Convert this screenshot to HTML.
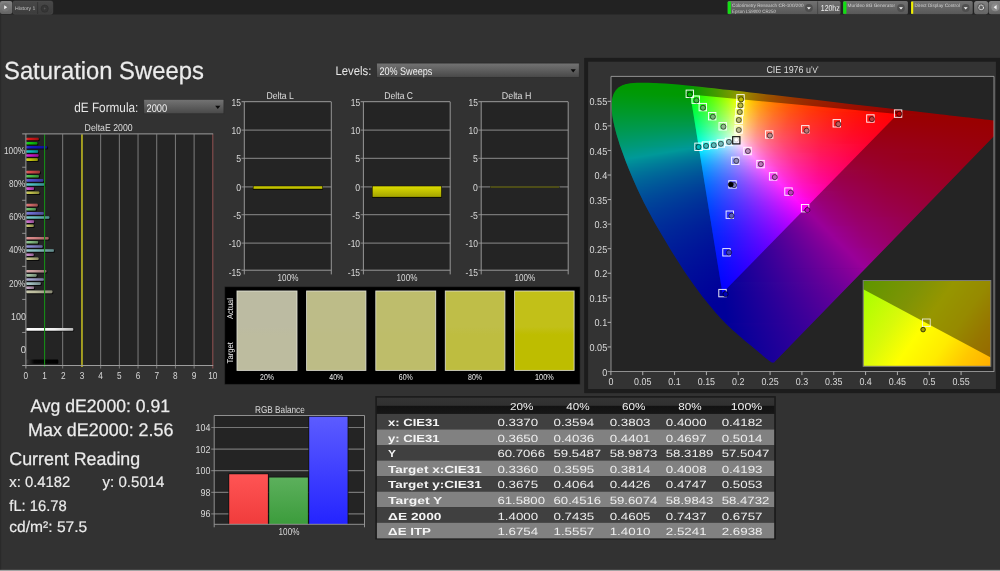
<!DOCTYPE html>
<html lang="en">
<head>
<meta charset="utf-8">
<title>Saturation Sweeps</title>
<style>
html,body{margin:0;padding:0;background:#323232;}
body{width:1000px;height:571px;overflow:hidden;position:relative;font-family:"Liberation Sans",sans-serif;}
svg{position:absolute;left:0;top:0;display:block;will-change:transform}
text{font-family:"Liberation Sans",sans-serif;text-rendering:geometricPrecision;}
</style>
</head>
<body>
<svg width="1000" height="571" viewBox="0 0 1000 571">
<defs>
<linearGradient id="btn" x1="0" y1="0" x2="0" y2="1"><stop offset="0" stop-color="#727272"/><stop offset="1" stop-color="#585858"/></linearGradient>
<linearGradient id="btn2" x1="0" y1="0" x2="0" y2="1"><stop offset="0" stop-color="#848484"/><stop offset="1" stop-color="#646464"/></linearGradient>
<linearGradient id="tab" x1="0" y1="0" x2="0" y2="1"><stop offset="0" stop-color="#484848"/><stop offset="1" stop-color="#3c3c3c"/></linearGradient>
<linearGradient id="dd" x1="0" y1="0" x2="0" y2="1"><stop offset="0" stop-color="#747474"/><stop offset="1" stop-color="#484848"/></linearGradient>
<linearGradient id="bshade" x1="0" y1="0" x2="1" y2="0"><stop offset="0" stop-color="#fff" stop-opacity="0.12"/><stop offset="0.3" stop-color="#000" stop-opacity="0.05"/><stop offset="1" stop-color="#000" stop-opacity="0.32"/></linearGradient>
<linearGradient id="wbar" x1="0" y1="0" x2="1" y2="0"><stop offset="0" stop-color="#ffffff"/><stop offset="0.6" stop-color="#f0f0f0"/><stop offset="1" stop-color="#b8b8b8"/></linearGradient>
<linearGradient id="kbar" x1="0" y1="0" x2="1" y2="0"><stop offset="0" stop-color="#3a3a3a"/><stop offset="0.25" stop-color="#050505"/><stop offset="1" stop-color="#000000"/></linearGradient>
<linearGradient id="rbar" x1="0" y1="0" x2="0" y2="1"><stop offset="0" stop-color="#ff5454"/><stop offset="1" stop-color="#f03c3c"/></linearGradient>
<linearGradient id="gbar" x1="0" y1="0" x2="0" y2="1"><stop offset="0" stop-color="#5cb05c"/><stop offset="1" stop-color="#3c9c3c"/></linearGradient>
<linearGradient id="bbar" x1="0" y1="0" x2="0" y2="1"><stop offset="0" stop-color="#5c5cff"/><stop offset="1" stop-color="#2424ff"/></linearGradient>
<linearGradient id="ybar" x1="0" y1="0" x2="0" y2="1"><stop offset="0" stop-color="#dcdc00"/><stop offset="1" stop-color="#a4a400"/></linearGradient>
<linearGradient id="sw0" x1="0" y1="0" x2="0" y2="1"><stop offset="0" stop-color="#bcbba2"/><stop offset="0.45" stop-color="#bcbba2"/><stop offset="0.55" stop-color="#bdbc9f"/><stop offset="1" stop-color="#bdbc9f"/></linearGradient>
<linearGradient id="sw1" x1="0" y1="0" x2="0" y2="1"><stop offset="0" stop-color="#bdbc88"/><stop offset="0.45" stop-color="#bdbc88"/><stop offset="0.55" stop-color="#bdbc86"/><stop offset="1" stop-color="#bdbc86"/></linearGradient>
<linearGradient id="sw2" x1="0" y1="0" x2="0" y2="1"><stop offset="0" stop-color="#bebd6c"/><stop offset="0.45" stop-color="#bebd6c"/><stop offset="0.55" stop-color="#bebd6a"/><stop offset="1" stop-color="#bebd6a"/></linearGradient>
<linearGradient id="sw3" x1="0" y1="0" x2="0" y2="1"><stop offset="0" stop-color="#bfbe48"/><stop offset="0.45" stop-color="#bfbe48"/><stop offset="0.55" stop-color="#bebd40"/><stop offset="1" stop-color="#bebd40"/></linearGradient>
<linearGradient id="sw4" x1="0" y1="0" x2="0" y2="1"><stop offset="0" stop-color="#c2c018"/><stop offset="0.45" stop-color="#c2c018"/><stop offset="0.55" stop-color="#bebd00"/><stop offset="1" stop-color="#bebd00"/></linearGradient>
<clipPath id="locus"><path d="M774.2 362.3 L774.0 362.4 L773.7 362.4 L773.5 362.6 L772.6 362.6 L772.1 362.5 L771.5 362.3 L770.4 361.5 L768.8 360.4 L767.4 359.3 L765.6 357.9 L764.2 356.8 L761.1 354.1 L759.2 352.5 L757.2 350.8 L753.8 348.0 L751.2 345.8 L748.3 343.5 L745.2 340.9 L741.9 338.1 L738.3 335.0 L736.4 333.3 L732.3 329.7 L730.2 327.7 L725.7 323.4 L723.4 321.0 L720.9 318.4 L718.3 315.5 L715.5 312.4 L712.5 308.8 L709.3 305.0 L705.9 300.8 L702.4 296.4 L698.9 291.7 L695.2 286.7 L691.5 281.5 L687.6 276.0 L683.7 270.2 L679.7 264.1 L675.7 257.7 L671.6 251.2 L663.4 237.6 L655.3 223.7 L647.6 209.5 L643.9 202.4 L640.4 195.3 L637.2 188.4 L634.1 181.6 L631.3 175.0 L628.6 168.6 L626.1 162.3 L623.9 156.3 L621.8 150.6 L619.9 145.2 L618.3 140.0 L616.8 135.2 L615.6 130.7 L614.5 126.5 L613.6 122.5 L612.9 118.8 L612.3 115.4 L611.9 112.2 L611.7 109.3 L611.6 106.6 L611.6 104.1 L611.8 101.7 L612.0 99.6 L612.5 97.5 L613.6 94.0 L615.3 91.0 L616.3 89.7 L618.5 87.5 L621.1 85.9 L622.5 85.2 L625.4 84.2 L630.2 83.3 L637.2 82.8 L648.0 82.7 L653.5 82.9 L659.2 83.2 L665.1 83.5 L671.4 84.0 L677.9 84.6 L684.8 85.2 L692.1 86.0 L699.9 86.8 L708.2 87.7 L714.0 88.3 L723.1 89.4 L729.6 90.1 L736.2 90.8 L743.2 91.6 L750.4 92.5 L757.9 93.3 L765.6 94.2 L773.6 95.1 L786.1 96.6 L794.7 97.6 L803.6 98.6 L817.1 100.1 L849.6 103.9 L863.1 105.4 L880.9 107.5 L889.6 108.5 L893.7 109.0 L901.7 109.9 L909.4 110.8 L916.7 111.6 L920.2 112.0 L926.9 112.8 L933.2 113.5 L939.1 114.2 L944.6 114.8 L949.7 115.4 L954.5 115.9 L961.0 116.7 L965.0 117.2 L968.8 117.6 L974.2 118.2 L979.0 118.8 L981.9 119.1 L984.6 119.4 L988.2 119.8 L991.3 120.2 L994.6 120.6 L996.8 120.8 L999.1 121.1 L1000.4 121.2 L1002.4 121.5 L1003.8 121.6 L1005.9 121.9 L1006.7 122.0 L1007.3 122.0 L1007.6 122.1 Z"/><rect x="0" y="0" width="0" height="0"/></clipPath>
<clipPath id="plotclip"><rect x="611.0" y="76.4" width="383.0" height="295.1"/></clipPath>
<clipPath id="gamut"><path d="M897.66 114.03 L690.29 94.61 L722.40 292.98 Z"/></clipPath>
<linearGradient id="r0" gradientUnits="userSpaceOnUse" x1="632.4" x2="657.6"><stop offset="0" stop-color="#090"/><stop offset="1" stop-color="#090"/></linearGradient>
<linearGradient id="r1" gradientUnits="userSpaceOnUse" x1="624.9" x2="672.7"><stop offset="0" stop-color="#090"/><stop offset="1" stop-color="#090"/></linearGradient>
<linearGradient id="r2" gradientUnits="userSpaceOnUse" x1="621.6" x2="683.8"><stop offset="0" stop-color="#090"/><stop offset="1" stop-color="#090"/></linearGradient>
<linearGradient id="r3" gradientUnits="userSpaceOnUse" x1="619.4" x2="693.8"><stop offset="0" stop-color="#090"/><stop offset=".933" stop-color="#090"/><stop offset="1" stop-color="#0b9900"/></linearGradient>
<linearGradient id="r4" gradientUnits="userSpaceOnUse" x1="617.7" x2="703.2"><stop offset="0" stop-color="#090"/><stop offset=".830" stop-color="#090"/><stop offset="1" stop-color="#290"/></linearGradient>
<linearGradient id="r5" gradientUnits="userSpaceOnUse" x1="616.5" x2="712.4"><stop offset="0" stop-color="#090"/><stop offset=".755" stop-color="#090"/><stop offset="1" stop-color="#3a9900"/></linearGradient>
<linearGradient id="r6" gradientUnits="userSpaceOnUse" x1="615.4" x2="721.4"><stop offset="0" stop-color="#009901"/><stop offset=".698" stop-color="#090"/><stop offset=".854" stop-color="#299900"/><stop offset="1" stop-color="#549900"/></linearGradient>
<linearGradient id="r7" gradientUnits="userSpaceOnUse" x1="614.5" x2="730.3"><stop offset="0" stop-color="#009903"/><stop offset=".647" stop-color="#090"/><stop offset=".832" stop-color="#369900"/><stop offset="1" stop-color="#719900"/></linearGradient>
<linearGradient id="r8" gradientUnits="userSpaceOnUse" x1="613.8" x2="739.1"><stop offset="0" stop-color="#009905"/><stop offset=".606" stop-color="#090"/><stop offset=".813" stop-color="#439900"/><stop offset="1" stop-color="#909900"/></linearGradient>
<linearGradient id="r9" gradientUnits="userSpaceOnUse" x1="613.2" x2="747.8"><stop offset="0" stop-color="#009907"/><stop offset=".570" stop-color="#090"/><stop offset=".774" stop-color="#489900"/><stop offset=".952" stop-color="#990"/><stop offset="1" stop-color="#998300"/></linearGradient>
<linearGradient id="r10" gradientUnits="userSpaceOnUse" x1="612.6" x2="756.5"><stop offset="0" stop-color="#009908"/><stop offset=".538" stop-color="#090"/><stop offset=".726" stop-color="#479900"/><stop offset=".892" stop-color="#989900"/><stop offset="1" stop-color="#996c00"/></linearGradient>
<linearGradient id="r11" gradientUnits="userSpaceOnUse" x1="612.1" x2="765.2"><stop offset="0" stop-color="#00990a"/><stop offset=".508" stop-color="#090"/><stop offset=".681" stop-color="#459900"/><stop offset=".844" stop-color="#999800"/><stop offset=".915" stop-color="#997600"/><stop offset="1" stop-color="#995a00"/></linearGradient>
<linearGradient id="r12" gradientUnits="userSpaceOnUse" x1="611.7" x2="773.9"><stop offset="0" stop-color="#00990c"/><stop offset=".483" stop-color="#090"/><stop offset=".649" stop-color="#479900"/><stop offset=".797" stop-color="#990"/><stop offset=".886" stop-color="#996d00"/><stop offset="1" stop-color="#994b00"/></linearGradient>
<linearGradient id="r13" gradientUnits="userSpaceOnUse" x1="611.4" x2="782.5"><stop offset="0" stop-color="#00990d"/><stop offset=".461" stop-color="#009902"/><stop offset=".615" stop-color="#469900"/><stop offset=".758" stop-color="#999800"/><stop offset=".805" stop-color="#997d00"/><stop offset=".860" stop-color="#960"/><stop offset="1" stop-color="#994000"/></linearGradient>
<linearGradient id="r14" gradientUnits="userSpaceOnUse" x1="611.1" x2="791.2"><stop offset="0" stop-color="#00990f"/><stop offset=".440" stop-color="#009904"/><stop offset=".587" stop-color="#469900"/><stop offset=".720" stop-color="#990"/><stop offset=".773" stop-color="#997a00"/><stop offset=".837" stop-color="#995f00"/><stop offset=".911" stop-color="#994900"/><stop offset="1" stop-color="#993600"/></linearGradient>
<linearGradient id="r15" gradientUnits="userSpaceOnUse" x1="611.0" x2="799.9"><stop offset="0" stop-color="#091"/><stop offset=".423" stop-color="#019906"/><stop offset=".563" stop-color="#489901"/><stop offset=".685" stop-color="#989900"/><stop offset=".746" stop-color="#997500"/><stop offset=".815" stop-color="#995900"/><stop offset=".899" stop-color="#994100"/><stop offset="1" stop-color="#992e00"/></linearGradient>
<linearGradient id="r16" gradientUnits="userSpaceOnUse" x1="611.0" x2="808.7"><stop offset="0" stop-color="#009912"/><stop offset=".404" stop-color="#009909"/><stop offset=".535" stop-color="#469904"/><stop offset=".654" stop-color="#989900"/><stop offset=".720" stop-color="#997100"/><stop offset=".793" stop-color="#995300"/><stop offset=".886" stop-color="#993b00"/><stop offset="1" stop-color="#992700"/></linearGradient>
<linearGradient id="r17" gradientUnits="userSpaceOnUse" x1="611.0" x2="817.4"><stop offset="0" stop-color="#009914"/><stop offset=".387" stop-color="#00990b"/><stop offset=".513" stop-color="#469906"/><stop offset=".627" stop-color="#999901"/><stop offset=".692" stop-color="#996f00"/><stop offset=".772" stop-color="#994f00"/><stop offset=".874" stop-color="#993500"/><stop offset="1" stop-color="#992100"/></linearGradient>
<linearGradient id="r18" gradientUnits="userSpaceOnUse" x1="611.0" x2="826.1"><stop offset="0" stop-color="#009916"/><stop offset=".374" stop-color="#00990d"/><stop offset=".494" stop-color="#479909"/><stop offset=".601" stop-color="#989904"/><stop offset=".668" stop-color="#996d00"/><stop offset=".752" stop-color="#994b00"/><stop offset=".861" stop-color="#993000"/><stop offset="1" stop-color="#991c00"/></linearGradient>
<linearGradient id="r19" gradientUnits="userSpaceOnUse" x1="611.0" x2="834.7"><stop offset="0" stop-color="#009918"/><stop offset=".359" stop-color="#00990f"/><stop offset=".475" stop-color="#47990b"/><stop offset=".578" stop-color="#999906"/><stop offset=".609" stop-color="#998004"/><stop offset=".645" stop-color="#996b02"/><stop offset=".734" stop-color="#994700"/><stop offset=".850" stop-color="#992c00"/><stop offset="1" stop-color="#991700"/></linearGradient>
<linearGradient id="r20" gradientUnits="userSpaceOnUse" x1="611.0" x2="843.4"><stop offset="0" stop-color="#009919"/><stop offset=".346" stop-color="#009912"/><stop offset=".456" stop-color="#46990e"/><stop offset=".555" stop-color="#989909"/><stop offset=".591" stop-color="#997d06"/><stop offset=".628" stop-color="#996704"/><stop offset=".718" stop-color="#994300"/><stop offset=".839" stop-color="#992800"/><stop offset="1" stop-color="#991300"/></linearGradient>
<linearGradient id="r21" gradientUnits="userSpaceOnUse" x1="611.0" x2="852.0"><stop offset="0" stop-color="#00991b"/><stop offset=".335" stop-color="#009914"/><stop offset=".441" stop-color="#479910"/><stop offset=".534" stop-color="#97990c"/><stop offset=".571" stop-color="#997b09"/><stop offset=".609" stop-color="#996506"/><stop offset=".702" stop-color="#994001"/><stop offset=".828" stop-color="#992400"/><stop offset="1" stop-color="#990f00"/></linearGradient>
<linearGradient id="r22" gradientUnits="userSpaceOnUse" x1="611.0" x2="860.7"><stop offset="0" stop-color="#00991d"/><stop offset=".324" stop-color="#009916"/><stop offset=".424" stop-color="#469913"/><stop offset=".518" stop-color="#99980f"/><stop offset=".552" stop-color="#997b0b"/><stop offset=".590" stop-color="#996308"/><stop offset=".686" stop-color="#993d02"/><stop offset=".818" stop-color="#992100"/><stop offset="1" stop-color="#990c00"/></linearGradient>
<linearGradient id="r23" gradientUnits="userSpaceOnUse" x1="611.0" x2="869.4"><stop offset="0" stop-color="#00991f"/><stop offset=".313" stop-color="#009919"/><stop offset=".412" stop-color="#479916"/><stop offset=".499" stop-color="#999913"/><stop offset=".532" stop-color="#997b0e"/><stop offset=".571" stop-color="#99620a"/><stop offset=".617" stop-color="#994c06"/><stop offset=".671" stop-color="#993a03"/><stop offset=".809" stop-color="#991e00"/><stop offset="1" stop-color="#990900"/></linearGradient>
<linearGradient id="r24" gradientUnits="userSpaceOnUse" x1="611.0" x2="878.1"><stop offset="0" stop-color="#009920"/><stop offset=".305" stop-color="#00991b"/><stop offset=".398" stop-color="#479919"/><stop offset=".482" stop-color="#999916"/><stop offset=".516" stop-color="#997a10"/><stop offset=".555" stop-color="#99600c"/><stop offset=".602" stop-color="#994a08"/><stop offset=".656" stop-color="#993804"/><stop offset=".798" stop-color="#991b00"/><stop offset="1" stop-color="#990600"/></linearGradient>
<linearGradient id="r25" gradientUnits="userSpaceOnUse" x1="611.0" x2="886.8"><stop offset="0" stop-color="#092"/><stop offset=".295" stop-color="#00991e"/><stop offset=".386" stop-color="#47991b"/><stop offset=".467" stop-color="#999819"/><stop offset=".500" stop-color="#997913"/><stop offset=".540" stop-color="#995e0d"/><stop offset=".587" stop-color="#994809"/><stop offset=".643" stop-color="#993505"/><stop offset=".790" stop-color="#991800"/><stop offset="1" stop-color="#990400"/></linearGradient>
<linearGradient id="r26" gradientUnits="userSpaceOnUse" x1="611.0" x2="895.5"><stop offset="0" stop-color="#009924"/><stop offset=".286" stop-color="#009920"/><stop offset=".372" stop-color="#45991e"/><stop offset=".453" stop-color="#99991c"/><stop offset=".486" stop-color="#997815"/><stop offset=".526" stop-color="#995c0f"/><stop offset=".574" stop-color="#99460b"/><stop offset=".632" stop-color="#993307"/><stop offset=".782" stop-color="#991600"/><stop offset="1" stop-color="#990200"/></linearGradient>
<linearGradient id="r27" gradientUnits="userSpaceOnUse" x1="611.0" x2="904.3"><stop offset="0" stop-color="#009926"/><stop offset=".278" stop-color="#009923"/><stop offset=".359" stop-color="#449921"/><stop offset=".440" stop-color="#99981f"/><stop offset=".472" stop-color="#997717"/><stop offset=".513" stop-color="#995a11"/><stop offset=".562" stop-color="#99430c"/><stop offset=".620" stop-color="#993008"/><stop offset=".777" stop-color="#991301"/><stop offset="1" stop-color="#900"/></linearGradient>
<linearGradient id="r28" gradientUnits="userSpaceOnUse" x1="611.0" x2="913.0"><stop offset="0" stop-color="#009928"/><stop offset=".271" stop-color="#009925"/><stop offset=".352" stop-color="#479924"/><stop offset=".426" stop-color="#999822"/><stop offset=".460" stop-color="#99751a"/><stop offset=".501" stop-color="#995813"/><stop offset=".550" stop-color="#99410d"/><stop offset=".610" stop-color="#992e08"/><stop offset=".686" stop-color="#991d04"/><stop offset=".780" stop-color="#991001"/><stop offset="1" stop-color="#900"/></linearGradient>
<linearGradient id="r29" gradientUnits="userSpaceOnUse" x1="611.0" x2="921.7"><stop offset="0" stop-color="#009929"/><stop offset=".264" stop-color="#009928"/><stop offset=".342" stop-color="#479927"/><stop offset=".413" stop-color="#999926"/><stop offset=".447" stop-color="#99751c"/><stop offset=".487" stop-color="#995815"/><stop offset=".537" stop-color="#99400f"/><stop offset=".600" stop-color="#992c09"/><stop offset=".682" stop-color="#991a05"/><stop offset=".785" stop-color="#990c01"/><stop offset=".929" stop-color="#900"/><stop offset="1" stop-color="#900"/></linearGradient>
<linearGradient id="r30" gradientUnits="userSpaceOnUse" x1="611.0" x2="930.4"><stop offset="0" stop-color="#00992b"/><stop offset=".257" stop-color="#00992a"/><stop offset=".332" stop-color="#45992a"/><stop offset=".402" stop-color="#999829"/><stop offset=".437" stop-color="#99731e"/><stop offset=".477" stop-color="#995516"/><stop offset=".529" stop-color="#993d10"/><stop offset=".592" stop-color="#99290a"/><stop offset=".679" stop-color="#991705"/><stop offset=".790" stop-color="#990901"/><stop offset=".901" stop-color="#900"/><stop offset="1" stop-color="#900"/></linearGradient>
<linearGradient id="r31" gradientUnits="userSpaceOnUse" x1="611.0" x2="939.0"><stop offset="0" stop-color="#00992d"/><stop offset=".251" stop-color="#00992d"/><stop offset=".324" stop-color="#46992d"/><stop offset=".391" stop-color="#99992c"/><stop offset=".425" stop-color="#997321"/><stop offset=".467" stop-color="#995318"/><stop offset=".519" stop-color="#993b11"/><stop offset=".583" stop-color="#99270b"/><stop offset=".676" stop-color="#991506"/><stop offset=".795" stop-color="#990702"/><stop offset=".875" stop-color="#900"/><stop offset="1" stop-color="#900"/></linearGradient>
<linearGradient id="r32" gradientUnits="userSpaceOnUse" x1="611.0" x2="947.7"><stop offset="0" stop-color="#00992f"/><stop offset=".245" stop-color="#00992f"/><stop offset=".315" stop-color="#459930"/><stop offset=".381" stop-color="#99982f"/><stop offset=".415" stop-color="#997123"/><stop offset=".457" stop-color="#99521a"/><stop offset=".510" stop-color="#993912"/><stop offset=".576" stop-color="#99250c"/><stop offset=".674" stop-color="#991206"/><stop offset=".801" stop-color="#990402"/><stop offset="1" stop-color="#900"/></linearGradient>
<linearGradient id="r33" gradientUnits="userSpaceOnUse" x1="611.0" x2="956.5"><stop offset="0" stop-color="#009931"/><stop offset=".239" stop-color="#009932"/><stop offset=".308" stop-color="#479933"/><stop offset=".370" stop-color="#993"/><stop offset=".405" stop-color="#997026"/><stop offset=".447" stop-color="#99501b"/><stop offset=".499" stop-color="#993713"/><stop offset=".566" stop-color="#99230d"/><stop offset=".669" stop-color="#991006"/><stop offset=".805" stop-color="#990202"/><stop offset="1" stop-color="#900"/></linearGradient>
<linearGradient id="r34" gradientUnits="userSpaceOnUse" x1="611.0" x2="965.2"><stop offset="0" stop-color="#093"/><stop offset=".234" stop-color="#009935"/><stop offset=".299" stop-color="#459936"/><stop offset=".362" stop-color="#999736"/><stop offset=".396" stop-color="#996e28"/><stop offset=".439" stop-color="#994e1d"/><stop offset=".492" stop-color="#993514"/><stop offset=".560" stop-color="#99210d"/><stop offset=".664" stop-color="#990e07"/><stop offset=".803" stop-color="#990002"/><stop offset="1" stop-color="#900"/></linearGradient>
<linearGradient id="r35" gradientUnits="userSpaceOnUse" x1="611.1" x2="973.8"><stop offset="0" stop-color="#009935"/><stop offset=".229" stop-color="#009938"/><stop offset=".293" stop-color="#479939"/><stop offset=".353" stop-color="#99983a"/><stop offset=".386" stop-color="#996f2b"/><stop offset=".428" stop-color="#994e1f"/><stop offset=".482" stop-color="#993416"/><stop offset=".551" stop-color="#991f0e"/><stop offset=".650" stop-color="#990e08"/><stop offset=".780" stop-color="#990003"/><stop offset="1" stop-color="#900"/></linearGradient>
<linearGradient id="r36" gradientUnits="userSpaceOnUse" x1="611.3" x2="982.5"><stop offset="0" stop-color="#009937"/><stop offset=".223" stop-color="#00993a"/><stop offset=".285" stop-color="#45993c"/><stop offset=".345" stop-color="#99973d"/><stop offset=".378" stop-color="#996d2d"/><stop offset=".420" stop-color="#994c21"/><stop offset=".474" stop-color="#993217"/><stop offset=".544" stop-color="#991e0f"/><stop offset=".638" stop-color="#990d08"/><stop offset=".759" stop-color="#990004"/><stop offset="1" stop-color="#900"/></linearGradient>
<linearGradient id="r37" gradientUnits="userSpaceOnUse" x1="611.4" x2="991.2"><stop offset="0" stop-color="#009939"/><stop offset=".218" stop-color="#00993d"/><stop offset=".279" stop-color="#46993f"/><stop offset=".336" stop-color="#999841"/><stop offset=".368" stop-color="#996d30"/><stop offset=".411" stop-color="#994c22"/><stop offset=".466" stop-color="#993118"/><stop offset=".536" stop-color="#991c10"/><stop offset=".625" stop-color="#990c09"/><stop offset=".739" stop-color="#990004"/><stop offset="1" stop-color="#900"/></linearGradient>
<linearGradient id="r38" gradientUnits="userSpaceOnUse" x1="611.6" x2="994.0"><stop offset="0" stop-color="#00993b"/><stop offset=".217" stop-color="#009940"/><stop offset=".278" stop-color="#489942"/><stop offset=".332" stop-color="#999945"/><stop offset=".365" stop-color="#996d33"/><stop offset=".408" stop-color="#994b24"/><stop offset=".463" stop-color="#993019"/><stop offset=".532" stop-color="#991c11"/><stop offset=".620" stop-color="#990c0a"/><stop offset=".731" stop-color="#990005"/><stop offset="1" stop-color="#900"/></linearGradient>
<linearGradient id="r39" gradientUnits="userSpaceOnUse" x1="611.8" x2="994.0"><stop offset="0" stop-color="#00993d"/><stop offset=".217" stop-color="#009943"/><stop offset=".277" stop-color="#479945"/><stop offset=".332" stop-color="#999848"/><stop offset=".365" stop-color="#996d35"/><stop offset=".408" stop-color="#994a26"/><stop offset=".463" stop-color="#99301b"/><stop offset=".532" stop-color="#991c12"/><stop offset=".618" stop-color="#990c0b"/><stop offset=".728" stop-color="#990006"/><stop offset="1" stop-color="#900"/></linearGradient>
<linearGradient id="r40" gradientUnits="userSpaceOnUse" x1="612.0" x2="994.0"><stop offset="0" stop-color="#00993f"/><stop offset=".217" stop-color="#019946"/><stop offset=".277" stop-color="#489949"/><stop offset=".331" stop-color="#99984c"/><stop offset=".364" stop-color="#996d38"/><stop offset=".407" stop-color="#994a28"/><stop offset=".462" stop-color="#99301c"/><stop offset=".531" stop-color="#991b13"/><stop offset=".618" stop-color="#990c0c"/><stop offset=".726" stop-color="#990007"/><stop offset="1" stop-color="#900"/></linearGradient>
<linearGradient id="r41" gradientUnits="userSpaceOnUse" x1="612.2" x2="994.0"><stop offset="0" stop-color="#009941"/><stop offset=".217" stop-color="#019949"/><stop offset=".275" stop-color="#45994c"/><stop offset=".331" stop-color="#99974f"/><stop offset=".364" stop-color="#996c3b"/><stop offset=".407" stop-color="#99492a"/><stop offset=".462" stop-color="#992f1e"/><stop offset=".531" stop-color="#991b14"/><stop offset=".615" stop-color="#990c0d"/><stop offset=".723" stop-color="#990008"/><stop offset="1" stop-color="#900"/></linearGradient>
<linearGradient id="r42" gradientUnits="userSpaceOnUse" x1="612.4" x2="994.0"><stop offset="0" stop-color="#009943"/><stop offset=".216" stop-color="#00994b"/><stop offset=".275" stop-color="#45994f"/><stop offset=".330" stop-color="#999854"/><stop offset=".363" stop-color="#996c3e"/><stop offset=".404" stop-color="#994a2d"/><stop offset=".458" stop-color="#993020"/><stop offset=".529" stop-color="#991b16"/><stop offset=".613" stop-color="#990c0e"/><stop offset=".720" stop-color="#990008"/><stop offset="1" stop-color="#990001"/></linearGradient>
<linearGradient id="r43" gradientUnits="userSpaceOnUse" x1="612.7" x2="994.0"><stop offset="0" stop-color="#009945"/><stop offset=".216" stop-color="#00994e"/><stop offset=".275" stop-color="#469953"/><stop offset=".329" stop-color="#999958"/><stop offset=".362" stop-color="#996c41"/><stop offset=".404" stop-color="#994a2f"/><stop offset=".457" stop-color="#993022"/><stop offset=".528" stop-color="#991b17"/><stop offset=".612" stop-color="#990c0f"/><stop offset=".718" stop-color="#990009"/><stop offset="1" stop-color="#990001"/></linearGradient>
<linearGradient id="r44" gradientUnits="userSpaceOnUse" x1="612.9" x2="994.0"><stop offset="0" stop-color="#009947"/><stop offset=".216" stop-color="#009951"/><stop offset=".274" stop-color="#459956"/><stop offset=".329" stop-color="#99985b"/><stop offset=".362" stop-color="#996c44"/><stop offset=".404" stop-color="#994a31"/><stop offset=".457" stop-color="#992f23"/><stop offset=".528" stop-color="#991b18"/><stop offset=".611" stop-color="#990c10"/><stop offset=".716" stop-color="#99000a"/><stop offset="1" stop-color="#990002"/></linearGradient>
<linearGradient id="r45" gradientUnits="userSpaceOnUse" x1="613.1" x2="994.0"><stop offset="0" stop-color="#009949"/><stop offset=".217" stop-color="#095"/><stop offset=".274" stop-color="#46995a"/><stop offset=".328" stop-color="#99985f"/><stop offset=".361" stop-color="#996c47"/><stop offset=".403" stop-color="#994934"/><stop offset=".457" stop-color="#992f25"/><stop offset=".528" stop-color="#991a1a"/><stop offset=".609" stop-color="#990c12"/><stop offset=".713" stop-color="#99000b"/><stop offset="1" stop-color="#990002"/></linearGradient>
<linearGradient id="r46" gradientUnits="userSpaceOnUse" x1="613.4" x2="994.0"><stop offset="0" stop-color="#00994b"/><stop offset=".217" stop-color="#009958"/><stop offset=".273" stop-color="#45995d"/><stop offset=".328" stop-color="#999762"/><stop offset=".361" stop-color="#996b49"/><stop offset=".403" stop-color="#994936"/><stop offset=".457" stop-color="#992e27"/><stop offset=".528" stop-color="#991a1b"/><stop offset=".710" stop-color="#99000c"/><stop offset="1" stop-color="#990003"/></linearGradient>
<linearGradient id="r47" gradientUnits="userSpaceOnUse" x1="613.6" x2="994.0"><stop offset="0" stop-color="#00994d"/><stop offset=".217" stop-color="#00995b"/><stop offset=".273" stop-color="#469961"/><stop offset=".327" stop-color="#999767"/><stop offset=".360" stop-color="#996b4c"/><stop offset=".402" stop-color="#994838"/><stop offset=".456" stop-color="#992e28"/><stop offset=".527" stop-color="#991a1c"/><stop offset=".707" stop-color="#99000d"/><stop offset="1" stop-color="#990003"/></linearGradient>
<linearGradient id="r48" gradientUnits="userSpaceOnUse" x1="613.9" x2="994.0"><stop offset="0" stop-color="#00994f"/><stop offset=".217" stop-color="#01995e"/><stop offset=".273" stop-color="#469964"/><stop offset=".326" stop-color="#99986b"/><stop offset=".359" stop-color="#996b50"/><stop offset=".401" stop-color="#99493a"/><stop offset=".455" stop-color="#992e2a"/><stop offset=".526" stop-color="#99191d"/><stop offset=".704" stop-color="#99000e"/><stop offset="1" stop-color="#990004"/></linearGradient>
<linearGradient id="r49" gradientUnits="userSpaceOnUse" x1="614.1" x2="994.0"><stop offset="0" stop-color="#009951"/><stop offset=".216" stop-color="#009961"/><stop offset=".272" stop-color="#459968"/><stop offset=".325" stop-color="#999970"/><stop offset=".357" stop-color="#996c54"/><stop offset=".399" stop-color="#99493d"/><stop offset=".453" stop-color="#992e2c"/><stop offset=".524" stop-color="#991a1f"/><stop offset=".701" stop-color="#99000f"/><stop offset="1" stop-color="#990004"/></linearGradient>
<linearGradient id="r50" gradientUnits="userSpaceOnUse" x1="614.4" x2="994.0"><stop offset="0" stop-color="#009954"/><stop offset=".216" stop-color="#009964"/><stop offset=".271" stop-color="#44996b"/><stop offset=".325" stop-color="#999773"/><stop offset=".357" stop-color="#996b56"/><stop offset=".399" stop-color="#99483f"/><stop offset=".453" stop-color="#992e2e"/><stop offset=".524" stop-color="#991920"/><stop offset=".699" stop-color="#990010"/><stop offset="1" stop-color="#990005"/></linearGradient>
<linearGradient id="r51" gradientUnits="userSpaceOnUse" x1="614.7" x2="994.0"><stop offset="0" stop-color="#009956"/><stop offset=".216" stop-color="#009968"/><stop offset=".271" stop-color="#45996f"/><stop offset=".324" stop-color="#999877"/><stop offset=".356" stop-color="#996b59"/><stop offset=".398" stop-color="#994842"/><stop offset=".452" stop-color="#992e30"/><stop offset=".523" stop-color="#991921"/><stop offset=".696" stop-color="#901"/><stop offset="1" stop-color="#990005"/></linearGradient>
<linearGradient id="r52" gradientUnits="userSpaceOnUse" x1="615.0" x2="994.0"><stop offset="0" stop-color="#009958"/><stop offset=".216" stop-color="#00996b"/><stop offset=".273" stop-color="#489973"/><stop offset=".323" stop-color="#99997c"/><stop offset=".354" stop-color="#996c5d"/><stop offset=".397" stop-color="#994844"/><stop offset=".451" stop-color="#992e31"/><stop offset=".522" stop-color="#991923"/><stop offset=".693" stop-color="#990012"/><stop offset="1" stop-color="#990005"/></linearGradient>
<linearGradient id="r53" gradientUnits="userSpaceOnUse" x1="615.2" x2="994.0"><stop offset="0" stop-color="#00995a"/><stop offset=".215" stop-color="#00996e"/><stop offset=".270" stop-color="#459977"/><stop offset=".322" stop-color="#999981"/><stop offset=".354" stop-color="#996c60"/><stop offset=".396" stop-color="#994847"/><stop offset=".450" stop-color="#992d33"/><stop offset=".520" stop-color="#991924"/><stop offset=".690" stop-color="#990013"/><stop offset="1" stop-color="#990006"/></linearGradient>
<linearGradient id="r54" gradientUnits="userSpaceOnUse" x1="615.5" x2="994.0"><stop offset="0" stop-color="#00995d"/><stop offset=".215" stop-color="#009972"/><stop offset=".271" stop-color="#47997b"/><stop offset=".321" stop-color="#999985"/><stop offset=".353" stop-color="#996c64"/><stop offset=".395" stop-color="#994849"/><stop offset=".449" stop-color="#992d35"/><stop offset=".519" stop-color="#991826"/><stop offset=".687" stop-color="#990014"/><stop offset="1" stop-color="#990006"/></linearGradient>
<linearGradient id="r55" gradientUnits="userSpaceOnUse" x1="615.8" x2="994.0"><stop offset="0" stop-color="#00995f"/><stop offset=".215" stop-color="#009975"/><stop offset=".269" stop-color="#45997f"/><stop offset=".321" stop-color="#999889"/><stop offset=".353" stop-color="#996b66"/><stop offset=".395" stop-color="#99474b"/><stop offset=".449" stop-color="#992c37"/><stop offset=".519" stop-color="#991827"/><stop offset=".684" stop-color="#990015"/><stop offset="1" stop-color="#990007"/></linearGradient>
<linearGradient id="r56" gradientUnits="userSpaceOnUse" x1="616.1" x2="993.6"><stop offset="0" stop-color="#009961"/><stop offset=".215" stop-color="#009979"/><stop offset=".268" stop-color="#439982"/><stop offset=".321" stop-color="#99988d"/><stop offset=".352" stop-color="#996a6a"/><stop offset=".395" stop-color="#99474d"/><stop offset=".449" stop-color="#992c38"/><stop offset=".519" stop-color="#991828"/><stop offset=".682" stop-color="#990016"/><stop offset="1" stop-color="#990007"/></linearGradient>
<linearGradient id="r57" gradientUnits="userSpaceOnUse" x1="616.4" x2="992.6"><stop offset="0" stop-color="#009964"/><stop offset=".215" stop-color="#00997c"/><stop offset=".270" stop-color="#469987"/><stop offset=".320" stop-color="#999993"/><stop offset=".335" stop-color="#99817f"/><stop offset=".352" stop-color="#996b6d"/><stop offset=".393" stop-color="#994851"/><stop offset=".448" stop-color="#992c3b"/><stop offset=".518" stop-color="#99182a"/><stop offset=".681" stop-color="#990017"/><stop offset="1" stop-color="#990008"/></linearGradient>
<linearGradient id="r58" gradientUnits="userSpaceOnUse" x1="616.7" x2="991.7"><stop offset="0" stop-color="#096"/><stop offset=".216" stop-color="#009980"/><stop offset=".271" stop-color="#47998b"/><stop offset=".320" stop-color="#999998"/><stop offset=".335" stop-color="#998083"/><stop offset=".352" stop-color="#996a71"/><stop offset=".393" stop-color="#994753"/><stop offset=".447" stop-color="#992d3d"/><stop offset=".517" stop-color="#99182c"/><stop offset=".680" stop-color="#990018"/><stop offset="1" stop-color="#990009"/></linearGradient>
<linearGradient id="r59" gradientUnits="userSpaceOnUse" x1="617.1" x2="990.7"><stop offset="0" stop-color="#009968"/><stop offset=".217" stop-color="#009984"/><stop offset=".267" stop-color="#42998e"/><stop offset=".307" stop-color="#829999"/><stop offset=".322" stop-color="#999599"/><stop offset=".354" stop-color="#996872"/><stop offset=".396" stop-color="#994655"/><stop offset=".451" stop-color="#992b3e"/><stop offset=".521" stop-color="#99172c"/><stop offset=".679" stop-color="#990019"/><stop offset="1" stop-color="#990009"/></linearGradient>
<linearGradient id="r60" gradientUnits="userSpaceOnUse" x1="617.4" x2="989.7"><stop offset="0" stop-color="#00996b"/><stop offset=".216" stop-color="#009987"/><stop offset=".255" stop-color="#309990"/><stop offset=".293" stop-color="#699999"/><stop offset=".326" stop-color="#998e97"/><stop offset=".358" stop-color="#996372"/><stop offset=".401" stop-color="#994254"/><stop offset=".456" stop-color="#99293e"/><stop offset=".528" stop-color="#99152d"/><stop offset=".678" stop-color="#99001a"/><stop offset="1" stop-color="#99000a"/></linearGradient>
<linearGradient id="r61" gradientUnits="userSpaceOnUse" x1="617.7" x2="988.8"><stop offset="0" stop-color="#00996d"/><stop offset=".217" stop-color="#00998b"/><stop offset=".276" stop-color="#4e9999"/><stop offset=".328" stop-color="#998a98"/><stop offset=".361" stop-color="#996173"/><stop offset=".404" stop-color="#994056"/><stop offset=".459" stop-color="#99283f"/><stop offset=".532" stop-color="#99142d"/><stop offset=".677" stop-color="#99001b"/><stop offset="1" stop-color="#99000a"/></linearGradient>
<linearGradient id="r62" gradientUnits="userSpaceOnUse" x1="618.0" x2="987.8"><stop offset="0" stop-color="#009970"/><stop offset=".119" stop-color="#00997e"/><stop offset=".218" stop-color="#00998f"/><stop offset=".261" stop-color="#389999"/><stop offset=".331" stop-color="#998699"/><stop offset=".365" stop-color="#995d73"/><stop offset=".408" stop-color="#993e56"/><stop offset=".464" stop-color="#99263f"/><stop offset=".535" stop-color="#99142e"/><stop offset=".676" stop-color="#99001c"/><stop offset="1" stop-color="#99000b"/></linearGradient>
<linearGradient id="r63" gradientUnits="userSpaceOnUse" x1="618.4" x2="986.8"><stop offset="0" stop-color="#009972"/><stop offset=".119" stop-color="#009981"/><stop offset=".217" stop-color="#009993"/><stop offset=".244" stop-color="#219999"/><stop offset=".335" stop-color="#997f97"/><stop offset=".369" stop-color="#995972"/><stop offset=".412" stop-color="#993b56"/><stop offset=".469" stop-color="#992440"/><stop offset=".541" stop-color="#99122e"/><stop offset=".674" stop-color="#99001d"/><stop offset="1" stop-color="#99000b"/></linearGradient>
<linearGradient id="r64" gradientUnits="userSpaceOnUse" x1="618.7" x2="985.9"><stop offset="0" stop-color="#009975"/><stop offset=".120" stop-color="#009984"/><stop offset=".218" stop-color="#009997"/><stop offset=".275" stop-color="#468d99"/><stop offset=".337" stop-color="#997c98"/><stop offset=".371" stop-color="#995774"/><stop offset=".416" stop-color="#993956"/><stop offset=".473" stop-color="#992340"/><stop offset=".546" stop-color="#99112f"/><stop offset=".673" stop-color="#99001e"/><stop offset="1" stop-color="#99000c"/></linearGradient>
<linearGradient id="r65" gradientUnits="userSpaceOnUse" x1="619.0" x2="984.9"><stop offset="0" stop-color="#097"/><stop offset=".219" stop-color="#009799"/><stop offset=".280" stop-color="#4b8899"/><stop offset=".340" stop-color="#997899"/><stop offset=".374" stop-color="#995474"/><stop offset=".419" stop-color="#993757"/><stop offset=".477" stop-color="#992141"/><stop offset=".551" stop-color="#991030"/><stop offset=".672" stop-color="#99001f"/><stop offset="1" stop-color="#99000d"/></linearGradient>
<linearGradient id="r66" gradientUnits="userSpaceOnUse" x1="619.4" x2="983.9"><stop offset="0" stop-color="#00997a"/><stop offset=".193" stop-color="#099"/><stop offset=".218" stop-color="#009499"/><stop offset=".274" stop-color="#418699"/><stop offset=".344" stop-color="#997398"/><stop offset=".379" stop-color="#995073"/><stop offset=".425" stop-color="#993557"/><stop offset=".482" stop-color="#992041"/><stop offset=".556" stop-color="#990f30"/><stop offset=".671" stop-color="#990020"/><stop offset="1" stop-color="#99000d"/></linearGradient>
<linearGradient id="r67" gradientUnits="userSpaceOnUse" x1="619.7" x2="982.9"><stop offset="0" stop-color="#00997d"/><stop offset=".177" stop-color="#099"/><stop offset=".219" stop-color="#009099"/><stop offset=".347" stop-color="#996f98"/><stop offset=".382" stop-color="#994d74"/><stop offset=".428" stop-color="#993358"/><stop offset=".486" stop-color="#991e42"/><stop offset=".560" stop-color="#990e31"/><stop offset=".670" stop-color="#902"/><stop offset="1" stop-color="#99000e"/></linearGradient>
<linearGradient id="r68" gradientUnits="userSpaceOnUse" x1="620.1" x2="982.0"><stop offset="0" stop-color="#00997f"/><stop offset=".160" stop-color="#099"/><stop offset=".218" stop-color="#008c99"/><stop offset=".279" stop-color="#437e99"/><stop offset=".349" stop-color="#996c99"/><stop offset=".385" stop-color="#994b75"/><stop offset=".431" stop-color="#993159"/><stop offset=".490" stop-color="#991d42"/><stop offset=".565" stop-color="#990d31"/><stop offset=".669" stop-color="#990023"/><stop offset="1" stop-color="#99000e"/></linearGradient>
<linearGradient id="r69" gradientUnits="userSpaceOnUse" x1="620.4" x2="981.0"><stop offset="0" stop-color="#009982"/><stop offset=".143" stop-color="#099"/><stop offset=".219" stop-color="#008999"/><stop offset=".353" stop-color="#996898"/><stop offset=".386" stop-color="#994a77"/><stop offset=".428" stop-color="#99335d"/><stop offset=".479" stop-color="#992048"/><stop offset=".543" stop-color="#991137"/><stop offset=".668" stop-color="#990024"/><stop offset="1" stop-color="#99000f"/></linearGradient>
<linearGradient id="r70" gradientUnits="userSpaceOnUse" x1="620.8" x2="980.0"><stop offset="0" stop-color="#009985"/><stop offset=".127" stop-color="#099"/><stop offset=".220" stop-color="#008599"/><stop offset=".356" stop-color="#996498"/><stop offset=".389" stop-color="#994878"/><stop offset=".431" stop-color="#99315d"/><stop offset=".483" stop-color="#991f49"/><stop offset=".547" stop-color="#991038"/><stop offset=".666" stop-color="#990025"/><stop offset="1" stop-color="#990010"/></linearGradient>
<linearGradient id="r71" gradientUnits="userSpaceOnUse" x1="621.1" x2="979.1"><stop offset="0" stop-color="#098"/><stop offset=".109" stop-color="#099"/><stop offset=".219" stop-color="#008299"/><stop offset=".285" stop-color="#457499"/><stop offset=".359" stop-color="#996198"/><stop offset=".392" stop-color="#994678"/><stop offset=".434" stop-color="#992f5e"/><stop offset=".486" stop-color="#991e49"/><stop offset=".549" stop-color="#991039"/><stop offset=".665" stop-color="#990026"/><stop offset=".809" stop-color="#99001a"/><stop offset="1" stop-color="#990010"/></linearGradient>
<linearGradient id="r72" gradientUnits="userSpaceOnUse" x1="621.5" x2="978.1"><stop offset="0" stop-color="#00998a"/><stop offset=".091" stop-color="#099"/><stop offset=".220" stop-color="#007f99"/><stop offset=".363" stop-color="#995d98"/><stop offset=".396" stop-color="#994378"/><stop offset=".438" stop-color="#992d5f"/><stop offset=".490" stop-color="#991c4a"/><stop offset=".553" stop-color="#990f39"/><stop offset=".664" stop-color="#990028"/><stop offset=".808" stop-color="#99001b"/><stop offset="1" stop-color="#901"/></linearGradient>
<linearGradient id="r73" gradientUnits="userSpaceOnUse" x1="621.9" x2="977.1"><stop offset="0" stop-color="#00998d"/><stop offset=".075" stop-color="#099"/><stop offset=".221" stop-color="#007c99"/><stop offset=".366" stop-color="#995a98"/><stop offset=".399" stop-color="#994179"/><stop offset=".442" stop-color="#992c5f"/><stop offset=".494" stop-color="#991b4b"/><stop offset=".557" stop-color="#990e3a"/><stop offset=".662" stop-color="#990029"/><stop offset=".807" stop-color="#99001c"/><stop offset="1" stop-color="#901"/></linearGradient>
<linearGradient id="r74" gradientUnits="userSpaceOnUse" x1="622.2" x2="976.1"><stop offset="0" stop-color="#009990"/><stop offset=".056" stop-color="#099"/><stop offset=".220" stop-color="#007999"/><stop offset=".369" stop-color="#995798"/><stop offset=".403" stop-color="#993f79"/><stop offset=".445" stop-color="#992a60"/><stop offset=".497" stop-color="#991a4b"/><stop offset=".561" stop-color="#990d3b"/><stop offset=".661" stop-color="#99002a"/><stop offset=".806" stop-color="#99001d"/><stop offset="1" stop-color="#990012"/></linearGradient>
<linearGradient id="r75" gradientUnits="userSpaceOnUse" x1="622.6" x2="975.2"><stop offset="0" stop-color="#009993"/><stop offset=".038" stop-color="#099"/><stop offset=".221" stop-color="#007699"/><stop offset=".297" stop-color="#4b6699"/><stop offset=".371" stop-color="#959"/><stop offset=".405" stop-color="#993d7a"/><stop offset=".448" stop-color="#992961"/><stop offset=".500" stop-color="#99194c"/><stop offset=".564" stop-color="#990c3c"/><stop offset=".660" stop-color="#99002c"/><stop offset=".806" stop-color="#99001d"/><stop offset="1" stop-color="#990013"/></linearGradient>
<linearGradient id="r76" gradientUnits="userSpaceOnUse" x1="623.0" x2="974.2"><stop offset="0" stop-color="#009996"/><stop offset=".026" stop-color="#009899"/><stop offset=".220" stop-color="#007499"/><stop offset=".376" stop-color="#995198"/><stop offset=".410" stop-color="#993a7a"/><stop offset=".452" stop-color="#992761"/><stop offset=".504" stop-color="#99184d"/><stop offset=".568" stop-color="#990c3c"/><stop offset=".659" stop-color="#99002d"/><stop offset=".805" stop-color="#99001e"/><stop offset="1" stop-color="#990013"/></linearGradient>
<linearGradient id="r77" gradientUnits="userSpaceOnUse" x1="623.4" x2="973.2"><stop offset="0" stop-color="#099"/><stop offset=".221" stop-color="#007199"/><stop offset=".379" stop-color="#994e98"/><stop offset=".413" stop-color="#99387a"/><stop offset=".456" stop-color="#992662"/><stop offset=".507" stop-color="#99174e"/><stop offset=".571" stop-color="#990b3d"/><stop offset=".657" stop-color="#99002e"/><stop offset=".804" stop-color="#99001f"/><stop offset="1" stop-color="#990014"/></linearGradient>
<linearGradient id="r78" gradientUnits="userSpaceOnUse" x1="623.8" x2="972.3"><stop offset="0" stop-color="#009699"/><stop offset=".221" stop-color="#006f99"/><stop offset=".294" stop-color="#436099"/><stop offset=".382" stop-color="#994b98"/><stop offset=".416" stop-color="#99367b"/><stop offset=".459" stop-color="#992462"/><stop offset=".511" stop-color="#99164e"/><stop offset=".574" stop-color="#990a3e"/><stop offset=".656" stop-color="#990030"/><stop offset=".803" stop-color="#990020"/><stop offset="1" stop-color="#990015"/></linearGradient>
<linearGradient id="r79" gradientUnits="userSpaceOnUse" x1="624.1" x2="971.3"><stop offset="0" stop-color="#009399"/><stop offset=".222" stop-color="#006c99"/><stop offset=".304" stop-color="#4a5b99"/><stop offset=".384" stop-color="#994999"/><stop offset=".419" stop-color="#99357c"/><stop offset=".462" stop-color="#992363"/><stop offset=".514" stop-color="#99154f"/><stop offset=".577" stop-color="#990a3f"/><stop offset=".653" stop-color="#990031"/><stop offset=".748" stop-color="#990026"/><stop offset="1" stop-color="#990015"/></linearGradient>
<linearGradient id="r80" gradientUnits="userSpaceOnUse" x1="624.5" x2="970.3"><stop offset="0" stop-color="#009199"/><stop offset=".223" stop-color="#006a99"/><stop offset=".306" stop-color="#4b5999"/><stop offset=".387" stop-color="#994799"/><stop offset=".423" stop-color="#99327b"/><stop offset=".465" stop-color="#992264"/><stop offset=".517" stop-color="#991450"/><stop offset=".581" stop-color="#99093f"/><stop offset=".653" stop-color="#990032"/><stop offset=".750" stop-color="#990027"/><stop offset="1" stop-color="#990016"/></linearGradient>
<linearGradient id="r81" gradientUnits="userSpaceOnUse" x1="624.9" x2="969.3"><stop offset="0" stop-color="#008e99"/><stop offset=".222" stop-color="#006799"/><stop offset=".392" stop-color="#994398"/><stop offset=".427" stop-color="#99307c"/><stop offset=".470" stop-color="#992064"/><stop offset=".522" stop-color="#991350"/><stop offset=".585" stop-color="#990840"/><stop offset=".652" stop-color="#990034"/><stop offset=".753" stop-color="#990027"/><stop offset="1" stop-color="#990017"/></linearGradient>
<linearGradient id="r82" gradientUnits="userSpaceOnUse" x1="625.3" x2="968.4"><stop offset="0" stop-color="#008b99"/><stop offset=".223" stop-color="#006599"/><stop offset=".307" stop-color="#485499"/><stop offset=".394" stop-color="#994299"/><stop offset=".429" stop-color="#992f7d"/><stop offset=".473" stop-color="#991f65"/><stop offset=".525" stop-color="#991251"/><stop offset=".588" stop-color="#990741"/><stop offset=".649" stop-color="#990036"/><stop offset=".755" stop-color="#990028"/><stop offset="1" stop-color="#990017"/></linearGradient>
<linearGradient id="r83" gradientUnits="userSpaceOnUse" x1="625.7" x2="967.4"><stop offset="0" stop-color="#008999"/><stop offset=".222" stop-color="#006399"/><stop offset=".308" stop-color="#485299"/><stop offset=".398" stop-color="#993f99"/><stop offset=".433" stop-color="#992d7d"/><stop offset=".477" stop-color="#991e65"/><stop offset=".529" stop-color="#991152"/><stop offset=".592" stop-color="#990741"/><stop offset=".649" stop-color="#990037"/><stop offset=".759" stop-color="#990029"/><stop offset="1" stop-color="#990018"/></linearGradient>
<linearGradient id="r84" gradientUnits="userSpaceOnUse" x1="626.1" x2="966.4"><stop offset="0" stop-color="#008699"/><stop offset=".223" stop-color="#006199"/><stop offset=".313" stop-color="#4a4f99"/><stop offset=".401" stop-color="#993d99"/><stop offset=".438" stop-color="#992b7d"/><stop offset=".480" stop-color="#991d66"/><stop offset=".532" stop-color="#991053"/><stop offset=".595" stop-color="#990642"/><stop offset=".648" stop-color="#990038"/><stop offset=".761" stop-color="#99002a"/><stop offset="1" stop-color="#990019"/></linearGradient>
<linearGradient id="r85" gradientUnits="userSpaceOnUse" x1="626.5" x2="965.5"><stop offset="0" stop-color="#008499"/><stop offset=".223" stop-color="#005f99"/><stop offset=".314" stop-color="#4a4d99"/><stop offset=".404" stop-color="#993b99"/><stop offset=".441" stop-color="#99297d"/><stop offset=".484" stop-color="#991b66"/><stop offset=".535" stop-color="#991053"/><stop offset=".599" stop-color="#990543"/><stop offset=".646" stop-color="#99003a"/><stop offset=".764" stop-color="#99002a"/><stop offset="1" stop-color="#990019"/></linearGradient>
<linearGradient id="r86" gradientUnits="userSpaceOnUse" x1="626.9" x2="964.5"><stop offset="0" stop-color="#008199"/><stop offset=".223" stop-color="#005d99"/><stop offset=".408" stop-color="#993898"/><stop offset=".445" stop-color="#99287d"/><stop offset=".488" stop-color="#991a66"/><stop offset=".540" stop-color="#990f54"/><stop offset=".602" stop-color="#990544"/><stop offset=".645" stop-color="#99003b"/><stop offset=".766" stop-color="#99002b"/><stop offset="1" stop-color="#99001a"/></linearGradient>
<linearGradient id="r87" gradientUnits="userSpaceOnUse" x1="627.3" x2="963.5"><stop offset="0" stop-color="#007f99"/><stop offset=".223" stop-color="#005b99"/><stop offset=".314" stop-color="#464a99"/><stop offset=".412" stop-color="#993699"/><stop offset=".449" stop-color="#99267d"/><stop offset=".492" stop-color="#991967"/><stop offset=".544" stop-color="#990e54"/><stop offset=".606" stop-color="#990444"/><stop offset=".643" stop-color="#99003d"/><stop offset=".768" stop-color="#99002c"/><stop offset="1" stop-color="#99001b"/></linearGradient>
<linearGradient id="r88" gradientUnits="userSpaceOnUse" x1="627.7" x2="962.5"><stop offset="0" stop-color="#007d99"/><stop offset=".224" stop-color="#005999"/><stop offset=".319" stop-color="#4a4799"/><stop offset=".415" stop-color="#993499"/><stop offset=".452" stop-color="#99247e"/><stop offset=".496" stop-color="#991867"/><stop offset=".609" stop-color="#990445"/><stop offset=".770" stop-color="#99002d"/><stop offset="1" stop-color="#99001c"/></linearGradient>
<linearGradient id="r89" gradientUnits="userSpaceOnUse" x1="628.1" x2="961.6"><stop offset="0" stop-color="#007a99"/><stop offset=".223" stop-color="#005799"/><stop offset=".319" stop-color="#484699"/><stop offset=".418" stop-color="#993299"/><stop offset=".454" stop-color="#99237f"/><stop offset=".498" stop-color="#991769"/><stop offset=".550" stop-color="#990c56"/><stop offset=".612" stop-color="#990346"/><stop offset=".772" stop-color="#99002e"/><stop offset="1" stop-color="#99001c"/></linearGradient>
<linearGradient id="r90" gradientUnits="userSpaceOnUse" x1="628.5" x2="960.6"><stop offset="0" stop-color="#007899"/><stop offset=".224" stop-color="#059"/><stop offset=".423" stop-color="#993098"/><stop offset=".460" stop-color="#99217e"/><stop offset=".504" stop-color="#991568"/><stop offset=".617" stop-color="#990246"/><stop offset=".776" stop-color="#99002e"/><stop offset="1" stop-color="#99001d"/></linearGradient>
<linearGradient id="r91" gradientUnits="userSpaceOnUse" x1="629.0" x2="959.6"><stop offset="0" stop-color="#007699"/><stop offset=".224" stop-color="#005399"/><stop offset=".319" stop-color="#454399"/><stop offset=".426" stop-color="#992e98"/><stop offset=".462" stop-color="#99207f"/><stop offset=".506" stop-color="#991469"/><stop offset=".619" stop-color="#990247"/><stop offset=".778" stop-color="#99002f"/><stop offset="1" stop-color="#99001e"/></linearGradient>
<linearGradient id="r92" gradientUnits="userSpaceOnUse" x1="629.4" x2="958.7"><stop offset="0" stop-color="#007499"/><stop offset=".225" stop-color="#005299"/><stop offset=".429" stop-color="#992c98"/><stop offset=".466" stop-color="#991f7f"/><stop offset=".510" stop-color="#99136a"/><stop offset=".624" stop-color="#990148"/><stop offset=".781" stop-color="#990030"/><stop offset="1" stop-color="#99001f"/></linearGradient>
<linearGradient id="r93" gradientUnits="userSpaceOnUse" x1="629.8" x2="957.7"><stop offset="0" stop-color="#007299"/><stop offset=".224" stop-color="#005099"/><stop offset=".325" stop-color="#473f99"/><stop offset=".433" stop-color="#992a99"/><stop offset=".470" stop-color="#991e80"/><stop offset=".514" stop-color="#99126a"/><stop offset=".627" stop-color="#990149"/><stop offset=".784" stop-color="#990031"/><stop offset="1" stop-color="#99001f"/></linearGradient>
<linearGradient id="r94" gradientUnits="userSpaceOnUse" x1="630.2" x2="956.7"><stop offset="0" stop-color="#007099"/><stop offset=".225" stop-color="#004e99"/><stop offset=".436" stop-color="#992999"/><stop offset=".473" stop-color="#991c80"/><stop offset=".518" stop-color="#99116b"/><stop offset=".629" stop-color="#99004a"/><stop offset=".786" stop-color="#990031"/><stop offset="1" stop-color="#990020"/></linearGradient>
<linearGradient id="r95" gradientUnits="userSpaceOnUse" x1="630.6" x2="955.7"><stop offset="0" stop-color="#006e99"/><stop offset=".224" stop-color="#004d99"/><stop offset=".332" stop-color="#493b99"/><stop offset=".439" stop-color="#992799"/><stop offset=".478" stop-color="#991b80"/><stop offset=".521" stop-color="#99106b"/><stop offset=".633" stop-color="#99004a"/><stop offset=".786" stop-color="#990032"/><stop offset="1" stop-color="#990021"/></linearGradient>
<linearGradient id="r96" gradientUnits="userSpaceOnUse" x1="631.1" x2="954.8"><stop offset="0" stop-color="#006c99"/><stop offset=".225" stop-color="#004b99"/><stop offset=".444" stop-color="#992598"/><stop offset=".481" stop-color="#991980"/><stop offset=".526" stop-color="#990f6b"/><stop offset=".637" stop-color="#99004b"/><stop offset=".790" stop-color="#903"/><stop offset="1" stop-color="#902"/></linearGradient>
<linearGradient id="r97" gradientUnits="userSpaceOnUse" x1="631.5" x2="953.8"><stop offset="0" stop-color="#006a99"/><stop offset=".225" stop-color="#004a99"/><stop offset=".448" stop-color="#992398"/><stop offset=".485" stop-color="#991881"/><stop offset=".529" stop-color="#990e6c"/><stop offset=".640" stop-color="#99004c"/><stop offset=".792" stop-color="#990034"/><stop offset="1" stop-color="#902"/></linearGradient>
<linearGradient id="r98" gradientUnits="userSpaceOnUse" x1="631.9" x2="952.8"><stop offset="0" stop-color="#006899"/><stop offset=".226" stop-color="#004899"/><stop offset=".452" stop-color="#992298"/><stop offset=".489" stop-color="#991781"/><stop offset=".534" stop-color="#990d6c"/><stop offset=".645" stop-color="#99004c"/><stop offset=".796" stop-color="#990034"/><stop offset="1" stop-color="#990023"/></linearGradient>
<linearGradient id="r99" gradientUnits="userSpaceOnUse" x1="632.4" x2="951.9"><stop offset="0" stop-color="#069"/><stop offset=".225" stop-color="#004799"/><stop offset=".455" stop-color="#992098"/><stop offset=".493" stop-color="#991681"/><stop offset=".537" stop-color="#990c6d"/><stop offset=".648" stop-color="#99004d"/><stop offset=".798" stop-color="#990035"/><stop offset="1" stop-color="#990024"/></linearGradient>
<linearGradient id="r100" gradientUnits="userSpaceOnUse" x1="632.8" x2="950.9"><stop offset="0" stop-color="#006599"/><stop offset=".226" stop-color="#004599"/><stop offset=".344" stop-color="#4b3399"/><stop offset=".458" stop-color="#991f99"/><stop offset=".496" stop-color="#991582"/><stop offset=".540" stop-color="#990b6e"/><stop offset=".650" stop-color="#99004e"/><stop offset=".799" stop-color="#990036"/><stop offset="1" stop-color="#990025"/></linearGradient>
<linearGradient id="r101" gradientUnits="userSpaceOnUse" x1="633.3" x2="949.9"><stop offset="0" stop-color="#006399"/><stop offset=".226" stop-color="#049"/><stop offset=".345" stop-color="#4a3199"/><stop offset=".462" stop-color="#991d99"/><stop offset=".500" stop-color="#991382"/><stop offset=".544" stop-color="#990b6e"/><stop offset=".620" stop-color="#990056"/><stop offset=".653" stop-color="#99004f"/><stop offset=".801" stop-color="#990037"/><stop offset="1" stop-color="#990025"/></linearGradient>
<linearGradient id="r102" gradientUnits="userSpaceOnUse" x1="633.7" x2="948.9"><stop offset="0" stop-color="#006199"/><stop offset=".225" stop-color="#004299"/><stop offset=".344" stop-color="#483099"/><stop offset=".466" stop-color="#991c99"/><stop offset=".504" stop-color="#991282"/><stop offset=".548" stop-color="#990a6f"/><stop offset=".618" stop-color="#990059"/><stop offset=".658" stop-color="#99004f"/><stop offset=".803" stop-color="#990038"/><stop offset="1" stop-color="#990026"/></linearGradient>
<linearGradient id="r103" gradientUnits="userSpaceOnUse" x1="634.1" x2="948.0"><stop offset="0" stop-color="#006099"/><stop offset=".226" stop-color="#004199"/><stop offset=".350" stop-color="#4b2e99"/><stop offset=".470" stop-color="#991b99"/><stop offset=".551" stop-color="#990970"/><stop offset=".616" stop-color="#99005b"/><stop offset=".661" stop-color="#990050"/><stop offset=".806" stop-color="#990039"/><stop offset="1" stop-color="#990027"/></linearGradient>
<linearGradient id="r104" gradientUnits="userSpaceOnUse" x1="634.6" x2="947.0"><stop offset="0" stop-color="#005e99"/><stop offset=".226" stop-color="#004099"/><stop offset=".350" stop-color="#4a2d99"/><stop offset=".474" stop-color="#991999"/><stop offset=".555" stop-color="#990870"/><stop offset=".614" stop-color="#99005d"/><stop offset=".664" stop-color="#990051"/><stop offset=".808" stop-color="#990039"/><stop offset="1" stop-color="#990028"/></linearGradient>
<linearGradient id="r105" gradientUnits="userSpaceOnUse" x1="635.0" x2="946.0"><stop offset="0" stop-color="#005c99"/><stop offset=".227" stop-color="#003e99"/><stop offset=".355" stop-color="#4b2b99"/><stop offset=".477" stop-color="#991899"/><stop offset=".559" stop-color="#990770"/><stop offset=".613" stop-color="#99005f"/><stop offset=".667" stop-color="#990052"/><stop offset=".810" stop-color="#99003a"/><stop offset="1" stop-color="#990029"/></linearGradient>
<linearGradient id="r106" gradientUnits="userSpaceOnUse" x1="635.5" x2="945.1"><stop offset="0" stop-color="#005b99"/><stop offset=".226" stop-color="#003d99"/><stop offset=".352" stop-color="#482b99"/><stop offset=".482" stop-color="#991699"/><stop offset=".563" stop-color="#990671"/><stop offset=".611" stop-color="#990061"/><stop offset=".671" stop-color="#990052"/><stop offset=".813" stop-color="#99003b"/><stop offset="1" stop-color="#99002a"/></linearGradient>
<linearGradient id="r107" gradientUnits="userSpaceOnUse" x1="636.0" x2="944.1"><stop offset="0" stop-color="#005999"/><stop offset=".227" stop-color="#003c99"/><stop offset=".357" stop-color="#4a2999"/><stop offset=".486" stop-color="#991599"/><stop offset=".567" stop-color="#990571"/><stop offset=".609" stop-color="#990063"/><stop offset=".674" stop-color="#990053"/><stop offset=".815" stop-color="#99003c"/><stop offset="1" stop-color="#99002a"/></linearGradient>
<linearGradient id="r108" gradientUnits="userSpaceOnUse" x1="636.4" x2="943.1"><stop offset="0" stop-color="#005899"/><stop offset=".226" stop-color="#003b99"/><stop offset=".358" stop-color="#492899"/><stop offset=".490" stop-color="#991499"/><stop offset=".572" stop-color="#990572"/><stop offset=".607" stop-color="#906"/><stop offset=".678" stop-color="#990054"/><stop offset=".818" stop-color="#99003d"/><stop offset="1" stop-color="#99002b"/></linearGradient>
<linearGradient id="r109" gradientUnits="userSpaceOnUse" x1="636.9" x2="942.1"><stop offset="0" stop-color="#005699"/><stop offset=".226" stop-color="#003a99"/><stop offset=".357" stop-color="#472799"/><stop offset=".494" stop-color="#991299"/><stop offset=".576" stop-color="#990472"/><stop offset=".681" stop-color="#905"/><stop offset=".820" stop-color="#99003e"/><stop offset="1" stop-color="#99002c"/></linearGradient>
<linearGradient id="r110" gradientUnits="userSpaceOnUse" x1="637.4" x2="941.2"><stop offset="0" stop-color="#059"/><stop offset=".227" stop-color="#003899"/><stop offset=".362" stop-color="#492699"/><stop offset=".498" stop-color="#919"/><stop offset=".581" stop-color="#990372"/><stop offset=".686" stop-color="#905"/><stop offset=".822" stop-color="#99003e"/><stop offset="1" stop-color="#99002d"/></linearGradient>
<linearGradient id="r111" gradientUnits="userSpaceOnUse" x1="637.8" x2="940.2"><stop offset="0" stop-color="#005399"/><stop offset=".226" stop-color="#003799"/><stop offset=".364" stop-color="#492599"/><stop offset=".502" stop-color="#991099"/><stop offset=".583" stop-color="#990273"/><stop offset=".689" stop-color="#990056"/><stop offset=".825" stop-color="#99003f"/><stop offset="1" stop-color="#99002e"/></linearGradient>
<linearGradient id="r112" gradientUnits="userSpaceOnUse" x1="638.3" x2="939.2"><stop offset="0" stop-color="#005299"/><stop offset=".226" stop-color="#003699"/><stop offset=".364" stop-color="#482499"/><stop offset=".507" stop-color="#990f99"/><stop offset=".588" stop-color="#990173"/><stop offset=".693" stop-color="#990056"/><stop offset=".827" stop-color="#990040"/><stop offset="1" stop-color="#99002f"/></linearGradient>
<linearGradient id="r113" gradientUnits="userSpaceOnUse" x1="638.8" x2="938.3"><stop offset="0" stop-color="#005099"/><stop offset=".227" stop-color="#003599"/><stop offset=".369" stop-color="#4a2299"/><stop offset=".511" stop-color="#990e99"/><stop offset=".593" stop-color="#990174"/><stop offset=".696" stop-color="#990057"/><stop offset=".830" stop-color="#990041"/><stop offset="1" stop-color="#990030"/></linearGradient>
<linearGradient id="r114" gradientUnits="userSpaceOnUse" x1="639.3" x2="937.3"><stop offset="0" stop-color="#004f99"/><stop offset=".226" stop-color="#003499"/><stop offset=".370" stop-color="#492199"/><stop offset=".514" stop-color="#990d99"/><stop offset=".596" stop-color="#990074"/><stop offset=".698" stop-color="#990058"/><stop offset=".831" stop-color="#990042"/><stop offset="1" stop-color="#990031"/></linearGradient>
<linearGradient id="r115" gradientUnits="userSpaceOnUse" x1="639.7" x2="936.3"><stop offset="0" stop-color="#004e99"/><stop offset=".227" stop-color="#039"/><stop offset=".375" stop-color="#4b2099"/><stop offset=".519" stop-color="#990b99"/><stop offset=".599" stop-color="#990075"/><stop offset=".702" stop-color="#990059"/><stop offset=".833" stop-color="#990043"/><stop offset="1" stop-color="#990032"/></linearGradient>
<linearGradient id="r116" gradientUnits="userSpaceOnUse" x1="640.2" x2="935.3"><stop offset="0" stop-color="#004c99"/><stop offset=".227" stop-color="#003299"/><stop offset=".377" stop-color="#4b1f99"/><stop offset=".523" stop-color="#990a99"/><stop offset=".604" stop-color="#990075"/><stop offset=".706" stop-color="#99005a"/><stop offset=".836" stop-color="#904"/><stop offset="1" stop-color="#990032"/></linearGradient>
<linearGradient id="r117" gradientUnits="userSpaceOnUse" x1="640.7" x2="934.4"><stop offset="0" stop-color="#004b99"/><stop offset=".226" stop-color="#003199"/><stop offset=".378" stop-color="#4a1e99"/><stop offset=".527" stop-color="#990999"/><stop offset=".609" stop-color="#990076"/><stop offset=".709" stop-color="#99005a"/><stop offset=".837" stop-color="#990045"/><stop offset="1" stop-color="#903"/></linearGradient>
<linearGradient id="r118" gradientUnits="userSpaceOnUse" x1="641.2" x2="933.4"><stop offset="0" stop-color="#004a99"/><stop offset=".227" stop-color="#003099"/><stop offset=".383" stop-color="#4b1c99"/><stop offset=".532" stop-color="#990899"/><stop offset=".612" stop-color="#990076"/><stop offset=".713" stop-color="#99005b"/><stop offset=".839" stop-color="#990046"/><stop offset="1" stop-color="#990034"/></linearGradient>
<linearGradient id="r119" gradientUnits="userSpaceOnUse" x1="641.7" x2="932.4"><stop offset="0" stop-color="#004999"/><stop offset=".227" stop-color="#002f99"/><stop offset=".385" stop-color="#4b1b99"/><stop offset=".536" stop-color="#990799"/><stop offset=".617" stop-color="#907"/><stop offset=".716" stop-color="#99005c"/><stop offset=".842" stop-color="#990046"/><stop offset="1" stop-color="#990035"/></linearGradient>
<linearGradient id="r120" gradientUnits="userSpaceOnUse" x1="642.2" x2="931.5"><stop offset="0" stop-color="#004799"/><stop offset=".226" stop-color="#002e99"/><stop offset=".385" stop-color="#4a1b99"/><stop offset=".541" stop-color="#990699"/><stop offset=".620" stop-color="#990078"/><stop offset=".720" stop-color="#99005d"/><stop offset=".845" stop-color="#990047"/><stop offset="1" stop-color="#990036"/></linearGradient>
<linearGradient id="r121" gradientUnits="userSpaceOnUse" x1="642.7" x2="930.5"><stop offset="0" stop-color="#004699"/><stop offset=".227" stop-color="#002d99"/><stop offset=".389" stop-color="#4b1a99"/><stop offset=".545" stop-color="#990599"/><stop offset=".625" stop-color="#990078"/><stop offset=".724" stop-color="#99005d"/><stop offset=".847" stop-color="#990048"/><stop offset="1" stop-color="#990037"/></linearGradient>
<linearGradient id="r122" gradientUnits="userSpaceOnUse" x1="643.2" x2="929.5"><stop offset="0" stop-color="#004599"/><stop offset=".227" stop-color="#002c99"/><stop offset=".391" stop-color="#4b1999"/><stop offset=".550" stop-color="#990499"/><stop offset=".628" stop-color="#990079"/><stop offset=".726" stop-color="#99005e"/><stop offset=".848" stop-color="#990049"/><stop offset="1" stop-color="#990038"/></linearGradient>
<linearGradient id="r123" gradientUnits="userSpaceOnUse" x1="643.8" x2="928.5"><stop offset="0" stop-color="#049"/><stop offset=".226" stop-color="#002b99"/><stop offset=".393" stop-color="#4a1899"/><stop offset=".554" stop-color="#990399"/><stop offset=".633" stop-color="#990079"/><stop offset=".730" stop-color="#99005f"/><stop offset=".851" stop-color="#99004a"/><stop offset="1" stop-color="#990039"/></linearGradient>
<linearGradient id="r124" gradientUnits="userSpaceOnUse" x1="644.3" x2="927.6"><stop offset="0" stop-color="#004399"/><stop offset=".226" stop-color="#002b99"/><stop offset=".393" stop-color="#4a1799"/><stop offset=".559" stop-color="#990299"/><stop offset=".637" stop-color="#99007a"/><stop offset=".734" stop-color="#990060"/><stop offset=".854" stop-color="#99004b"/><stop offset="1" stop-color="#99003a"/></linearGradient>
<linearGradient id="r125" gradientUnits="userSpaceOnUse" x1="644.8" x2="926.6"><stop offset="0" stop-color="#004199"/><stop offset=".227" stop-color="#002a99"/><stop offset=".399" stop-color="#4b1699"/><stop offset=".564" stop-color="#990199"/><stop offset=".642" stop-color="#99007a"/><stop offset=".738" stop-color="#990060"/><stop offset=".855" stop-color="#99004c"/><stop offset="1" stop-color="#99003b"/></linearGradient>
<linearGradient id="r126" gradientUnits="userSpaceOnUse" x1="645.3" x2="925.6"><stop offset="0" stop-color="#004099"/><stop offset=".226" stop-color="#002999"/><stop offset=".401" stop-color="#4b1599"/><stop offset=".569" stop-color="#909"/><stop offset=".647" stop-color="#99007a"/><stop offset=".742" stop-color="#990061"/><stop offset=".857" stop-color="#99004d"/><stop offset="1" stop-color="#99003c"/></linearGradient>
<linearGradient id="r127" gradientUnits="userSpaceOnUse" x1="645.8" x2="924.7"><stop offset="0" stop-color="#003f99"/><stop offset=".226" stop-color="#002899"/><stop offset=".401" stop-color="#4a1499"/><stop offset=".573" stop-color="#909"/><stop offset=".651" stop-color="#99007b"/><stop offset=".744" stop-color="#990062"/><stop offset=".858" stop-color="#99004e"/><stop offset="1" stop-color="#99003d"/></linearGradient>
<linearGradient id="r128" gradientUnits="userSpaceOnUse" x1="646.4" x2="923.7"><stop offset="0" stop-color="#003e99"/><stop offset=".227" stop-color="#002799"/><stop offset=".405" stop-color="#4b1399"/><stop offset=".578" stop-color="#909"/><stop offset=".654" stop-color="#99007c"/><stop offset=".748" stop-color="#990063"/><stop offset=".861" stop-color="#99004f"/><stop offset="1" stop-color="#99003e"/></linearGradient>
<linearGradient id="r129" gradientUnits="userSpaceOnUse" x1="646.9" x2="922.7"><stop offset="0" stop-color="#003d99"/><stop offset=".226" stop-color="#002699"/><stop offset=".408" stop-color="#4b1299"/><stop offset=".583" stop-color="#909"/><stop offset=".659" stop-color="#99007c"/><stop offset=".752" stop-color="#990064"/><stop offset=".864" stop-color="#990050"/><stop offset="1" stop-color="#99003f"/></linearGradient>
<linearGradient id="r130" gradientUnits="userSpaceOnUse" x1="647.4" x2="921.7"><stop offset="0" stop-color="#003c99"/><stop offset=".226" stop-color="#002699"/><stop offset=".408" stop-color="#4a1299"/><stop offset=".588" stop-color="#909"/><stop offset=".665" stop-color="#99007c"/><stop offset=".756" stop-color="#990064"/><stop offset=".867" stop-color="#990051"/><stop offset="1" stop-color="#990040"/></linearGradient>
<linearGradient id="r131" gradientUnits="userSpaceOnUse" x1="648.0" x2="920.8"><stop offset="0" stop-color="#003b99"/><stop offset=".225" stop-color="#002599"/><stop offset=".557" stop-color="#890099"/><stop offset=".593" stop-color="#909"/><stop offset=".668" stop-color="#99007d"/><stop offset=".760" stop-color="#990065"/><stop offset=".868" stop-color="#990052"/><stop offset="1" stop-color="#990042"/></linearGradient>
<linearGradient id="r132" gradientUnits="userSpaceOnUse" x1="648.5" x2="919.8"><stop offset="0" stop-color="#003a99"/><stop offset=".227" stop-color="#002499"/><stop offset=".554" stop-color="#860099"/><stop offset=".599" stop-color="#909"/><stop offset=".672" stop-color="#99007d"/><stop offset=".762" stop-color="#906"/><stop offset=".871" stop-color="#990053"/><stop offset="1" stop-color="#990043"/></linearGradient>
<linearGradient id="r133" gradientUnits="userSpaceOnUse" x1="649.0" x2="918.8"><stop offset="0" stop-color="#003999"/><stop offset=".226" stop-color="#002399"/><stop offset=".552" stop-color="#830099"/><stop offset=".604" stop-color="#909"/><stop offset=".678" stop-color="#99007e"/><stop offset=".767" stop-color="#990067"/><stop offset=".872" stop-color="#990054"/><stop offset="1" stop-color="#904"/></linearGradient>
<linearGradient id="r134" gradientUnits="userSpaceOnUse" x1="649.6" x2="917.9"><stop offset="0" stop-color="#003899"/><stop offset=".225" stop-color="#002399"/><stop offset=".549" stop-color="#800099"/><stop offset=".609" stop-color="#909"/><stop offset=".683" stop-color="#99007e"/><stop offset=".771" stop-color="#990067"/><stop offset=".875" stop-color="#905"/><stop offset="1" stop-color="#990045"/></linearGradient>
<linearGradient id="r135" gradientUnits="userSpaceOnUse" x1="650.1" x2="916.9"><stop offset="0" stop-color="#003799"/><stop offset=".225" stop-color="#029"/><stop offset=".547" stop-color="#7d0099"/><stop offset=".614" stop-color="#909"/><stop offset=".687" stop-color="#99007e"/><stop offset=".773" stop-color="#990068"/><stop offset="1" stop-color="#990046"/></linearGradient>
<linearGradient id="r136" gradientUnits="userSpaceOnUse" x1="650.7" x2="915.9"><stop offset="0" stop-color="#003699"/><stop offset=".226" stop-color="#002199"/><stop offset=".544" stop-color="#7a0099"/><stop offset=".620" stop-color="#909"/><stop offset=".691" stop-color="#99007f"/><stop offset=".778" stop-color="#990069"/><stop offset="1" stop-color="#990047"/></linearGradient>
<linearGradient id="r137" gradientUnits="userSpaceOnUse" x1="651.2" x2="914.9"><stop offset="0" stop-color="#003599"/><stop offset=".225" stop-color="#002099"/><stop offset=".542" stop-color="#709"/><stop offset=".625" stop-color="#909"/><stop offset=".697" stop-color="#99007f"/><stop offset=".782" stop-color="#99006a"/><stop offset="1" stop-color="#990048"/></linearGradient>
<linearGradient id="r138" gradientUnits="userSpaceOnUse" x1="651.8" x2="914.0"><stop offset="0" stop-color="#003499"/><stop offset=".225" stop-color="#002099"/><stop offset=".539" stop-color="#750099"/><stop offset=".629" stop-color="#909"/><stop offset=".701" stop-color="#990080"/><stop offset=".785" stop-color="#99006b"/><stop offset="1" stop-color="#990049"/></linearGradient>
<linearGradient id="r139" gradientUnits="userSpaceOnUse" x1="652.4" x2="913.0"><stop offset="0" stop-color="#039"/><stop offset=".224" stop-color="#001f99"/><stop offset=".536" stop-color="#720099"/><stop offset=".634" stop-color="#909"/><stop offset=".707" stop-color="#990080"/><stop offset=".789" stop-color="#99006b"/><stop offset="1" stop-color="#99004b"/></linearGradient>
<linearGradient id="r140" gradientUnits="userSpaceOnUse" x1="652.9" x2="912.0"><stop offset="0" stop-color="#003299"/><stop offset=".225" stop-color="#001e99"/><stop offset=".534" stop-color="#6f0099"/><stop offset=".640" stop-color="#909"/><stop offset=".711" stop-color="#990081"/><stop offset=".792" stop-color="#99006d"/><stop offset="1" stop-color="#99004c"/></linearGradient>
<linearGradient id="r141" gradientUnits="userSpaceOnUse" x1="653.5" x2="911.1"><stop offset="0" stop-color="#003199"/><stop offset=".225" stop-color="#001e99"/><stop offset=".531" stop-color="#6d0099"/><stop offset=".645" stop-color="#909"/><stop offset=".715" stop-color="#990081"/><stop offset=".797" stop-color="#99006d"/><stop offset="1" stop-color="#99004d"/></linearGradient>
<linearGradient id="r142" gradientUnits="userSpaceOnUse" x1="654.0" x2="910.1"><stop offset="0" stop-color="#003099"/><stop offset=".224" stop-color="#001d99"/><stop offset=".528" stop-color="#6a0099"/><stop offset=".651" stop-color="#909"/><stop offset=".719" stop-color="#990082"/><stop offset=".799" stop-color="#99006e"/><stop offset="1" stop-color="#99004e"/></linearGradient>
<linearGradient id="r143" gradientUnits="userSpaceOnUse" x1="654.6" x2="909.1"><stop offset="0" stop-color="#002f99"/><stop offset=".224" stop-color="#001c99"/><stop offset=".525" stop-color="#680099"/><stop offset=".657" stop-color="#909"/><stop offset=".725" stop-color="#990082"/><stop offset=".804" stop-color="#99006f"/><stop offset="1" stop-color="#99004f"/></linearGradient>
<linearGradient id="r144" gradientUnits="userSpaceOnUse" x1="655.2" x2="908.1"><stop offset="0" stop-color="#002e99"/><stop offset=".223" stop-color="#001c99"/><stop offset=".524" stop-color="#609"/><stop offset=".662" stop-color="#909"/><stop offset=".808" stop-color="#990070"/><stop offset="1" stop-color="#990051"/></linearGradient>
<linearGradient id="r145" gradientUnits="userSpaceOnUse" x1="655.8" x2="907.2"><stop offset="0" stop-color="#002e99"/><stop offset=".223" stop-color="#001b99"/><stop offset=".521" stop-color="#630099"/><stop offset=".668" stop-color="#909"/><stop offset=".811" stop-color="#990071"/><stop offset="1" stop-color="#990052"/></linearGradient>
<linearGradient id="r146" gradientUnits="userSpaceOnUse" x1="656.3" x2="906.2"><stop offset="0" stop-color="#002d99"/><stop offset=".224" stop-color="#001a99"/><stop offset=".516" stop-color="#600099"/><stop offset=".674" stop-color="#909"/><stop offset=".816" stop-color="#990071"/><stop offset="1" stop-color="#990053"/></linearGradient>
<linearGradient id="r147" gradientUnits="userSpaceOnUse" x1="656.9" x2="905.2"><stop offset="0" stop-color="#002c99"/><stop offset=".223" stop-color="#001a99"/><stop offset=".513" stop-color="#5e0099"/><stop offset=".680" stop-color="#909"/><stop offset=".819" stop-color="#990072"/><stop offset="1" stop-color="#905"/></linearGradient>
<linearGradient id="r148" gradientUnits="userSpaceOnUse" x1="657.5" x2="904.3"><stop offset="0" stop-color="#002b99"/><stop offset=".223" stop-color="#001999"/><stop offset=".510" stop-color="#5c0099"/><stop offset=".686" stop-color="#909"/><stop offset=".824" stop-color="#990073"/><stop offset="1" stop-color="#990056"/></linearGradient>
<linearGradient id="r149" gradientUnits="userSpaceOnUse" x1="658.1" x2="903.3"><stop offset="0" stop-color="#002a99"/><stop offset=".222" stop-color="#001999"/><stop offset=".507" stop-color="#5a0099"/><stop offset=".692" stop-color="#909"/><stop offset=".827" stop-color="#990074"/><stop offset="1" stop-color="#990057"/></linearGradient>
<linearGradient id="r150" gradientUnits="userSpaceOnUse" x1="658.6" x2="902.3"><stop offset="0" stop-color="#002999"/><stop offset=".221" stop-color="#001899"/><stop offset=".504" stop-color="#580099"/><stop offset=".699" stop-color="#909"/><stop offset=".832" stop-color="#990075"/><stop offset="1" stop-color="#990059"/></linearGradient>
<linearGradient id="r151" gradientUnits="userSpaceOnUse" x1="659.2" x2="901.4"><stop offset="0" stop-color="#002999"/><stop offset=".223" stop-color="#001799"/><stop offset=".501" stop-color="#509"/><stop offset=".705" stop-color="#909"/><stop offset=".835" stop-color="#990076"/><stop offset="1" stop-color="#99005a"/></linearGradient>
<linearGradient id="r152" gradientUnits="userSpaceOnUse" x1="659.8" x2="900.4"><stop offset="0" stop-color="#002899"/><stop offset=".222" stop-color="#001799"/><stop offset=".498" stop-color="#530099"/><stop offset=".712" stop-color="#909"/><stop offset=".840" stop-color="#990076"/><stop offset="1" stop-color="#99005b"/></linearGradient>
<linearGradient id="r153" gradientUnits="userSpaceOnUse" x1="660.4" x2="899.4"><stop offset="0" stop-color="#002799"/><stop offset=".221" stop-color="#001699"/><stop offset=".495" stop-color="#510099"/><stop offset=".716" stop-color="#909"/><stop offset=".843" stop-color="#907"/><stop offset="1" stop-color="#99005d"/></linearGradient>
<linearGradient id="r154" gradientUnits="userSpaceOnUse" x1="661.0" x2="898.4"><stop offset="0" stop-color="#002699"/><stop offset=".221" stop-color="#001699"/><stop offset=".493" stop-color="#500099"/><stop offset=".722" stop-color="#980099"/><stop offset=".848" stop-color="#990078"/><stop offset="1" stop-color="#99005e"/></linearGradient>
<linearGradient id="r155" gradientUnits="userSpaceOnUse" x1="661.6" x2="897.5"><stop offset="0" stop-color="#002699"/><stop offset=".220" stop-color="#001599"/><stop offset=".487" stop-color="#4d0099"/><stop offset=".729" stop-color="#909"/><stop offset=".852" stop-color="#990079"/><stop offset="1" stop-color="#99005f"/></linearGradient>
<linearGradient id="r156" gradientUnits="userSpaceOnUse" x1="662.2" x2="896.5"><stop offset="0" stop-color="#002599"/><stop offset=".220" stop-color="#001599"/><stop offset=".484" stop-color="#4b0099"/><stop offset=".736" stop-color="#909"/><stop offset=".857" stop-color="#99007a"/><stop offset="1" stop-color="#990061"/></linearGradient>
<linearGradient id="r157" gradientUnits="userSpaceOnUse" x1="662.8" x2="895.5"><stop offset="0" stop-color="#002499"/><stop offset=".219" stop-color="#001499"/><stop offset=".481" stop-color="#490099"/><stop offset=".742" stop-color="#909"/><stop offset=".861" stop-color="#99007b"/><stop offset="1" stop-color="#990062"/></linearGradient>
<linearGradient id="r158" gradientUnits="userSpaceOnUse" x1="663.3" x2="894.6"><stop offset="0" stop-color="#002399"/><stop offset=".220" stop-color="#001499"/><stop offset=".477" stop-color="#470099"/><stop offset=".749" stop-color="#909"/><stop offset=".864" stop-color="#99007c"/><stop offset="1" stop-color="#990064"/></linearGradient>
<linearGradient id="r159" gradientUnits="userSpaceOnUse" x1="663.9" x2="893.6"><stop offset="0" stop-color="#002399"/><stop offset=".220" stop-color="#001399"/><stop offset=".474" stop-color="#450099"/><stop offset=".757" stop-color="#909"/><stop offset=".867" stop-color="#99007d"/><stop offset="1" stop-color="#990065"/></linearGradient>
<linearGradient id="r160" gradientUnits="userSpaceOnUse" x1="664.5" x2="892.6"><stop offset="0" stop-color="#029"/><stop offset=".219" stop-color="#001399"/><stop offset=".470" stop-color="#409"/><stop offset=".764" stop-color="#909"/><stop offset=".873" stop-color="#99007d"/><stop offset="1" stop-color="#990067"/></linearGradient>
<linearGradient id="r161" gradientUnits="userSpaceOnUse" x1="665.1" x2="891.6"><stop offset="0" stop-color="#002199"/><stop offset=".218" stop-color="#001299"/><stop offset=".467" stop-color="#420099"/><stop offset=".771" stop-color="#909"/><stop offset=".877" stop-color="#99007e"/><stop offset="1" stop-color="#990068"/></linearGradient>
<linearGradient id="r162" gradientUnits="userSpaceOnUse" x1="665.7" x2="890.7"><stop offset="0" stop-color="#002099"/><stop offset=".218" stop-color="#001299"/><stop offset=".462" stop-color="#400099"/><stop offset=".778" stop-color="#909"/><stop offset=".882" stop-color="#99007f"/><stop offset="1" stop-color="#99006a"/></linearGradient>
<linearGradient id="r163" gradientUnits="userSpaceOnUse" x1="666.3" x2="889.7"><stop offset="0" stop-color="#002099"/><stop offset=".217" stop-color="#019"/><stop offset=".459" stop-color="#3e0099"/><stop offset=".785" stop-color="#909"/><stop offset=".886" stop-color="#990080"/><stop offset="1" stop-color="#99006c"/></linearGradient>
<linearGradient id="r164" gradientUnits="userSpaceOnUse" x1="666.9" x2="888.7"><stop offset="0" stop-color="#001f99"/><stop offset=".216" stop-color="#019"/><stop offset=".455" stop-color="#3c0099"/><stop offset=".793" stop-color="#909"/><stop offset=".890" stop-color="#990081"/><stop offset="1" stop-color="#99006d"/></linearGradient>
<linearGradient id="r165" gradientUnits="userSpaceOnUse" x1="667.6" x2="887.8"><stop offset="0" stop-color="#001e99"/><stop offset=".215" stop-color="#001099"/><stop offset=".451" stop-color="#3b0099"/><stop offset=".800" stop-color="#909"/><stop offset=".893" stop-color="#990082"/><stop offset="1" stop-color="#99006f"/></linearGradient>
<linearGradient id="r166" gradientUnits="userSpaceOnUse" x1="668.2" x2="886.8"><stop offset="0" stop-color="#001e99"/><stop offset=".215" stop-color="#001099"/><stop offset=".447" stop-color="#390099"/><stop offset=".808" stop-color="#909"/><stop offset="1" stop-color="#990070"/></linearGradient>
<linearGradient id="r167" gradientUnits="userSpaceOnUse" x1="668.8" x2="885.8"><stop offset="0" stop-color="#001d99"/><stop offset=".216" stop-color="#000f99"/><stop offset=".444" stop-color="#370099"/><stop offset=".816" stop-color="#909"/><stop offset="1" stop-color="#990072"/></linearGradient>
<linearGradient id="r168" gradientUnits="userSpaceOnUse" x1="669.4" x2="884.8"><stop offset="0" stop-color="#001c99"/><stop offset=".213" stop-color="#000f99"/><stop offset=".439" stop-color="#350099"/><stop offset=".824" stop-color="#909"/><stop offset="1" stop-color="#990074"/></linearGradient>
<linearGradient id="r169" gradientUnits="userSpaceOnUse" x1="670.0" x2="883.9"><stop offset="0" stop-color="#001c99"/><stop offset=".215" stop-color="#000e99"/><stop offset=".435" stop-color="#340099"/><stop offset=".832" stop-color="#909"/><stop offset="1" stop-color="#990075"/></linearGradient>
<linearGradient id="r170" gradientUnits="userSpaceOnUse" x1="670.6" x2="882.9"><stop offset="0" stop-color="#001b99"/><stop offset=".214" stop-color="#000e99"/><stop offset=".431" stop-color="#320099"/><stop offset=".840" stop-color="#909"/><stop offset="1" stop-color="#907"/></linearGradient>
<linearGradient id="r171" gradientUnits="userSpaceOnUse" x1="671.2" x2="881.9"><stop offset="0" stop-color="#001b99"/><stop offset=".213" stop-color="#000e99"/><stop offset=".427" stop-color="#310099"/><stop offset=".848" stop-color="#909"/><stop offset="1" stop-color="#990079"/></linearGradient>
<linearGradient id="r172" gradientUnits="userSpaceOnUse" x1="671.8" x2="881.0"><stop offset="0" stop-color="#001a99"/><stop offset=".212" stop-color="#000d99"/><stop offset=".422" stop-color="#2f0099"/><stop offset=".857" stop-color="#909"/><stop offset="1" stop-color="#99007b"/></linearGradient>
<linearGradient id="r173" gradientUnits="userSpaceOnUse" x1="672.5" x2="880.0"><stop offset="0" stop-color="#001999"/><stop offset=".212" stop-color="#000d99"/><stop offset=".418" stop-color="#2e0099"/><stop offset=".863" stop-color="#909"/><stop offset="1" stop-color="#99007c"/></linearGradient>
<linearGradient id="r174" gradientUnits="userSpaceOnUse" x1="673.1" x2="879.0"><stop offset="0" stop-color="#001999"/><stop offset=".211" stop-color="#000c99"/><stop offset=".413" stop-color="#2c0099"/><stop offset=".874" stop-color="#909"/><stop offset="1" stop-color="#99007e"/></linearGradient>
<linearGradient id="r175" gradientUnits="userSpaceOnUse" x1="673.7" x2="878.0"><stop offset="0" stop-color="#001899"/><stop offset=".210" stop-color="#000c99"/><stop offset=".408" stop-color="#2b0099"/><stop offset=".880" stop-color="#909"/><stop offset="1" stop-color="#990080"/></linearGradient>
<linearGradient id="r176" gradientUnits="userSpaceOnUse" x1="674.3" x2="877.1"><stop offset="0" stop-color="#001799"/><stop offset=".209" stop-color="#000c99"/><stop offset=".404" stop-color="#290099"/><stop offset=".889" stop-color="#909"/><stop offset="1" stop-color="#990082"/></linearGradient>
<linearGradient id="r177" gradientUnits="userSpaceOnUse" x1="675.0" x2="876.1"><stop offset="0" stop-color="#001799"/><stop offset=".208" stop-color="#000b99"/><stop offset=".400" stop-color="#280099"/><stop offset=".898" stop-color="#909"/><stop offset="1" stop-color="#990084"/></linearGradient>
<linearGradient id="r178" gradientUnits="userSpaceOnUse" x1="675.6" x2="875.1"><stop offset="0" stop-color="#001699"/><stop offset=".210" stop-color="#000b99"/><stop offset=".395" stop-color="#260099"/><stop offset=".908" stop-color="#909"/><stop offset="1" stop-color="#990086"/></linearGradient>
<linearGradient id="r179" gradientUnits="userSpaceOnUse" x1="676.3" x2="874.2"><stop offset="0" stop-color="#001699"/><stop offset=".207" stop-color="#000a99"/><stop offset=".389" stop-color="#250099"/><stop offset=".917" stop-color="#909"/><stop offset="1" stop-color="#908"/></linearGradient>
<linearGradient id="r180" gradientUnits="userSpaceOnUse" x1="676.9" x2="873.2"><stop offset="0" stop-color="#001599"/><stop offset=".209" stop-color="#000a99"/><stop offset=".384" stop-color="#230099"/><stop offset=".926" stop-color="#909"/><stop offset="1" stop-color="#99008a"/></linearGradient>
<linearGradient id="r181" gradientUnits="userSpaceOnUse" x1="677.5" x2="872.2"><stop offset="0" stop-color="#001599"/><stop offset=".208" stop-color="#000a99"/><stop offset=".379" stop-color="#209"/><stop offset=".936" stop-color="#909"/><stop offset="1" stop-color="#99008c"/></linearGradient>
<linearGradient id="r182" gradientUnits="userSpaceOnUse" x1="678.2" x2="871.2"><stop offset="0" stop-color="#001499"/><stop offset=".207" stop-color="#000999"/><stop offset=".375" stop-color="#210099"/><stop offset=".946" stop-color="#909"/><stop offset="1" stop-color="#99008e"/></linearGradient>
<linearGradient id="r183" gradientUnits="userSpaceOnUse" x1="678.8" x2="870.3"><stop offset="0" stop-color="#001399"/><stop offset=".206" stop-color="#000999"/><stop offset=".368" stop-color="#1f0099"/><stop offset=".956" stop-color="#909"/><stop offset="1" stop-color="#990090"/></linearGradient>
<linearGradient id="r184" gradientUnits="userSpaceOnUse" x1="679.5" x2="869.3"><stop offset="0" stop-color="#001399"/><stop offset=".205" stop-color="#000899"/><stop offset=".363" stop-color="#1e0099"/><stop offset=".966" stop-color="#909"/><stop offset="1" stop-color="#990092"/></linearGradient>
<linearGradient id="r185" gradientUnits="userSpaceOnUse" x1="680.1" x2="868.3"><stop offset="0" stop-color="#001299"/><stop offset=".204" stop-color="#000899"/><stop offset=".358" stop-color="#1d0099"/><stop offset=".976" stop-color="#909"/><stop offset="1" stop-color="#990094"/></linearGradient>
<linearGradient id="r186" gradientUnits="userSpaceOnUse" x1="680.8" x2="867.4"><stop offset="0" stop-color="#001299"/><stop offset=".203" stop-color="#000899"/><stop offset=".353" stop-color="#1c0099"/><stop offset="1" stop-color="#990096"/></linearGradient>
<linearGradient id="r187" gradientUnits="userSpaceOnUse" x1="681.4" x2="866.4"><stop offset="0" stop-color="#019"/><stop offset=".203" stop-color="#000799"/><stop offset=".346" stop-color="#1a0099"/><stop offset="1" stop-color="#909"/></linearGradient>
<linearGradient id="r188" gradientUnits="userSpaceOnUse" x1="682.1" x2="865.4"><stop offset="0" stop-color="#019"/><stop offset=".202" stop-color="#000799"/><stop offset=".341" stop-color="#190099"/><stop offset="1" stop-color="#970099"/></linearGradient>
<linearGradient id="r189" gradientUnits="userSpaceOnUse" x1="682.8" x2="864.4"><stop offset="0" stop-color="#001099"/><stop offset=".201" stop-color="#000799"/><stop offset=".335" stop-color="#180099"/><stop offset="1" stop-color="#950099"/></linearGradient>
<linearGradient id="r190" gradientUnits="userSpaceOnUse" x1="683.5" x2="863.5"><stop offset="0" stop-color="#001099"/><stop offset=".199" stop-color="#000699"/><stop offset=".330" stop-color="#170099"/><stop offset="1" stop-color="#930099"/></linearGradient>
<linearGradient id="r191" gradientUnits="userSpaceOnUse" x1="684.1" x2="862.5"><stop offset="0" stop-color="#000f99"/><stop offset=".199" stop-color="#000699"/><stop offset=".322" stop-color="#150099"/><stop offset="1" stop-color="#910099"/></linearGradient>
<linearGradient id="r192" gradientUnits="userSpaceOnUse" x1="684.8" x2="861.5"><stop offset="0" stop-color="#000f99"/><stop offset=".198" stop-color="#000699"/><stop offset=".316" stop-color="#140099"/><stop offset="1" stop-color="#8f0099"/></linearGradient>
<linearGradient id="r193" gradientUnits="userSpaceOnUse" x1="685.5" x2="860.6"><stop offset="0" stop-color="#000e99"/><stop offset=".197" stop-color="#000599"/><stop offset=".311" stop-color="#130099"/><stop offset="1" stop-color="#8d0099"/></linearGradient>
<linearGradient id="r194" gradientUnits="userSpaceOnUse" x1="686.2" x2="859.6"><stop offset="0" stop-color="#000e99"/><stop offset=".196" stop-color="#000599"/><stop offset=".303" stop-color="#120099"/><stop offset="1" stop-color="#8b0099"/></linearGradient>
<linearGradient id="r195" gradientUnits="userSpaceOnUse" x1="686.9" x2="858.6"><stop offset="0" stop-color="#000d99"/><stop offset=".195" stop-color="#000599"/><stop offset=".297" stop-color="#100099"/><stop offset="1" stop-color="#890099"/></linearGradient>
<linearGradient id="r196" gradientUnits="userSpaceOnUse" x1="687.6" x2="857.6"><stop offset="0" stop-color="#000d99"/><stop offset=".194" stop-color="#000499"/><stop offset=".290" stop-color="#0f0099"/><stop offset="1" stop-color="#870099"/></linearGradient>
<linearGradient id="r197" gradientUnits="userSpaceOnUse" x1="688.3" x2="856.7"><stop offset="0" stop-color="#000c99"/><stop offset=".190" stop-color="#000499"/><stop offset=".282" stop-color="#0e0099"/><stop offset="1" stop-color="#850099"/></linearGradient>
<linearGradient id="r198" gradientUnits="userSpaceOnUse" x1="688.9" x2="855.7"><stop offset="0" stop-color="#000c99"/><stop offset=".189" stop-color="#000499"/><stop offset=".275" stop-color="#0d0099"/><stop offset="1" stop-color="#830099"/></linearGradient>
<linearGradient id="r199" gradientUnits="userSpaceOnUse" x1="689.6" x2="854.7"><stop offset="0" stop-color="#000b99"/><stop offset=".187" stop-color="#000399"/><stop offset=".269" stop-color="#0c0099"/><stop offset="1" stop-color="#810099"/></linearGradient>
<linearGradient id="r200" gradientUnits="userSpaceOnUse" x1="690.3" x2="853.8"><stop offset="0" stop-color="#000b99"/><stop offset=".187" stop-color="#000399"/><stop offset="1" stop-color="#7f0099"/></linearGradient>
<linearGradient id="r201" gradientUnits="userSpaceOnUse" x1="691.1" x2="852.8"><stop offset="0" stop-color="#000a99"/><stop offset=".185" stop-color="#000399"/><stop offset="1" stop-color="#7d0099"/></linearGradient>
<linearGradient id="r202" gradientUnits="userSpaceOnUse" x1="691.8" x2="851.8"><stop offset="0" stop-color="#000a99"/><stop offset=".184" stop-color="#000299"/><stop offset="1" stop-color="#7b0099"/></linearGradient>
<linearGradient id="r203" gradientUnits="userSpaceOnUse" x1="692.5" x2="850.8"><stop offset="0" stop-color="#000999"/><stop offset=".183" stop-color="#000299"/><stop offset="1" stop-color="#790099"/></linearGradient>
<linearGradient id="r204" gradientUnits="userSpaceOnUse" x1="693.2" x2="849.9"><stop offset="0" stop-color="#000999"/><stop offset=".182" stop-color="#000299"/><stop offset="1" stop-color="#709"/></linearGradient>
<linearGradient id="r205" gradientUnits="userSpaceOnUse" x1="693.9" x2="848.9"><stop offset="0" stop-color="#000899"/><stop offset=".181" stop-color="#000199"/><stop offset="1" stop-color="#760099"/></linearGradient>
<linearGradient id="r206" gradientUnits="userSpaceOnUse" x1="694.7" x2="847.9"><stop offset="0" stop-color="#000899"/><stop offset=".176" stop-color="#000199"/><stop offset="1" stop-color="#740099"/></linearGradient>
<linearGradient id="r207" gradientUnits="userSpaceOnUse" x1="695.4" x2="847.0"><stop offset="0" stop-color="#000799"/><stop offset=".174" stop-color="#000199"/><stop offset="1" stop-color="#720099"/></linearGradient>
<linearGradient id="r208" gradientUnits="userSpaceOnUse" x1="696.1" x2="846.0"><stop offset="0" stop-color="#000799"/><stop offset=".173" stop-color="#000199"/><stop offset="1" stop-color="#700099"/></linearGradient>
<linearGradient id="r209" gradientUnits="userSpaceOnUse" x1="696.9" x2="845.0"><stop offset="0" stop-color="#000799"/><stop offset=".172" stop-color="#009"/><stop offset="1" stop-color="#6f0099"/></linearGradient>
<linearGradient id="r210" gradientUnits="userSpaceOnUse" x1="697.6" x2="844.0"><stop offset="0" stop-color="#000699"/><stop offset=".171" stop-color="#009"/><stop offset="1" stop-color="#6d0099"/></linearGradient>
<linearGradient id="r211" gradientUnits="userSpaceOnUse" x1="698.4" x2="843.1"><stop offset="0" stop-color="#000699"/><stop offset=".169" stop-color="#009"/><stop offset="1" stop-color="#6b0099"/></linearGradient>
<linearGradient id="r212" gradientUnits="userSpaceOnUse" x1="699.1" x2="842.1"><stop offset="0" stop-color="#000599"/><stop offset=".164" stop-color="#009"/><stop offset="1" stop-color="#6a0099"/></linearGradient>
<linearGradient id="r213" gradientUnits="userSpaceOnUse" x1="699.9" x2="841.1"><stop offset="0" stop-color="#000599"/><stop offset=".163" stop-color="#009"/><stop offset="1" stop-color="#680099"/></linearGradient>
<linearGradient id="r214" gradientUnits="userSpaceOnUse" x1="700.7" x2="840.2"><stop offset="0" stop-color="#000499"/><stop offset=".161" stop-color="#009"/><stop offset="1" stop-color="#670099"/></linearGradient>
<linearGradient id="r215" gradientUnits="userSpaceOnUse" x1="701.4" x2="839.2"><stop offset="0" stop-color="#000499"/><stop offset=".159" stop-color="#009"/><stop offset="1" stop-color="#650099"/></linearGradient>
<linearGradient id="r216" gradientUnits="userSpaceOnUse" x1="702.2" x2="838.2"><stop offset="0" stop-color="#000399"/><stop offset=".158" stop-color="#009"/><stop offset="1" stop-color="#630099"/></linearGradient>
<linearGradient id="r217" gradientUnits="userSpaceOnUse" x1="703.0" x2="837.2"><stop offset="0" stop-color="#000399"/><stop offset=".152" stop-color="#009"/><stop offset="1" stop-color="#620099"/></linearGradient>
<linearGradient id="r218" gradientUnits="userSpaceOnUse" x1="703.8" x2="836.3"><stop offset="0" stop-color="#000399"/><stop offset=".151" stop-color="#009"/><stop offset="1" stop-color="#600099"/></linearGradient>
<linearGradient id="r219" gradientUnits="userSpaceOnUse" x1="704.6" x2="835.3"><stop offset="0" stop-color="#000299"/><stop offset=".149" stop-color="#009"/><stop offset="1" stop-color="#5f0099"/></linearGradient>
<linearGradient id="r220" gradientUnits="userSpaceOnUse" x1="705.4" x2="834.3"><stop offset="0" stop-color="#000299"/><stop offset=".147" stop-color="#009"/><stop offset="1" stop-color="#5d0099"/></linearGradient>
<linearGradient id="r221" gradientUnits="userSpaceOnUse" x1="706.2" x2="833.4"><stop offset="0" stop-color="#000199"/><stop offset=".141" stop-color="#009"/><stop offset="1" stop-color="#5c0099"/></linearGradient>
<linearGradient id="r222" gradientUnits="userSpaceOnUse" x1="707.0" x2="832.4"><stop offset="0" stop-color="#000199"/><stop offset=".139" stop-color="#009"/><stop offset="1" stop-color="#5a0099"/></linearGradient>
<linearGradient id="r223" gradientUnits="userSpaceOnUse" x1="707.8" x2="831.4"><stop offset="0" stop-color="#000199"/><stop offset=".137" stop-color="#009"/><stop offset="1" stop-color="#590099"/></linearGradient>
<linearGradient id="r224" gradientUnits="userSpaceOnUse" x1="708.6" x2="830.4"><stop offset="0" stop-color="#009"/><stop offset=".131" stop-color="#009"/><stop offset="1" stop-color="#580099"/></linearGradient>
<linearGradient id="r225" gradientUnits="userSpaceOnUse" x1="709.4" x2="829.5"><stop offset="0" stop-color="#009"/><stop offset=".129" stop-color="#009"/><stop offset="1" stop-color="#560099"/></linearGradient>
<linearGradient id="r226" gradientUnits="userSpaceOnUse" x1="710.3" x2="828.5"><stop offset="0" stop-color="#009"/><stop offset=".127" stop-color="#009"/><stop offset="1" stop-color="#509"/></linearGradient>
<linearGradient id="r227" gradientUnits="userSpaceOnUse" x1="711.1" x2="827.5"><stop offset="0" stop-color="#009"/><stop offset=".120" stop-color="#009"/><stop offset="1" stop-color="#530099"/></linearGradient>
<linearGradient id="r228" gradientUnits="userSpaceOnUse" x1="712.0" x2="826.6"><stop offset="0" stop-color="#009"/><stop offset=".117" stop-color="#009"/><stop offset="1" stop-color="#520099"/></linearGradient>
<linearGradient id="r229" gradientUnits="userSpaceOnUse" x1="712.8" x2="825.6"><stop offset="0" stop-color="#009"/><stop offset=".115" stop-color="#009"/><stop offset="1" stop-color="#510099"/></linearGradient>
<linearGradient id="r230" gradientUnits="userSpaceOnUse" x1="713.7" x2="824.6"><stop offset="0" stop-color="#009"/><stop offset=".108" stop-color="#009"/><stop offset="1" stop-color="#4f0099"/></linearGradient>
<linearGradient id="r231" gradientUnits="userSpaceOnUse" x1="714.5" x2="823.7"><stop offset="0" stop-color="#009"/><stop offset=".105" stop-color="#009"/><stop offset="1" stop-color="#4e0099"/></linearGradient>
<linearGradient id="r232" gradientUnits="userSpaceOnUse" x1="715.4" x2="822.7"><stop offset="0" stop-color="#009"/><stop offset=".098" stop-color="#009"/><stop offset="1" stop-color="#4d0099"/></linearGradient>
<linearGradient id="r233" gradientUnits="userSpaceOnUse" x1="716.3" x2="821.7"><stop offset="0" stop-color="#009"/><stop offset=".095" stop-color="#009"/><stop offset="1" stop-color="#4b0099"/></linearGradient>
<linearGradient id="r234" gradientUnits="userSpaceOnUse" x1="717.2" x2="820.7"><stop offset="0" stop-color="#009"/><stop offset=".091" stop-color="#009"/><stop offset="1" stop-color="#4a0099"/></linearGradient>
<linearGradient id="r235" gradientUnits="userSpaceOnUse" x1="718.1" x2="819.8"><stop offset="0" stop-color="#009"/><stop offset=".083" stop-color="#009"/><stop offset="1" stop-color="#490099"/></linearGradient>
<linearGradient id="r236" gradientUnits="userSpaceOnUse" x1="719.0" x2="818.8"><stop offset="0" stop-color="#009"/><stop offset=".075" stop-color="#009"/><stop offset="1" stop-color="#480099"/></linearGradient>
<linearGradient id="r237" gradientUnits="userSpaceOnUse" x1="720.0" x2="817.8"><stop offset="0" stop-color="#009"/><stop offset=".071" stop-color="#009"/><stop offset="1" stop-color="#460099"/></linearGradient>
<linearGradient id="r238" gradientUnits="userSpaceOnUse" x1="720.9" x2="816.9"><stop offset="0" stop-color="#009"/><stop offset=".063" stop-color="#009"/><stop offset="1" stop-color="#450099"/></linearGradient>
<linearGradient id="r239" gradientUnits="userSpaceOnUse" x1="721.9" x2="815.9"><stop offset="0" stop-color="#009"/><stop offset=".059" stop-color="#009"/><stop offset="1" stop-color="#409"/></linearGradient>
<linearGradient id="r240" gradientUnits="userSpaceOnUse" x1="722.9" x2="814.9"><stop offset="0" stop-color="#009"/><stop offset=".049" stop-color="#009"/><stop offset="1" stop-color="#430099"/></linearGradient>
<linearGradient id="r241" gradientUnits="userSpaceOnUse" x1="723.9" x2="813.9"><stop offset="0" stop-color="#009"/><stop offset="1" stop-color="#420099"/></linearGradient>
<linearGradient id="r242" gradientUnits="userSpaceOnUse" x1="724.9" x2="813.0"><stop offset="0" stop-color="#009"/><stop offset="1" stop-color="#400099"/></linearGradient>
<linearGradient id="r243" gradientUnits="userSpaceOnUse" x1="725.9" x2="812.0"><stop offset="0" stop-color="#009"/><stop offset="1" stop-color="#3f0099"/></linearGradient>
<linearGradient id="r244" gradientUnits="userSpaceOnUse" x1="726.9" x2="811.0"><stop offset="0" stop-color="#009"/><stop offset="1" stop-color="#3e0099"/></linearGradient>
<linearGradient id="r245" gradientUnits="userSpaceOnUse" x1="728.0" x2="810.1"><stop offset="0" stop-color="#009"/><stop offset="1" stop-color="#3d0099"/></linearGradient>
<linearGradient id="r246" gradientUnits="userSpaceOnUse" x1="729.0" x2="809.1"><stop offset="0" stop-color="#010099"/><stop offset="1" stop-color="#3c0099"/></linearGradient>
<linearGradient id="r247" gradientUnits="userSpaceOnUse" x1="730.1" x2="808.1"><stop offset="0" stop-color="#010099"/><stop offset="1" stop-color="#3b0099"/></linearGradient>
<linearGradient id="r248" gradientUnits="userSpaceOnUse" x1="731.2" x2="807.1"><stop offset="0" stop-color="#020099"/><stop offset="1" stop-color="#3a0099"/></linearGradient>
<linearGradient id="r249" gradientUnits="userSpaceOnUse" x1="732.3" x2="806.2"><stop offset="0" stop-color="#030099"/><stop offset="1" stop-color="#380099"/></linearGradient>
<linearGradient id="r250" gradientUnits="userSpaceOnUse" x1="733.4" x2="805.2"><stop offset="0" stop-color="#030099"/><stop offset="1" stop-color="#370099"/></linearGradient>
<linearGradient id="r251" gradientUnits="userSpaceOnUse" x1="734.5" x2="804.2"><stop offset="0" stop-color="#040099"/><stop offset="1" stop-color="#360099"/></linearGradient>
<linearGradient id="r252" gradientUnits="userSpaceOnUse" x1="735.6" x2="803.3"><stop offset="0" stop-color="#050099"/><stop offset="1" stop-color="#350099"/></linearGradient>
<linearGradient id="r253" gradientUnits="userSpaceOnUse" x1="736.8" x2="802.3"><stop offset="0" stop-color="#050099"/><stop offset="1" stop-color="#340099"/></linearGradient>
<linearGradient id="r254" gradientUnits="userSpaceOnUse" x1="737.9" x2="801.3"><stop offset="0" stop-color="#060099"/><stop offset="1" stop-color="#309"/></linearGradient>
<linearGradient id="r255" gradientUnits="userSpaceOnUse" x1="739.1" x2="800.3"><stop offset="0" stop-color="#070099"/><stop offset="1" stop-color="#320099"/></linearGradient>
<linearGradient id="r256" gradientUnits="userSpaceOnUse" x1="740.2" x2="799.4"><stop offset="0" stop-color="#070099"/><stop offset="1" stop-color="#310099"/></linearGradient>
<linearGradient id="r257" gradientUnits="userSpaceOnUse" x1="741.4" x2="798.4"><stop offset="0" stop-color="#080099"/><stop offset="1" stop-color="#300099"/></linearGradient>
<linearGradient id="r258" gradientUnits="userSpaceOnUse" x1="742.6" x2="797.4"><stop offset="0" stop-color="#090099"/><stop offset="1" stop-color="#2f0099"/></linearGradient>
<linearGradient id="r259" gradientUnits="userSpaceOnUse" x1="743.8" x2="796.5"><stop offset="0" stop-color="#090099"/><stop offset="1" stop-color="#2e0099"/></linearGradient>
<linearGradient id="r260" gradientUnits="userSpaceOnUse" x1="745.0" x2="795.5"><stop offset="0" stop-color="#0a0099"/><stop offset="1" stop-color="#2d0099"/></linearGradient>
<linearGradient id="r261" gradientUnits="userSpaceOnUse" x1="746.3" x2="794.5"><stop offset="0" stop-color="#0b0099"/><stop offset="1" stop-color="#2c0099"/></linearGradient>
<linearGradient id="r262" gradientUnits="userSpaceOnUse" x1="747.5" x2="793.5"><stop offset="0" stop-color="#0b0099"/><stop offset="1" stop-color="#2b0099"/></linearGradient>
<linearGradient id="r263" gradientUnits="userSpaceOnUse" x1="748.7" x2="792.6"><stop offset="0" stop-color="#0c0099"/><stop offset="1" stop-color="#2a0099"/></linearGradient>
<linearGradient id="r264" gradientUnits="userSpaceOnUse" x1="749.9" x2="791.6"><stop offset="0" stop-color="#0d0099"/><stop offset="1" stop-color="#290099"/></linearGradient>
<linearGradient id="r265" gradientUnits="userSpaceOnUse" x1="751.1" x2="790.6"><stop offset="0" stop-color="#0d0099"/><stop offset="1" stop-color="#280099"/></linearGradient>
<linearGradient id="r266" gradientUnits="userSpaceOnUse" x1="752.3" x2="789.7"><stop offset="0" stop-color="#0e0099"/><stop offset="1" stop-color="#270099"/></linearGradient>
<linearGradient id="r267" gradientUnits="userSpaceOnUse" x1="753.5" x2="788.7"><stop offset="0" stop-color="#0f0099"/><stop offset="1" stop-color="#260099"/></linearGradient>
<linearGradient id="r268" gradientUnits="userSpaceOnUse" x1="754.7" x2="787.7"><stop offset="0" stop-color="#0f0099"/><stop offset="1" stop-color="#250099"/></linearGradient>
<linearGradient id="r269" gradientUnits="userSpaceOnUse" x1="755.9" x2="786.7"><stop offset="0" stop-color="#100099"/><stop offset="1" stop-color="#240099"/></linearGradient>
<linearGradient id="r270" gradientUnits="userSpaceOnUse" x1="757.1" x2="785.8"><stop offset="0" stop-color="#100099"/><stop offset="1" stop-color="#240099"/></linearGradient>
<linearGradient id="r271" gradientUnits="userSpaceOnUse" x1="758.3" x2="784.8"><stop offset="0" stop-color="#109"/><stop offset="1" stop-color="#230099"/></linearGradient>
<linearGradient id="r272" gradientUnits="userSpaceOnUse" x1="759.5" x2="783.8"><stop offset="0" stop-color="#120099"/><stop offset="1" stop-color="#209"/></linearGradient>
<linearGradient id="r273" gradientUnits="userSpaceOnUse" x1="760.6" x2="782.9"><stop offset="0" stop-color="#120099"/><stop offset="1" stop-color="#210099"/></linearGradient>
<linearGradient id="r274" gradientUnits="userSpaceOnUse" x1="761.8" x2="781.9"><stop offset="0" stop-color="#130099"/><stop offset="1" stop-color="#200099"/></linearGradient>
<linearGradient id="r275" gradientUnits="userSpaceOnUse" x1="763.0" x2="780.9"><stop offset="0" stop-color="#130099"/><stop offset="1" stop-color="#1f0099"/></linearGradient>
<linearGradient id="r276" gradientUnits="userSpaceOnUse" x1="764.2" x2="779.9"><stop offset="0" stop-color="#140099"/><stop offset="1" stop-color="#1e0099"/></linearGradient>
<linearGradient id="r277" gradientUnits="userSpaceOnUse" x1="765.5" x2="779.0"><stop offset="0" stop-color="#150099"/><stop offset="1" stop-color="#1d0099"/></linearGradient>
<linearGradient id="r278" gradientUnits="userSpaceOnUse" x1="766.8" x2="778.0"><stop offset="0" stop-color="#150099"/><stop offset="1" stop-color="#1d0099"/></linearGradient>
<linearGradient id="r279" gradientUnits="userSpaceOnUse" x1="768.1" x2="777.0"><stop offset="0" stop-color="#160099"/><stop offset="1" stop-color="#1c0099"/></linearGradient>
<linearGradient id="r280" gradientUnits="userSpaceOnUse" x1="769.6" x2="776.1"><stop offset="0" stop-color="#170099"/><stop offset="1" stop-color="#1b0099"/></linearGradient>
<linearGradient id="r281" gradientUnits="userSpaceOnUse" x1="688.8" x2="696.0"><stop offset="0" stop-color="#0f0"/><stop offset=".200" stop-color="#0f0"/><stop offset="1" stop-color="#17ff00"/></linearGradient>
<linearGradient id="r282" gradientUnits="userSpaceOnUse" x1="688.9" x2="706.7"><stop offset="0" stop-color="#00ff04"/><stop offset=".111" stop-color="#02ff03"/><stop offset="1" stop-color="#45ff00"/></linearGradient>
<linearGradient id="r283" gradientUnits="userSpaceOnUse" x1="689.0" x2="717.3"><stop offset="0" stop-color="#00ff07"/><stop offset=".070" stop-color="#02ff07"/><stop offset=".333" stop-color="#20ff04"/><stop offset="1" stop-color="#78ff00"/></linearGradient>
<linearGradient id="r284" gradientUnits="userSpaceOnUse" x1="689.2" x2="728.0"><stop offset="0" stop-color="#00ff0b"/><stop offset=".051" stop-color="#02ff0a"/><stop offset=".436" stop-color="#41ff06"/><stop offset=".731" stop-color="#79ff01"/><stop offset="1" stop-color="#b1ff00"/></linearGradient>
<linearGradient id="r285" gradientUnits="userSpaceOnUse" x1="689.3" x2="738.7"><stop offset="0" stop-color="#00ff0f"/><stop offset=".030" stop-color="#00ff0e"/><stop offset=".121" stop-color="#12ff0d"/><stop offset=".485" stop-color="#63ff07"/><stop offset=".747" stop-color="#a7ff02"/><stop offset="1" stop-color="#f2ff00"/></linearGradient>
<linearGradient id="r286" gradientUnits="userSpaceOnUse" x1="689.5" x2="749.4"><stop offset="0" stop-color="#00ff12"/><stop offset=".025" stop-color="#00ff12"/><stop offset=".108" stop-color="#14ff11"/><stop offset=".417" stop-color="#69ff0b"/><stop offset=".642" stop-color="#b1ff06"/><stop offset=".850" stop-color="#feff01"/><stop offset="1" stop-color="#ffcd00"/></linearGradient>
<linearGradient id="r287" gradientUnits="userSpaceOnUse" x1="689.7" x2="760.1"><stop offset="0" stop-color="#00ff16"/><stop offset=".021" stop-color="#00ff16"/><stop offset=".092" stop-color="#14ff14"/><stop offset=".348" stop-color="#67ff0f"/><stop offset=".532" stop-color="#acff0b"/><stop offset=".723" stop-color="#fffe06"/><stop offset=".851" stop-color="#ffcc01"/><stop offset="1" stop-color="#ffa100"/></linearGradient>
<linearGradient id="r288" gradientUnits="userSpaceOnUse" x1="689.8" x2="770.7"><stop offset="0" stop-color="#00ff1a"/><stop offset=".019" stop-color="#00ff1a"/><stop offset=".080" stop-color="#14ff18"/><stop offset=".302" stop-color="#67ff14"/><stop offset=".469" stop-color="#b0ff0f"/><stop offset=".623" stop-color="#feff0b"/><stop offset=".704" stop-color="#ffd907"/><stop offset=".790" stop-color="#ffb804"/><stop offset=".889" stop-color="#ff9b01"/><stop offset="1" stop-color="#ff8100"/></linearGradient>
<linearGradient id="r289" gradientUnits="userSpaceOnUse" x1="690.0" x2="781.4"><stop offset="0" stop-color="#00ff1e"/><stop offset=".016" stop-color="#00ff1d"/><stop offset=".066" stop-color="#12ff1c"/><stop offset=".262" stop-color="#66ff18"/><stop offset=".404" stop-color="#acff14"/><stop offset=".552" stop-color="#fffe10"/><stop offset=".639" stop-color="#ffd00a"/><stop offset=".743" stop-color="#ffa706"/><stop offset=".863" stop-color="#ff8502"/><stop offset="1" stop-color="#ff6800"/></linearGradient>
<linearGradient id="r290" gradientUnits="userSpaceOnUse" x1="690.1" x2="792.1"><stop offset="0" stop-color="#0f2"/><stop offset=".015" stop-color="#00ff21"/><stop offset=".059" stop-color="#12ff20"/><stop offset=".235" stop-color="#66ff1c"/><stop offset=".368" stop-color="#b0ff19"/><stop offset=".490" stop-color="#ffff15"/><stop offset=".588" stop-color="#ffc70d"/><stop offset=".701" stop-color="#ff9a08"/><stop offset=".838" stop-color="#ff7403"/><stop offset="1" stop-color="#f50"/></linearGradient>
<linearGradient id="r291" gradientUnits="userSpaceOnUse" x1="690.3" x2="802.8"><stop offset="0" stop-color="#00ff26"/><stop offset=".013" stop-color="#00ff25"/><stop offset=".049" stop-color="#10ff24"/><stop offset=".209" stop-color="#64ff21"/><stop offset=".324" stop-color="#abff1e"/><stop offset=".444" stop-color="#fffd1a"/><stop offset=".489" stop-color="#ffdf15"/><stop offset=".542" stop-color="#ffc111"/><stop offset=".667" stop-color="#ff8e09"/><stop offset=".818" stop-color="#ff6603"/><stop offset="1" stop-color="#ff4500"/></linearGradient>
<linearGradient id="r292" gradientUnits="userSpaceOnUse" x1="690.5" x2="813.4"><stop offset="0" stop-color="#00ff29"/><stop offset=".012" stop-color="#00ff29"/><stop offset=".049" stop-color="#13ff28"/><stop offset=".195" stop-color="#67ff25"/><stop offset=".301" stop-color="#afff22"/><stop offset=".402" stop-color="#ffff1f"/><stop offset=".451" stop-color="#ffdb19"/><stop offset=".504" stop-color="#ffbb14"/><stop offset=".565" stop-color="#ff9e0f"/><stop offset=".634" stop-color="#ff850b"/><stop offset=".797" stop-color="#ff5a04"/><stop offset="1" stop-color="#ff3800"/></linearGradient>
<linearGradient id="r293" gradientUnits="userSpaceOnUse" x1="690.6" x2="824.1"><stop offset="0" stop-color="#00ff2d"/><stop offset=".011" stop-color="#00ff2d"/><stop offset=".041" stop-color="#11ff2d"/><stop offset=".176" stop-color="#65ff2a"/><stop offset=".270" stop-color="#aaff27"/><stop offset=".371" stop-color="#fffd24"/><stop offset=".419" stop-color="#ffd61d"/><stop offset=".476" stop-color="#ffb317"/><stop offset=".536" stop-color="#ff9612"/><stop offset=".607" stop-color="#ff7c0d"/><stop offset=".779" stop-color="#ff4f05"/><stop offset="1" stop-color="#ff2d00"/></linearGradient>
<linearGradient id="r294" gradientUnits="userSpaceOnUse" x1="690.8" x2="834.8"><stop offset="0" stop-color="#00ff32"/><stop offset=".010" stop-color="#00ff31"/><stop offset=".035" stop-color="#0eff31"/><stop offset=".159" stop-color="#63ff2e"/><stop offset=".246" stop-color="#a8ff2c"/><stop offset=".343" stop-color="#fffd29"/><stop offset=".391" stop-color="#ffd321"/><stop offset=".446" stop-color="#ffaf1a"/><stop offset=".512" stop-color="#ff8e14"/><stop offset=".585" stop-color="#ff730e"/><stop offset=".668" stop-color="#ff5b0a"/><stop offset=".765" stop-color="#ff4606"/><stop offset="1" stop-color="#ff2400"/></linearGradient>
<linearGradient id="r295" gradientUnits="userSpaceOnUse" x1="691.0" x2="845.5"><stop offset="0" stop-color="#00ff36"/><stop offset=".010" stop-color="#00ff35"/><stop offset=".035" stop-color="#11ff35"/><stop offset=".152" stop-color="#6f3"/><stop offset=".235" stop-color="#afff31"/><stop offset=".316" stop-color="#fffe2e"/><stop offset=".365" stop-color="#ffd125"/><stop offset=".419" stop-color="#ffab1d"/><stop offset=".484" stop-color="#ff8a16"/><stop offset=".561" stop-color="#ff6c10"/><stop offset=".648" stop-color="#ff540b"/><stop offset=".748" stop-color="#ff3e06"/><stop offset="1" stop-color="#ff1c00"/></linearGradient>
<linearGradient id="r296" gradientUnits="userSpaceOnUse" x1="691.1" x2="856.2"><stop offset="0" stop-color="#00ff3a"/><stop offset=".009" stop-color="#00ff3a"/><stop offset=".033" stop-color="#11ff39"/><stop offset=".139" stop-color="#64ff37"/><stop offset=".211" stop-color="#a7ff36"/><stop offset=".296" stop-color="#fffc33"/><stop offset=".344" stop-color="#ffcd29"/><stop offset=".399" stop-color="#ffa620"/><stop offset=".465" stop-color="#ff8318"/><stop offset=".541" stop-color="#f61"/><stop offset=".631" stop-color="#ff4d0c"/><stop offset=".734" stop-color="#ff3707"/><stop offset="1" stop-color="#ff1500"/></linearGradient>
<linearGradient id="r297" gradientUnits="userSpaceOnUse" x1="691.3" x2="866.8"><stop offset="0" stop-color="#00ff3e"/><stop offset=".009" stop-color="#00ff3e"/><stop offset=".031" stop-color="#11ff3d"/><stop offset=".131" stop-color="#65ff3c"/><stop offset=".202" stop-color="#abff3b"/><stop offset=".276" stop-color="#fffe39"/><stop offset=".324" stop-color="#ffcc2d"/><stop offset=".378" stop-color="#ffa323"/><stop offset=".443" stop-color="#ff7f1a"/><stop offset=".523" stop-color="#ff6013"/><stop offset=".614" stop-color="#ff470d"/><stop offset=".722" stop-color="#ff3107"/><stop offset="1" stop-color="#ff0f00"/></linearGradient>
<linearGradient id="r298" gradientUnits="userSpaceOnUse" x1="691.4" x2="877.5"><stop offset="0" stop-color="#00ff42"/><stop offset=".008" stop-color="#00ff42"/><stop offset=".029" stop-color="#11ff42"/><stop offset=".123" stop-color="#66ff41"/><stop offset=".193" stop-color="#b0ff40"/><stop offset=".257" stop-color="#feff3f"/><stop offset=".306" stop-color="#ffca31"/><stop offset=".362" stop-color="#ff9e26"/><stop offset=".429" stop-color="#ff791c"/><stop offset=".507" stop-color="#ff5b14"/><stop offset=".601" stop-color="#ff410e"/><stop offset=".710" stop-color="#ff2b08"/><stop offset="1" stop-color="#ff0900"/></linearGradient>
<linearGradient id="r299" gradientUnits="userSpaceOnUse" x1="691.6" x2="888.2"><stop offset="0" stop-color="#00ff46"/><stop offset=".008" stop-color="#00ff46"/><stop offset=".025" stop-color="#0fff46"/><stop offset=".114" stop-color="#64ff46"/><stop offset=".178" stop-color="#abff45"/><stop offset=".244" stop-color="#fffe44"/><stop offset=".289" stop-color="#ffc935"/><stop offset=".345" stop-color="#ff9b29"/><stop offset=".411" stop-color="#ff761f"/><stop offset=".492" stop-color="#ff5616"/><stop offset=".586" stop-color="#ff3c0f"/><stop offset=".701" stop-color="#ff2608"/><stop offset=".838" stop-color="#ff1303"/><stop offset="1" stop-color="#ff0400"/></linearGradient>
<linearGradient id="r300" gradientUnits="userSpaceOnUse" x1="691.8" x2="898.9"><stop offset="0" stop-color="#00ff4b"/><stop offset=".007" stop-color="#00ff4b"/><stop offset=".027" stop-color="#11ff4b"/><stop offset=".111" stop-color="#67ff4a"/><stop offset=".171" stop-color="#afff4a"/><stop offset=".229" stop-color="#ffff4a"/><stop offset=".275" stop-color="#ffc73a"/><stop offset=".330" stop-color="#ff982c"/><stop offset=".398" stop-color="#ff7120"/><stop offset=".477" stop-color="#ff5117"/><stop offset=".573" stop-color="#ff370f"/><stop offset=".692" stop-color="#ff2109"/><stop offset=".834" stop-color="#ff0f04"/><stop offset="1" stop-color="#f00"/></linearGradient>
<linearGradient id="r301" gradientUnits="userSpaceOnUse" x1="691.9" x2="899.2"><stop offset="0" stop-color="#00ff4f"/><stop offset=".007" stop-color="#00ff4f"/><stop offset=".024" stop-color="#0fff4f"/><stop offset=".108" stop-color="#65ff4f"/><stop offset=".166" stop-color="#aaff4f"/><stop offset=".229" stop-color="#fffd4f"/><stop offset=".275" stop-color="#ffc53e"/><stop offset=".330" stop-color="#ff972f"/><stop offset=".398" stop-color="#ff7023"/><stop offset=".477" stop-color="#ff501a"/><stop offset=".576" stop-color="#ff3611"/><stop offset=".694" stop-color="#ff200a"/><stop offset=".841" stop-color="#ff0d05"/><stop offset="1" stop-color="#f00"/></linearGradient>
<linearGradient id="r302" gradientUnits="userSpaceOnUse" x1="692.1" x2="898.2"><stop offset="0" stop-color="#00ff53"/><stop offset=".007" stop-color="#00ff53"/><stop offset=".024" stop-color="#0fff54"/><stop offset=".109" stop-color="#66ff54"/><stop offset=".169" stop-color="#aeff55"/><stop offset=".228" stop-color="#ff5"/><stop offset=".274" stop-color="#ffc643"/><stop offset=".329" stop-color="#ff9733"/><stop offset=".395" stop-color="#ff7127"/><stop offset=".475" stop-color="#ff511c"/><stop offset=".574" stop-color="#ff3614"/><stop offset=".692" stop-color="#ff200c"/><stop offset=".840" stop-color="#ff0d06"/><stop offset="1" stop-color="#ff0002"/></linearGradient>
<linearGradient id="r303" gradientUnits="userSpaceOnUse" x1="692.3" x2="897.2"><stop offset="0" stop-color="#00ff58"/><stop offset=".007" stop-color="#00ff58"/><stop offset=".024" stop-color="#0fff58"/><stop offset=".107" stop-color="#64ff59"/><stop offset=".166" stop-color="#a9ff5a"/><stop offset=".229" stop-color="#fffd5a"/><stop offset=".276" stop-color="#ffc447"/><stop offset=".332" stop-color="#ff9637"/><stop offset=".398" stop-color="#ff702a"/><stop offset=".478" stop-color="#ff501f"/><stop offset=".576" stop-color="#ff3616"/><stop offset=".695" stop-color="#ff200e"/><stop offset=".844" stop-color="#ff0d08"/><stop offset="1" stop-color="#ff0003"/></linearGradient>
<linearGradient id="r304" gradientUnits="userSpaceOnUse" x1="692.4" x2="896.3"><stop offset="0" stop-color="#00ff5c"/><stop offset=".007" stop-color="#00ff5d"/><stop offset=".027" stop-color="#12ff5d"/><stop offset=".110" stop-color="#67ff5e"/><stop offset=".172" stop-color="#b1ff60"/><stop offset=".228" stop-color="#ffff61"/><stop offset=".275" stop-color="#ffc54c"/><stop offset=".328" stop-color="#ff983c"/><stop offset=".395" stop-color="#ff712e"/><stop offset=".475" stop-color="#ff5122"/><stop offset=".574" stop-color="#ff3618"/><stop offset=".691" stop-color="#ff2010"/><stop offset=".841" stop-color="#ff0d09"/><stop offset="1" stop-color="#ff0004"/></linearGradient>
<linearGradient id="r305" gradientUnits="userSpaceOnUse" x1="692.6" x2="895.3"><stop offset="0" stop-color="#00ff61"/><stop offset=".007" stop-color="#00ff61"/><stop offset=".025" stop-color="#0fff61"/><stop offset=".108" stop-color="#65ff63"/><stop offset=".165" stop-color="#a8ff65"/><stop offset=".229" stop-color="#fffd66"/><stop offset=".276" stop-color="#ffc451"/><stop offset=".330" stop-color="#ff973f"/><stop offset=".397" stop-color="#ff7031"/><stop offset=".478" stop-color="#ff5024"/><stop offset=".576" stop-color="#ff361a"/><stop offset=".695" stop-color="#ff2012"/><stop offset=".842" stop-color="#ff0d0b"/><stop offset="1" stop-color="#ff0006"/></linearGradient>
<linearGradient id="r306" gradientUnits="userSpaceOnUse" x1="692.7" x2="894.3"><stop offset="0" stop-color="#0f6"/><stop offset=".007" stop-color="#0f6"/><stop offset=".025" stop-color="#0fff66"/><stop offset=".109" stop-color="#65ff69"/><stop offset=".171" stop-color="#b0ff6b"/><stop offset=".228" stop-color="#ffff6d"/><stop offset=".275" stop-color="#ffc556"/><stop offset=".329" stop-color="#ff9744"/><stop offset=".396" stop-color="#ff7134"/><stop offset=".475" stop-color="#ff5128"/><stop offset=".574" stop-color="#ff361d"/><stop offset=".693" stop-color="#ff2014"/><stop offset=".842" stop-color="#ff0d0c"/><stop offset="1" stop-color="#ff0007"/></linearGradient>
<linearGradient id="r307" gradientUnits="userSpaceOnUse" x1="692.9" x2="893.3"><stop offset="0" stop-color="#00ff6a"/><stop offset=".007" stop-color="#00ff6a"/><stop offset=".022" stop-color="#0dff6b"/><stop offset=".107" stop-color="#63ff6e"/><stop offset=".165" stop-color="#a8ff70"/><stop offset=".229" stop-color="#fffd72"/><stop offset=".274" stop-color="#ffc65b"/><stop offset=".329" stop-color="#ff9748"/><stop offset=".397" stop-color="#ff7037"/><stop offset=".476" stop-color="#ff512a"/><stop offset=".574" stop-color="#ff361f"/><stop offset=".693" stop-color="#ff2016"/><stop offset=".843" stop-color="#ff0d0e"/><stop offset="1" stop-color="#ff0008"/></linearGradient>
<linearGradient id="r308" gradientUnits="userSpaceOnUse" x1="693.1" x2="892.3"><stop offset="0" stop-color="#00ff6f"/><stop offset=".008" stop-color="#00ff6f"/><stop offset=".025" stop-color="#10ff70"/><stop offset=".110" stop-color="#67ff73"/><stop offset=".170" stop-color="#afff76"/><stop offset=".228" stop-color="#ffff79"/><stop offset=".273" stop-color="#ffc761"/><stop offset=".328" stop-color="#ff984c"/><stop offset=".396" stop-color="#ff713b"/><stop offset=".476" stop-color="#ff512d"/><stop offset=".574" stop-color="#ff3621"/><stop offset=".692" stop-color="#ff2018"/><stop offset=".842" stop-color="#ff0d10"/><stop offset="1" stop-color="#ff000a"/></linearGradient>
<linearGradient id="r309" gradientUnits="userSpaceOnUse" x1="693.2" x2="891.4"><stop offset="0" stop-color="#00ff74"/><stop offset=".008" stop-color="#00ff74"/><stop offset=".020" stop-color="#0bff75"/><stop offset=".106" stop-color="#62ff78"/><stop offset=".164" stop-color="#a7ff7b"/><stop offset=".229" stop-color="#fffd7e"/><stop offset=".275" stop-color="#ffc565"/><stop offset=".330" stop-color="#ff9750"/><stop offset=".395" stop-color="#ff713f"/><stop offset=".476" stop-color="#ff5130"/><stop offset=".574" stop-color="#ff3624"/><stop offset=".693" stop-color="#ff201a"/><stop offset=".841" stop-color="#ff0d11"/><stop offset="1" stop-color="#ff000b"/></linearGradient>
<linearGradient id="r310" gradientUnits="userSpaceOnUse" x1="693.4" x2="890.4"><stop offset="0" stop-color="#00ff79"/><stop offset=".008" stop-color="#00ff79"/><stop offset=".023" stop-color="#0eff7a"/><stop offset=".109" stop-color="#65ff7e"/><stop offset=".170" stop-color="#afff82"/><stop offset=".228" stop-color="#fffe85"/><stop offset=".274" stop-color="#ffc66b"/><stop offset=".330" stop-color="#ff9754"/><stop offset=".396" stop-color="#ff7142"/><stop offset=".477" stop-color="#ff5033"/><stop offset=".574" stop-color="#ff3626"/><stop offset=".693" stop-color="#ff201c"/><stop offset=".843" stop-color="#ff0d13"/><stop offset="1" stop-color="#ff000c"/></linearGradient>
<linearGradient id="r311" gradientUnits="userSpaceOnUse" x1="693.5" x2="889.4"><stop offset="0" stop-color="#00ff7d"/><stop offset=".008" stop-color="#00ff7e"/><stop offset=".023" stop-color="#0eff7f"/><stop offset=".107" stop-color="#63ff83"/><stop offset=".163" stop-color="#a6ff87"/><stop offset=".230" stop-color="#fffd8b"/><stop offset=".276" stop-color="#ffc56f"/><stop offset=".332" stop-color="#ff9658"/><stop offset=".398" stop-color="#ff7045"/><stop offset=".477" stop-color="#ff5036"/><stop offset=".574" stop-color="#ff3629"/><stop offset=".694" stop-color="#ff201e"/><stop offset=".842" stop-color="#ff0d15"/><stop offset="1" stop-color="#ff000e"/></linearGradient>
<linearGradient id="r312" gradientUnits="userSpaceOnUse" x1="693.7" x2="888.4"><stop offset="0" stop-color="#00ff82"/><stop offset=".008" stop-color="#00ff83"/><stop offset=".023" stop-color="#0eff84"/><stop offset=".108" stop-color="#64ff89"/><stop offset=".169" stop-color="#adff8d"/><stop offset=".228" stop-color="#ffff92"/><stop offset=".274" stop-color="#ffc675"/><stop offset=".328" stop-color="#ff985e"/><stop offset=".395" stop-color="#ff714a"/><stop offset=".477" stop-color="#ff5139"/><stop offset=".574" stop-color="#ff362b"/><stop offset=".692" stop-color="#ff2020"/><stop offset=".841" stop-color="#ff0d16"/><stop offset="1" stop-color="#ff000f"/></linearGradient>
<linearGradient id="r313" gradientUnits="userSpaceOnUse" x1="693.9" x2="887.4"><stop offset="0" stop-color="#00ff87"/><stop offset=".008" stop-color="#0f8"/><stop offset=".021" stop-color="#0bff89"/><stop offset=".106" stop-color="#61ff8e"/><stop offset=".165" stop-color="#a8ff93"/><stop offset=".229" stop-color="#fffd98"/><stop offset=".276" stop-color="#ffc47a"/><stop offset=".330" stop-color="#ff9761"/><stop offset=".397" stop-color="#ff704d"/><stop offset=".477" stop-color="#ff513c"/><stop offset=".575" stop-color="#ff362e"/><stop offset=".693" stop-color="#ff2022"/><stop offset=".843" stop-color="#ff0d18"/><stop offset="1" stop-color="#f01"/></linearGradient>
<linearGradient id="r314" gradientUnits="userSpaceOnUse" x1="694.0" x2="886.5"><stop offset="0" stop-color="#00ff8c"/><stop offset=".008" stop-color="#00ff8d"/><stop offset=".023" stop-color="#0eff8e"/><stop offset=".109" stop-color="#65ff94"/><stop offset=".169" stop-color="#adff9a"/><stop offset=".229" stop-color="#fffe9f"/><stop offset=".275" stop-color="#ffc57f"/><stop offset=".330" stop-color="#ff9766"/><stop offset=".395" stop-color="#ff7151"/><stop offset=".475" stop-color="#ff513f"/><stop offset=".574" stop-color="#ff3630"/><stop offset=".691" stop-color="#ff2024"/><stop offset=".842" stop-color="#ff0d1a"/><stop offset="1" stop-color="#ff0012"/></linearGradient>
<linearGradient id="r315" gradientUnits="userSpaceOnUse" x1="694.2" x2="885.5"><stop offset="0" stop-color="#00ff92"/><stop offset=".008" stop-color="#00ff92"/><stop offset=".018" stop-color="#09ff93"/><stop offset=".104" stop-color="#60ff9a"/><stop offset=".162" stop-color="#a4ff9f"/><stop offset=".230" stop-color="#fffca5"/><stop offset=".277" stop-color="#ffc384"/><stop offset=".332" stop-color="#ff966a"/><stop offset=".397" stop-color="#ff7054"/><stop offset=".478" stop-color="#ff5042"/><stop offset=".577" stop-color="#ff3533"/><stop offset=".695" stop-color="#ff2026"/><stop offset=".843" stop-color="#ff0d1b"/><stop offset="1" stop-color="#ff0014"/></linearGradient>
<linearGradient id="r316" gradientUnits="userSpaceOnUse" x1="694.4" x2="884.5"><stop offset="0" stop-color="#00ff97"/><stop offset=".008" stop-color="#00ff97"/><stop offset=".021" stop-color="#0cff98"/><stop offset=".108" stop-color="#63ffa0"/><stop offset=".168" stop-color="#acffa6"/><stop offset=".228" stop-color="#ffffad"/><stop offset=".273" stop-color="#ffc78c"/><stop offset=".328" stop-color="#ff9870"/><stop offset=".394" stop-color="#ff7259"/><stop offset=".475" stop-color="#ff5146"/><stop offset=".575" stop-color="#ff3635"/><stop offset=".693" stop-color="#ff2028"/><stop offset=".843" stop-color="#ff0d1d"/><stop offset="1" stop-color="#ff0015"/></linearGradient>
<linearGradient id="r317" gradientUnits="userSpaceOnUse" x1="694.5" x2="883.5"><stop offset="0" stop-color="#00ff9c"/><stop offset=".008" stop-color="#00ff9d"/><stop offset=".018" stop-color="#09ff9e"/><stop offset=".106" stop-color="#61ffa5"/><stop offset=".164" stop-color="#a6ffac"/><stop offset=".230" stop-color="#fffdb2"/><stop offset=".274" stop-color="#ffc691"/><stop offset=".330" stop-color="#ff9774"/><stop offset=".396" stop-color="#ff715c"/><stop offset=".478" stop-color="#ff5048"/><stop offset=".575" stop-color="#ff3638"/><stop offset=".694" stop-color="#ff202a"/><stop offset=".842" stop-color="#ff0d1f"/><stop offset="1" stop-color="#ff0017"/></linearGradient>
<linearGradient id="r318" gradientUnits="userSpaceOnUse" x1="694.7" x2="882.5"><stop offset="0" stop-color="#00ffa1"/><stop offset=".008" stop-color="#00ffa2"/><stop offset=".019" stop-color="#09ffa3"/><stop offset=".106" stop-color="#62ffab"/><stop offset=".168" stop-color="#abffb3"/><stop offset=".229" stop-color="#fffeba"/><stop offset=".274" stop-color="#ffc697"/><stop offset=".330" stop-color="#ff9779"/><stop offset=".396" stop-color="#ff7160"/><stop offset=".476" stop-color="#ff514c"/><stop offset=".574" stop-color="#ff363b"/><stop offset=".691" stop-color="#ff202d"/><stop offset=".840" stop-color="#ff0d21"/><stop offset="1" stop-color="#ff0018"/></linearGradient>
<linearGradient id="r319" gradientUnits="userSpaceOnUse" x1="694.8" x2="881.6"><stop offset="0" stop-color="#00ffa7"/><stop offset=".008" stop-color="#00ffa7"/><stop offset=".016" stop-color="#07ffa8"/><stop offset=".104" stop-color="#60ffb1"/><stop offset=".163" stop-color="#a5ffb8"/><stop offset=".230" stop-color="#fffcc0"/><stop offset=".275" stop-color="#ffc59b"/><stop offset=".332" stop-color="#ff967d"/><stop offset=".398" stop-color="#ff7063"/><stop offset=".479" stop-color="#ff504f"/><stop offset=".578" stop-color="#ff353d"/><stop offset=".695" stop-color="#ff202f"/><stop offset=".845" stop-color="#ff0d22"/><stop offset="1" stop-color="#ff001a"/></linearGradient>
<linearGradient id="r320" gradientUnits="userSpaceOnUse" x1="695.0" x2="880.6"><stop offset="0" stop-color="#00ffac"/><stop offset=".008" stop-color="#00ffad"/><stop offset=".019" stop-color="#09ffae"/><stop offset=".108" stop-color="#63ffb8"/><stop offset=".169" stop-color="#adffc0"/><stop offset=".228" stop-color="#ffffc8"/><stop offset=".274" stop-color="#ffc6a2"/><stop offset=".328" stop-color="#ff9883"/><stop offset=".395" stop-color="#ff7168"/><stop offset=".476" stop-color="#ff5153"/><stop offset=".575" stop-color="#ff3640"/><stop offset=".694" stop-color="#ff2031"/><stop offset=".844" stop-color="#ff0d24"/><stop offset="1" stop-color="#ff001b"/></linearGradient>
<linearGradient id="r321" gradientUnits="userSpaceOnUse" x1="695.2" x2="879.6"><stop offset="0" stop-color="#00ffb2"/><stop offset=".008" stop-color="#00ffb2"/><stop offset=".019" stop-color="#09ffb4"/><stop offset=".106" stop-color="#61ffbe"/><stop offset=".163" stop-color="#a5ffc5"/><stop offset=".228" stop-color="#feffd0"/><stop offset=".230" stop-color="#fffcce"/><stop offset=".276" stop-color="#ffc4a6"/><stop offset=".331" stop-color="#ff9687"/><stop offset=".396" stop-color="#ff716c"/><stop offset=".477" stop-color="#ff5056"/><stop offset=".575" stop-color="#ff3643"/><stop offset=".694" stop-color="#ff2034"/><stop offset=".843" stop-color="#ff0d26"/><stop offset="1" stop-color="#ff001d"/></linearGradient>
<linearGradient id="r322" gradientUnits="userSpaceOnUse" x1="695.3" x2="878.6"><stop offset="0" stop-color="#00ffb7"/><stop offset=".008" stop-color="#00ffb8"/><stop offset=".019" stop-color="#0affb9"/><stop offset=".106" stop-color="#62ffc4"/><stop offset=".166" stop-color="#a9ffcd"/><stop offset=".229" stop-color="#fffed6"/><stop offset=".275" stop-color="#ffc5ad"/><stop offset=".330" stop-color="#ff978c"/><stop offset=".395" stop-color="#ff7171"/><stop offset=".477" stop-color="#ff5159"/><stop offset=".575" stop-color="#ff3646"/><stop offset=".692" stop-color="#ff2036"/><stop offset=".842" stop-color="#ff0d28"/><stop offset="1" stop-color="#ff001e"/></linearGradient>
<linearGradient id="r323" gradientUnits="userSpaceOnUse" x1="695.5" x2="877.6"><stop offset="0" stop-color="#00ffbd"/><stop offset=".008" stop-color="#00ffbe"/><stop offset=".016" stop-color="#07ffbf"/><stop offset=".104" stop-color="#5fffca"/><stop offset=".162" stop-color="#a3ffd3"/><stop offset=".230" stop-color="#fffcdc"/><stop offset=".277" stop-color="#ffc4b2"/><stop offset=".332" stop-color="#ff9690"/><stop offset=".397" stop-color="#ff7074"/><stop offset=".477" stop-color="#ff515d"/><stop offset=".575" stop-color="#ff3649"/><stop offset=".693" stop-color="#ff2038"/><stop offset=".844" stop-color="#ff0d2a"/><stop offset="1" stop-color="#ff0020"/></linearGradient>
<linearGradient id="r324" gradientUnits="userSpaceOnUse" x1="695.7" x2="876.7"><stop offset="0" stop-color="#00ffc3"/><stop offset=".008" stop-color="#00ffc4"/><stop offset=".019" stop-color="#0affc5"/><stop offset=".107" stop-color="#63ffd1"/><stop offset=".168" stop-color="#abffdb"/><stop offset=".229" stop-color="#fffee5"/><stop offset=".275" stop-color="#ffc5b9"/><stop offset=".331" stop-color="#ff9796"/><stop offset=".397" stop-color="#ff7078"/><stop offset=".477" stop-color="#ff5160"/><stop offset=".576" stop-color="#ff364b"/><stop offset=".694" stop-color="#ff203b"/><stop offset=".843" stop-color="#ff0d2c"/><stop offset="1" stop-color="#f02"/></linearGradient>
<linearGradient id="r325" gradientUnits="userSpaceOnUse" x1="695.8" x2="875.7"><stop offset="0" stop-color="#00ffc8"/><stop offset=".014" stop-color="#05ffca"/><stop offset=".103" stop-color="#5effd7"/><stop offset=".161" stop-color="#a3ffe0"/><stop offset=".228" stop-color="#feffed"/><stop offset=".231" stop-color="#fffceb"/><stop offset=".275" stop-color="#ffc5c0"/><stop offset=".331" stop-color="#ff979b"/><stop offset=".397" stop-color="#ff707d"/><stop offset=".478" stop-color="#ff5063"/><stop offset=".575" stop-color="#ff364e"/><stop offset=".694" stop-color="#ff203d"/><stop offset=".844" stop-color="#ff0d2e"/><stop offset="1" stop-color="#ff0023"/></linearGradient>
<linearGradient id="r326" gradientUnits="userSpaceOnUse" x1="696.0" x2="874.7"><stop offset="0" stop-color="#00ffce"/><stop offset=".008" stop-color="#00ffcf"/><stop offset=".017" stop-color="#07ffd1"/><stop offset=".106" stop-color="#61ffde"/><stop offset=".168" stop-color="#abffe9"/><stop offset=".229" stop-color="#fffef4"/><stop offset=".274" stop-color="#ffc7c7"/><stop offset=".330" stop-color="#ff97a1"/><stop offset=".397" stop-color="#ff7081"/><stop offset=".478" stop-color="#ff5067"/><stop offset=".575" stop-color="#ff3651"/><stop offset=".693" stop-color="#ff2040"/><stop offset=".844" stop-color="#ff0d30"/><stop offset="1" stop-color="#ff0025"/></linearGradient>
<linearGradient id="r327" gradientUnits="userSpaceOnUse" x1="696.1" x2="873.7"><stop offset="0" stop-color="#00ffd4"/><stop offset=".014" stop-color="#05ffd6"/><stop offset=".104" stop-color="#5fffe4"/><stop offset=".163" stop-color="#a5ffef"/><stop offset=".230" stop-color="#fffcfa"/><stop offset=".275" stop-color="#ffc5cc"/><stop offset=".331" stop-color="#ff96a5"/><stop offset=".399" stop-color="#ff6f85"/><stop offset=".478" stop-color="#ff506b"/><stop offset=".576" stop-color="#ff3654"/><stop offset=".694" stop-color="#ff2042"/><stop offset=".843" stop-color="#ff0d32"/><stop offset="1" stop-color="#ff0027"/></linearGradient>
<linearGradient id="r328" gradientUnits="userSpaceOnUse" x1="696.3" x2="872.7"><stop offset="0" stop-color="#00ffda"/><stop offset=".011" stop-color="#02ffdc"/><stop offset=".096" stop-color="#56ffea"/><stop offset=".153" stop-color="#98fff4"/><stop offset=".204" stop-color="#dcffff"/><stop offset=".235" stop-color="#fff5fc"/><stop offset=".280" stop-color="#ffc0ce"/><stop offset=".337" stop-color="#ff92a7"/><stop offset=".405" stop-color="#ff6c86"/><stop offset=".484" stop-color="#ff4e6c"/><stop offset=".581" stop-color="#ff3556"/><stop offset=".700" stop-color="#ff1f44"/><stop offset=".847" stop-color="#ff0c34"/><stop offset="1" stop-color="#ff0028"/></linearGradient>
<linearGradient id="r329" gradientUnits="userSpaceOnUse" x1="696.5" x2="871.8"><stop offset="0" stop-color="#00ffe0"/><stop offset=".011" stop-color="#02ffe2"/><stop offset=".088" stop-color="#4effef"/><stop offset=".171" stop-color="#afffff"/><stop offset=".239" stop-color="#ffefff"/><stop offset=".285" stop-color="#ffbcd1"/><stop offset=".342" stop-color="#ff8faa"/><stop offset=".407" stop-color="#ff6b8a"/><stop offset=".487" stop-color="#ff4d6f"/><stop offset=".584" stop-color="#ff3459"/><stop offset=".701" stop-color="#ff1f46"/><stop offset=".849" stop-color="#ff0c36"/><stop offset="1" stop-color="#ff002a"/></linearGradient>
<linearGradient id="r330" gradientUnits="userSpaceOnUse" x1="696.6" x2="870.8"><stop offset="0" stop-color="#00ffe7"/><stop offset=".011" stop-color="#02ffe8"/><stop offset=".074" stop-color="#3ffff3"/><stop offset=".138" stop-color="#85ffff"/><stop offset=".246" stop-color="#ffe6fe"/><stop offset=".292" stop-color="#ffb5d1"/><stop offset=".350" stop-color="#ff8aaa"/><stop offset=".415" stop-color="#ff688b"/><stop offset=".496" stop-color="#ff4b71"/><stop offset=".593" stop-color="#ff325a"/><stop offset=".708" stop-color="#ff1e48"/><stop offset=".854" stop-color="#ff0c37"/><stop offset="1" stop-color="#ff002c"/></linearGradient>
<linearGradient id="r331" gradientUnits="userSpaceOnUse" x1="696.8" x2="869.8"><stop offset="0" stop-color="#00ffed"/><stop offset=".012" stop-color="#02ffef"/><stop offset=".101" stop-color="#5bffff"/><stop offset=".254" stop-color="#ffddfd"/><stop offset=".300" stop-color="#ffaed2"/><stop offset=".357" stop-color="#ff85ab"/><stop offset=".424" stop-color="#ff648c"/><stop offset=".501" stop-color="#ff4973"/><stop offset=".597" stop-color="#ff315c"/><stop offset=".712" stop-color="#ff1d4a"/><stop offset="1" stop-color="#ff002e"/></linearGradient>
<linearGradient id="r332" gradientUnits="userSpaceOnUse" x1="696.9" x2="868.8"><stop offset="0" stop-color="#00fff3"/><stop offset=".012" stop-color="#02fff5"/><stop offset=".052" stop-color="#29fffc"/><stop offset=".160" stop-color="#95ecff"/><stop offset=".259" stop-color="#ffd7ff"/><stop offset=".305" stop-color="#ffaad3"/><stop offset=".363" stop-color="#ff82ad"/><stop offset=".430" stop-color="#ff628e"/><stop offset=".509" stop-color="#ff4774"/><stop offset=".605" stop-color="#ff2f5e"/><stop offset=".718" stop-color="#ff1c4b"/><stop offset="1" stop-color="#ff0030"/></linearGradient>
<linearGradient id="r333" gradientUnits="userSpaceOnUse" x1="697.1" x2="867.9"><stop offset="0" stop-color="#00fffa"/><stop offset=".012" stop-color="#02fffc"/><stop offset=".082" stop-color="#44f5ff"/><stop offset=".266" stop-color="#ffcffe"/><stop offset=".313" stop-color="#ffa4d4"/><stop offset=".368" stop-color="#ff7faf"/><stop offset=".436" stop-color="#ff5f90"/><stop offset=".515" stop-color="#ff4576"/><stop offset=".608" stop-color="#ff2f60"/><stop offset=".722" stop-color="#ff1b4d"/><stop offset="1" stop-color="#ff0031"/></linearGradient>
<linearGradient id="r334" gradientUnits="userSpaceOnUse" x1="697.3" x2="866.9"><stop offset="0" stop-color="#00feff"/><stop offset=".012" stop-color="#02fcff"/><stop offset=".079" stop-color="#40efff"/><stop offset=".274" stop-color="#ffc7fe"/><stop offset=".321" stop-color="#ff9ed4"/><stop offset=".376" stop-color="#ff7bb0"/><stop offset=".441" stop-color="#ff5d92"/><stop offset=".521" stop-color="#ff4378"/><stop offset=".615" stop-color="#ff2d62"/><stop offset=".726" stop-color="#ff1b4f"/><stop offset="1" stop-color="#f03"/></linearGradient>
<linearGradient id="r335" gradientUnits="userSpaceOnUse" x1="697.4" x2="865.9"><stop offset="0" stop-color="#00f7ff"/><stop offset=".012" stop-color="#02f5ff"/><stop offset=".092" stop-color="#4ae7ff"/><stop offset=".279" stop-color="#ffc2ff"/><stop offset=".326" stop-color="#ff9ad6"/><stop offset=".383" stop-color="#ff77b2"/><stop offset=".448" stop-color="#ff5b94"/><stop offset=".525" stop-color="#ff427b"/><stop offset=".617" stop-color="#ff2d65"/><stop offset=".724" stop-color="#ff1b52"/><stop offset="1" stop-color="#ff0035"/></linearGradient>
<linearGradient id="r336" gradientUnits="userSpaceOnUse" x1="697.6" x2="864.9"><stop offset="0" stop-color="#00f1ff"/><stop offset=".012" stop-color="#02efff"/><stop offset=".090" stop-color="#46e1ff"/><stop offset=".287" stop-color="#ffbafe"/><stop offset=".334" stop-color="#ff94d6"/><stop offset=".391" stop-color="#ff73b3"/><stop offset=".457" stop-color="#ff5795"/><stop offset=".534" stop-color="#ff407c"/><stop offset=".624" stop-color="#ff2c67"/><stop offset=".731" stop-color="#ff1a54"/><stop offset="1" stop-color="#ff0037"/></linearGradient>
<linearGradient id="r337" gradientUnits="userSpaceOnUse" x1="697.8" x2="863.9"><stop offset="0" stop-color="#00ebff"/><stop offset=".012" stop-color="#02e9ff"/><stop offset=".090" stop-color="#44dbff"/><stop offset=".294" stop-color="#ffb3fe"/><stop offset=".342" stop-color="#ff8fd6"/><stop offset=".399" stop-color="#ff6fb3"/><stop offset=".465" stop-color="#ff5496"/><stop offset=".541" stop-color="#ff3e7e"/><stop offset=".631" stop-color="#ff2a68"/><stop offset=".736" stop-color="#ff1a56"/><stop offset="1" stop-color="#ff0039"/></linearGradient>
<linearGradient id="r338" gradientUnits="userSpaceOnUse" x1="697.9" x2="863.0"><stop offset="0" stop-color="#00e6ff"/><stop offset=".012" stop-color="#02e4ff"/><stop offset=".088" stop-color="#40d6ff"/><stop offset=".302" stop-color="#ffadfd"/><stop offset=".350" stop-color="#ff8ad6"/><stop offset=".405" stop-color="#ff6db6"/><stop offset=".471" stop-color="#ff5298"/><stop offset=".547" stop-color="#ff3c80"/><stop offset=".637" stop-color="#ff296a"/><stop offset=".740" stop-color="#ff1958"/><stop offset="1" stop-color="#ff003b"/></linearGradient>
<linearGradient id="r339" gradientUnits="userSpaceOnUse" x1="698.1" x2="862.0"><stop offset="0" stop-color="#00e0ff"/><stop offset=".012" stop-color="#02deff"/><stop offset=".101" stop-color="#49cfff"/><stop offset=".308" stop-color="#ffa8fe"/><stop offset=".357" stop-color="#ff86d8"/><stop offset=".412" stop-color="#ff6ab7"/><stop offset=".476" stop-color="#ff519b"/><stop offset=".552" stop-color="#ff3b82"/><stop offset=".640" stop-color="#ff296d"/><stop offset=".744" stop-color="#ff185a"/><stop offset="1" stop-color="#ff003d"/></linearGradient>
<linearGradient id="r340" gradientUnits="userSpaceOnUse" x1="698.2" x2="861.0"><stop offset="0" stop-color="#00dbff"/><stop offset=".012" stop-color="#02d9ff"/><stop offset=".101" stop-color="#48caff"/><stop offset=".316" stop-color="#ffa1fe"/><stop offset=".365" stop-color="#ff81d8"/><stop offset=".420" stop-color="#ff66b8"/><stop offset=".485" stop-color="#ff4e9c"/><stop offset=".561" stop-color="#ff3983"/><stop offset=".748" stop-color="#ff185c"/><stop offset="1" stop-color="#ff003f"/></linearGradient>
<linearGradient id="r341" gradientUnits="userSpaceOnUse" x1="698.4" x2="860.0"><stop offset="0" stop-color="#00d6ff"/><stop offset=".012" stop-color="#02d4ff"/><stop offset=".099" stop-color="#44c5ff"/><stop offset=".324" stop-color="#ff9bfd"/><stop offset=".373" stop-color="#ff7cd8"/><stop offset=".429" stop-color="#ff62b8"/><stop offset=".494" stop-color="#ff4b9d"/><stop offset=".568" stop-color="#ff3785"/><stop offset=".753" stop-color="#ff175e"/><stop offset="1" stop-color="#ff0041"/></linearGradient>
<linearGradient id="r342" gradientUnits="userSpaceOnUse" x1="698.6" x2="859.0"><stop offset="0" stop-color="#00d1ff"/><stop offset=".012" stop-color="#02cfff"/><stop offset=".112" stop-color="#4dbeff"/><stop offset=".330" stop-color="#ff97fe"/><stop offset=".380" stop-color="#ff79d9"/><stop offset=".436" stop-color="#ff5fba"/><stop offset=".498" stop-color="#ff4a9f"/><stop offset=".573" stop-color="#ff3687"/><stop offset=".757" stop-color="#ff1760"/><stop offset="1" stop-color="#ff0043"/></linearGradient>
<linearGradient id="r343" gradientUnits="userSpaceOnUse" x1="698.7" x2="858.1"><stop offset="0" stop-color="#0cf"/><stop offset=".013" stop-color="#02caff"/><stop offset=".110" stop-color="#49baff"/><stop offset=".339" stop-color="#ff91fe"/><stop offset=".386" stop-color="#ff76db"/><stop offset=".442" stop-color="#ff5dbc"/><stop offset=".505" stop-color="#ff48a1"/><stop offset=".580" stop-color="#ff3589"/><stop offset=".762" stop-color="#ff1662"/><stop offset="1" stop-color="#ff0045"/></linearGradient>
<linearGradient id="r344" gradientUnits="userSpaceOnUse" x1="698.9" x2="857.1"><stop offset="0" stop-color="#00c7ff"/><stop offset=".013" stop-color="#02c5ff"/><stop offset=".110" stop-color="#48b6ff"/><stop offset=".347" stop-color="#ff8cfd"/><stop offset=".394" stop-color="#ff72db"/><stop offset=".451" stop-color="#ff59bc"/><stop offset=".514" stop-color="#ff45a2"/><stop offset=".587" stop-color="#ff338b"/><stop offset=".767" stop-color="#ff1565"/><stop offset="1" stop-color="#ff0048"/></linearGradient>
<linearGradient id="r345" gradientUnits="userSpaceOnUse" x1="699.0" x2="856.1"><stop offset="0" stop-color="#00c3ff"/><stop offset=".013" stop-color="#02c1ff"/><stop offset=".124" stop-color="#50afff"/><stop offset=".352" stop-color="#f8f"/><stop offset=".403" stop-color="#ff6ddc"/><stop offset=".457" stop-color="#ff57be"/><stop offset=".521" stop-color="#ff43a4"/><stop offset=".594" stop-color="#ff328d"/><stop offset=".771" stop-color="#ff1567"/><stop offset="1" stop-color="#ff004a"/></linearGradient>
<linearGradient id="r346" gradientUnits="userSpaceOnUse" x1="699.2" x2="855.1"><stop offset="0" stop-color="#00beff"/><stop offset=".013" stop-color="#02bcff"/><stop offset=".122" stop-color="#4dabff"/><stop offset=".362" stop-color="#ff83fe"/><stop offset=".410" stop-color="#ff6add"/><stop offset=".465" stop-color="#ff55c0"/><stop offset=".529" stop-color="#ff41a5"/><stop offset=".599" stop-color="#ff308f"/><stop offset=".772" stop-color="#ff1569"/><stop offset="1" stop-color="#ff004c"/></linearGradient>
<linearGradient id="r347" gradientUnits="userSpaceOnUse" x1="699.4" x2="854.1"><stop offset="0" stop-color="#00baff"/><stop offset=".013" stop-color="#02b8ff"/><stop offset=".119" stop-color="#49a8ff"/><stop offset=".371" stop-color="#ff7efd"/><stop offset=".419" stop-color="#f6d"/><stop offset=".474" stop-color="#ff51c0"/><stop offset=".606" stop-color="#ff2f91"/><stop offset=".777" stop-color="#ff146b"/><stop offset="1" stop-color="#ff004e"/></linearGradient>
<linearGradient id="r348" gradientUnits="userSpaceOnUse" x1="699.5" x2="853.2"><stop offset="0" stop-color="#00b6ff"/><stop offset=".013" stop-color="#02b4ff"/><stop offset=".136" stop-color="#53a1ff"/><stop offset=".377" stop-color="#ff7aff"/><stop offset=".425" stop-color="#ff64df"/><stop offset=".481" stop-color="#ff4fc2"/><stop offset=".614" stop-color="#ff2e92"/><stop offset=".782" stop-color="#ff136e"/><stop offset="1" stop-color="#ff0051"/></linearGradient>
<linearGradient id="r349" gradientUnits="userSpaceOnUse" x1="699.7" x2="852.2"><stop offset="0" stop-color="#00b2ff"/><stop offset=".013" stop-color="#02b0ff"/><stop offset=".131" stop-color="#4e9eff"/><stop offset=".387" stop-color="#ff75fe"/><stop offset=".436" stop-color="#ff5fde"/><stop offset=".489" stop-color="#ff4dc3"/><stop offset=".620" stop-color="#ff2c94"/><stop offset=".787" stop-color="#ff1370"/><stop offset="1" stop-color="#ff0053"/></linearGradient>
<linearGradient id="r350" gradientUnits="userSpaceOnUse" x1="699.9" x2="851.2"><stop offset="0" stop-color="#00aeff"/><stop offset=".013" stop-color="#02acff"/><stop offset=".132" stop-color="#4c9bff"/><stop offset=".396" stop-color="#ff71fe"/><stop offset=".446" stop-color="#ff5cde"/><stop offset=".498" stop-color="#ff4ac4"/><stop offset=".627" stop-color="#ff2b96"/><stop offset=".792" stop-color="#ff1272"/><stop offset="1" stop-color="#f05"/></linearGradient>
<linearGradient id="r351" gradientUnits="userSpaceOnUse" x1="700.0" x2="850.2"><stop offset="0" stop-color="#0af"/><stop offset=".013" stop-color="#02a8ff"/><stop offset=".146" stop-color="#5395ff"/><stop offset=".402" stop-color="#ff6eff"/><stop offset=".452" stop-color="#ff59e0"/><stop offset=".505" stop-color="#ff48c6"/><stop offset=".635" stop-color="#ff2a98"/><stop offset=".797" stop-color="#ff1274"/><stop offset="1" stop-color="#ff0058"/></linearGradient>
<linearGradient id="r352" gradientUnits="userSpaceOnUse" x1="700.2" x2="849.2"><stop offset="0" stop-color="#00a6ff"/><stop offset=".013" stop-color="#02a4ff"/><stop offset=".151" stop-color="#5491ff"/><stop offset=".411" stop-color="#ff6aff"/><stop offset=".458" stop-color="#ff57e2"/><stop offset=".512" stop-color="#ff46c7"/><stop offset=".639" stop-color="#ff299b"/><stop offset=".799" stop-color="#f17"/><stop offset="1" stop-color="#ff005a"/></linearGradient>
<linearGradient id="r353" gradientUnits="userSpaceOnUse" x1="700.3" x2="848.3"><stop offset="0" stop-color="#00a3ff"/><stop offset=".014" stop-color="#02a1ff"/><stop offset=".145" stop-color="#4f8fff"/><stop offset=".422" stop-color="#ff65fe"/><stop offset=".524" stop-color="#ff42c7"/><stop offset=".649" stop-color="#ff279c"/><stop offset=".804" stop-color="#ff1179"/><stop offset="1" stop-color="#ff005d"/></linearGradient>
<linearGradient id="r354" gradientUnits="userSpaceOnUse" x1="700.5" x2="847.3"><stop offset="0" stop-color="#009fff"/><stop offset=".014" stop-color="#029dff"/><stop offset=".160" stop-color="#568aff"/><stop offset=".429" stop-color="#ff62ff"/><stop offset=".531" stop-color="#ff41c9"/><stop offset=".653" stop-color="#ff269e"/><stop offset=".810" stop-color="#ff107b"/><stop offset="1" stop-color="#ff005f"/></linearGradient>
<linearGradient id="r355" gradientUnits="userSpaceOnUse" x1="700.7" x2="846.3"><stop offset="0" stop-color="#009cff"/><stop offset=".014" stop-color="#029aff"/><stop offset=".164" stop-color="#5786ff"/><stop offset=".438" stop-color="#ff5eff"/><stop offset=".538" stop-color="#ff3fcb"/><stop offset=".661" stop-color="#ff25a0"/><stop offset=".812" stop-color="#ff107e"/><stop offset="1" stop-color="#ff0062"/></linearGradient>
<linearGradient id="r356" gradientUnits="userSpaceOnUse" x1="700.8" x2="845.3"><stop offset="0" stop-color="#09f"/><stop offset=".014" stop-color="#0297ff"/><stop offset=".170" stop-color="#5882ff"/><stop offset=".446" stop-color="#fe5bff"/><stop offset=".547" stop-color="#ff3ccc"/><stop offset=".668" stop-color="#ff24a2"/><stop offset=".817" stop-color="#ff0f80"/><stop offset="1" stop-color="#ff0064"/></linearGradient>
<linearGradient id="r357" gradientUnits="userSpaceOnUse" x1="701.0" x2="844.3"><stop offset="0" stop-color="#0095ff"/><stop offset=".014" stop-color="#0294ff"/><stop offset=".174" stop-color="#587fff"/><stop offset=".456" stop-color="#ff57ff"/><stop offset=".557" stop-color="#ff3acc"/><stop offset=".676" stop-color="#ff22a4"/><stop offset=".822" stop-color="#ff0f82"/><stop offset="1" stop-color="#ff0067"/></linearGradient>
<linearGradient id="r358" gradientUnits="userSpaceOnUse" x1="701.2" x2="843.4"><stop offset="0" stop-color="#0092ff"/><stop offset=".014" stop-color="#0290ff"/><stop offset=".179" stop-color="#597cff"/><stop offset=".467" stop-color="#ff54ff"/><stop offset=".565" stop-color="#ff38ce"/><stop offset=".681" stop-color="#ff22a6"/><stop offset=".825" stop-color="#ff0f85"/><stop offset="1" stop-color="#ff006a"/></linearGradient>
<linearGradient id="r359" gradientUnits="userSpaceOnUse" x1="701.3" x2="842.4"><stop offset="0" stop-color="#008fff"/><stop offset=".014" stop-color="#018dff"/><stop offset=".180" stop-color="#5879ff"/><stop offset=".477" stop-color="#ff50ff"/><stop offset=".572" stop-color="#ff36d0"/><stop offset=".689" stop-color="#ff20a8"/><stop offset=".830" stop-color="#ff0e87"/><stop offset="1" stop-color="#ff006c"/></linearGradient>
<linearGradient id="r360" gradientUnits="userSpaceOnUse" x1="701.5" x2="841.4"><stop offset="0" stop-color="#008cff"/><stop offset=".014" stop-color="#018aff"/><stop offset=".186" stop-color="#5975ff"/><stop offset=".486" stop-color="#ff4dff"/><stop offset=".582" stop-color="#ff34d0"/><stop offset=".696" stop-color="#ff1faa"/><stop offset=".836" stop-color="#ff0d8a"/><stop offset="1" stop-color="#ff006f"/></linearGradient>
<linearGradient id="r361" gradientUnits="userSpaceOnUse" x1="701.6" x2="840.4"><stop offset="0" stop-color="#0089ff"/><stop offset=".014" stop-color="#0188ff"/><stop offset=".191" stop-color="#5972ff"/><stop offset=".496" stop-color="#ff4aff"/><stop offset=".590" stop-color="#ff32d2"/><stop offset=".705" stop-color="#ff1eac"/><stop offset=".838" stop-color="#ff0d8c"/><stop offset="1" stop-color="#ff0072"/></linearGradient>
<linearGradient id="r362" gradientUnits="userSpaceOnUse" x1="701.8" x2="839.5"><stop offset="0" stop-color="#0086ff"/><stop offset=".014" stop-color="#0185ff"/><stop offset=".192" stop-color="#5870ff"/><stop offset=".507" stop-color="#ff47ff"/><stop offset=".601" stop-color="#ff30d2"/><stop offset=".710" stop-color="#ff1dae"/><stop offset=".844" stop-color="#ff0c8f"/><stop offset="1" stop-color="#ff0075"/></linearGradient>
<linearGradient id="r363" gradientUnits="userSpaceOnUse" x1="702.0" x2="838.5"><stop offset="0" stop-color="#0084ff"/><stop offset=".015" stop-color="#0182ff"/><stop offset=".193" stop-color="#576dff"/><stop offset=".518" stop-color="#ff44fe"/><stop offset=".609" stop-color="#ff2ed4"/><stop offset=".719" stop-color="#ff1cb0"/><stop offset=".847" stop-color="#ff0c92"/><stop offset="1" stop-color="#ff0078"/></linearGradient>
<linearGradient id="r364" gradientUnits="userSpaceOnUse" x1="702.1" x2="837.5"><stop offset="0" stop-color="#0081ff"/><stop offset=".015" stop-color="#017fff"/><stop offset=".207" stop-color="#5b69ff"/><stop offset=".528" stop-color="#ff41ff"/><stop offset=".620" stop-color="#ff2cd5"/><stop offset=".727" stop-color="#ff1bb2"/><stop offset=".852" stop-color="#ff0c94"/><stop offset="1" stop-color="#ff007b"/></linearGradient>
<linearGradient id="r365" gradientUnits="userSpaceOnUse" x1="702.3" x2="836.5"><stop offset="0" stop-color="#007eff"/><stop offset=".015" stop-color="#017dff"/><stop offset=".208" stop-color="#5a67ff"/><stop offset=".539" stop-color="#ff3eff"/><stop offset=".628" stop-color="#ff2bd7"/><stop offset=".732" stop-color="#ff1ab4"/><stop offset=".855" stop-color="#ff0b97"/><stop offset="1" stop-color="#ff007e"/></linearGradient>
<linearGradient id="r366" gradientUnits="userSpaceOnUse" x1="702.4" x2="835.5"><stop offset="0" stop-color="#007cff"/><stop offset=".015" stop-color="#017aff"/><stop offset=".210" stop-color="#5965ff"/><stop offset=".551" stop-color="#ff3bfe"/><stop offset=".640" stop-color="#ff28d7"/><stop offset=".742" stop-color="#ff19b6"/><stop offset=".861" stop-color="#ff0b99"/><stop offset="1" stop-color="#ff0081"/></linearGradient>
<linearGradient id="r367" gradientUnits="userSpaceOnUse" x1="702.6" x2="834.6"><stop offset="0" stop-color="#0079ff"/><stop offset=".015" stop-color="#0178ff"/><stop offset=".220" stop-color="#5c61ff"/><stop offset=".561" stop-color="#ff39ff"/><stop offset=".648" stop-color="#ff27d9"/><stop offset=".750" stop-color="#ff17b8"/><stop offset=".867" stop-color="#ff0a9c"/><stop offset="1" stop-color="#ff0084"/></linearGradient>
<linearGradient id="r368" gradientUnits="userSpaceOnUse" x1="702.8" x2="833.6"><stop offset="0" stop-color="#07f"/><stop offset=".015" stop-color="#0175ff"/><stop offset=".221" stop-color="#5a5fff"/><stop offset=".573" stop-color="#ff36ff"/><stop offset=".656" stop-color="#ff25db"/><stop offset=".756" stop-color="#ff17ba"/><stop offset=".870" stop-color="#ff0a9f"/><stop offset="1" stop-color="#ff0087"/></linearGradient>
<linearGradient id="r369" gradientUnits="userSpaceOnUse" x1="702.9" x2="832.6"><stop offset="0" stop-color="#0074ff"/><stop offset=".015" stop-color="#0173ff"/><stop offset=".223" stop-color="#595dff"/><stop offset=".585" stop-color="#ff33fe"/><stop offset=".669" stop-color="#ff23db"/><stop offset=".765" stop-color="#ff15bc"/><stop offset=".873" stop-color="#ff0aa2"/><stop offset="1" stop-color="#ff008a"/></linearGradient>
<linearGradient id="r370" gradientUnits="userSpaceOnUse" x1="703.1" x2="831.6"><stop offset="0" stop-color="#0072ff"/><stop offset=".016" stop-color="#0171ff"/><stop offset=".225" stop-color="#585bff"/><stop offset=".597" stop-color="#ff31fe"/><stop offset=".678" stop-color="#ff22dc"/><stop offset=".771" stop-color="#ff15bf"/><stop offset=".880" stop-color="#ff09a4"/><stop offset="1" stop-color="#ff008d"/></linearGradient>
<linearGradient id="r371" gradientUnits="userSpaceOnUse" x1="703.3" x2="830.6"><stop offset="0" stop-color="#0070ff"/><stop offset=".016" stop-color="#016eff"/><stop offset=".239" stop-color="#5c57ff"/><stop offset=".608" stop-color="#ff2fff"/><stop offset=".690" stop-color="#ff20dd"/><stop offset=".780" stop-color="#ff14c0"/><stop offset="1" stop-color="#ff0091"/></linearGradient>
<linearGradient id="r372" gradientUnits="userSpaceOnUse" x1="703.4" x2="829.7"><stop offset="0" stop-color="#006eff"/><stop offset=".016" stop-color="#016cff"/><stop offset=".241" stop-color="#5b55ff"/><stop offset=".621" stop-color="#ff2cfe"/><stop offset=".700" stop-color="#ff1edf"/><stop offset=".787" stop-color="#ff13c3"/><stop offset="1" stop-color="#ff0094"/></linearGradient>
<linearGradient id="r373" gradientUnits="userSpaceOnUse" x1="703.6" x2="828.7"><stop offset="0" stop-color="#006bff"/><stop offset=".016" stop-color="#016aff"/><stop offset=".251" stop-color="#5d53ff"/><stop offset=".629" stop-color="#fe2aff"/><stop offset=".713" stop-color="#ff1cdf"/><stop offset=".797" stop-color="#ff12c5"/><stop offset="1" stop-color="#ff0098"/></linearGradient>
<linearGradient id="r374" gradientUnits="userSpaceOnUse" x1="703.7" x2="827.7"><stop offset="0" stop-color="#0069ff"/><stop offset=".016" stop-color="#0168ff"/><stop offset=".254" stop-color="#5c51ff"/><stop offset=".645" stop-color="#ff27ff"/><stop offset=".718" stop-color="#ff1ce2"/><stop offset=".802" stop-color="#ff11c7"/><stop offset="1" stop-color="#ff009b"/></linearGradient>
<linearGradient id="r375" gradientUnits="userSpaceOnUse" x1="703.9" x2="826.7"><stop offset="0" stop-color="#0067ff"/><stop offset=".016" stop-color="#0166ff"/><stop offset=".256" stop-color="#5b4fff"/><stop offset=".659" stop-color="#ff25fe"/><stop offset=".813" stop-color="#ff10c9"/><stop offset="1" stop-color="#ff009f"/></linearGradient>
<linearGradient id="r376" gradientUnits="userSpaceOnUse" x1="704.1" x2="825.7"><stop offset="0" stop-color="#0065ff"/><stop offset=".016" stop-color="#0164ff"/><stop offset=".270" stop-color="#5f4cff"/><stop offset=".668" stop-color="#fe23ff"/><stop offset=".820" stop-color="#ff0fcc"/><stop offset="1" stop-color="#ff00a2"/></linearGradient>
<linearGradient id="r377" gradientUnits="userSpaceOnUse" x1="704.2" x2="824.8"><stop offset="0" stop-color="#0063ff"/><stop offset=".017" stop-color="#0162ff"/><stop offset=".277" stop-color="#5f4aff"/><stop offset=".682" stop-color="#fe21ff"/><stop offset=".831" stop-color="#ff0ecd"/><stop offset="1" stop-color="#ff00a6"/></linearGradient>
<linearGradient id="r378" gradientUnits="userSpaceOnUse" x1="704.4" x2="823.8"><stop offset="0" stop-color="#0061ff"/><stop offset=".017" stop-color="#0160ff"/><stop offset=".280" stop-color="#5f48ff"/><stop offset=".695" stop-color="#fe1fff"/><stop offset=".837" stop-color="#ff0dd0"/><stop offset="1" stop-color="#f0a"/></linearGradient>
<linearGradient id="r379" gradientUnits="userSpaceOnUse" x1="704.6" x2="822.8"><stop offset="0" stop-color="#005fff"/><stop offset=".017" stop-color="#015eff"/><stop offset=".287" stop-color="#5f46ff"/><stop offset=".709" stop-color="#fe1dff"/><stop offset=".848" stop-color="#ff0cd1"/><stop offset="1" stop-color="#ff00ae"/></linearGradient>
<linearGradient id="r380" gradientUnits="userSpaceOnUse" x1="704.7" x2="821.8"><stop offset="0" stop-color="#005dff"/><stop offset=".017" stop-color="#015cff"/><stop offset=".294" stop-color="#5f44ff"/><stop offset=".723" stop-color="#fe1bff"/><stop offset=".855" stop-color="#ff0bd4"/><stop offset="1" stop-color="#ff00b2"/></linearGradient>
<linearGradient id="r381" gradientUnits="userSpaceOnUse" x1="704.9" x2="820.8"><stop offset="0" stop-color="#005cff"/><stop offset=".017" stop-color="#015aff"/><stop offset=".302" stop-color="#6042ff"/><stop offset=".737" stop-color="#fe19ff"/><stop offset=".862" stop-color="#ff0ad7"/><stop offset="1" stop-color="#ff00b6"/></linearGradient>
<linearGradient id="r382" gradientUnits="userSpaceOnUse" x1="705.0" x2="819.9"><stop offset="0" stop-color="#005aff"/><stop offset=".017" stop-color="#0158ff"/><stop offset=".309" stop-color="#6140ff"/><stop offset=".752" stop-color="#fe17ff"/><stop offset=".874" stop-color="#ff09d8"/><stop offset="1" stop-color="#ff00ba"/></linearGradient>
<linearGradient id="r383" gradientUnits="userSpaceOnUse" x1="705.2" x2="818.9"><stop offset="0" stop-color="#0058ff"/><stop offset=".018" stop-color="#0157ff"/><stop offset=".316" stop-color="#613eff"/><stop offset=".768" stop-color="#fe15ff"/><stop offset=".882" stop-color="#ff09db"/><stop offset="1" stop-color="#ff00be"/></linearGradient>
<linearGradient id="r384" gradientUnits="userSpaceOnUse" x1="705.4" x2="817.9"><stop offset="0" stop-color="#0056ff"/><stop offset=".018" stop-color="#0155ff"/><stop offset=".323" stop-color="#613cff"/><stop offset=".783" stop-color="#ff13ff"/><stop offset=".889" stop-color="#ff08de"/><stop offset="1" stop-color="#ff00c2"/></linearGradient>
<linearGradient id="r385" gradientUnits="userSpaceOnUse" x1="705.5" x2="816.9"><stop offset="0" stop-color="#0054ff"/><stop offset=".018" stop-color="#0153ff"/><stop offset=".332" stop-color="#623aff"/><stop offset=".798" stop-color="#fe11ff"/><stop offset="1" stop-color="#ff00c7"/></linearGradient>
<linearGradient id="r386" gradientUnits="userSpaceOnUse" x1="705.7" x2="815.9"><stop offset="0" stop-color="#0053ff"/><stop offset=".018" stop-color="#0151ff"/><stop offset=".339" stop-color="#6238ff"/><stop offset=".814" stop-color="#fe0fff"/><stop offset="1" stop-color="#ff00cb"/></linearGradient>
<linearGradient id="r387" gradientUnits="userSpaceOnUse" x1="705.8" x2="815.0"><stop offset="0" stop-color="#0051ff"/><stop offset=".018" stop-color="#0150ff"/><stop offset=".347" stop-color="#6336ff"/><stop offset=".831" stop-color="#ff0eff"/><stop offset="1" stop-color="#ff00d0"/></linearGradient>
<linearGradient id="r388" gradientUnits="userSpaceOnUse" x1="706.0" x2="814.0"><stop offset="0" stop-color="#0050ff"/><stop offset=".019" stop-color="#014eff"/><stop offset=".352" stop-color="#6235ff"/><stop offset=".847" stop-color="#fe0cff"/><stop offset="1" stop-color="#ff00d4"/></linearGradient>
<linearGradient id="r389" gradientUnits="userSpaceOnUse" x1="706.2" x2="813.0"><stop offset="0" stop-color="#004eff"/><stop offset=".019" stop-color="#014dff"/><stop offset=".360" stop-color="#6233ff"/><stop offset=".864" stop-color="#ff0aff"/><stop offset="1" stop-color="#ff00d9"/></linearGradient>
<linearGradient id="r390" gradientUnits="userSpaceOnUse" x1="706.3" x2="812.0"><stop offset="0" stop-color="#004cff"/><stop offset=".019" stop-color="#014bff"/><stop offset=".368" stop-color="#6331ff"/><stop offset=".882" stop-color="#ff08ff"/><stop offset="1" stop-color="#ff00de"/></linearGradient>
<linearGradient id="r391" gradientUnits="userSpaceOnUse" x1="706.5" x2="811.0"><stop offset="0" stop-color="#004bff"/><stop offset=".019" stop-color="#014aff"/><stop offset=".376" stop-color="#6330ff"/><stop offset=".900" stop-color="#ff07ff"/><stop offset="1" stop-color="#ff00e3"/></linearGradient>
<linearGradient id="r392" gradientUnits="userSpaceOnUse" x1="706.7" x2="810.1"><stop offset="0" stop-color="#0049ff"/><stop offset=".019" stop-color="#0148ff"/><stop offset=".386" stop-color="#642eff"/><stop offset=".918" stop-color="#ff05ff"/><stop offset="1" stop-color="#ff00e8"/></linearGradient>
<linearGradient id="r393" gradientUnits="userSpaceOnUse" x1="706.8" x2="809.1"><stop offset="0" stop-color="#0048ff"/><stop offset=".020" stop-color="#0147ff"/><stop offset=".395" stop-color="#642cff"/><stop offset=".937" stop-color="#ff04ff"/><stop offset="1" stop-color="#ff00ed"/></linearGradient>
<linearGradient id="r394" gradientUnits="userSpaceOnUse" x1="707.0" x2="808.1"><stop offset="0" stop-color="#0046ff"/><stop offset=".020" stop-color="#0145ff"/><stop offset=".404" stop-color="#642bff"/><stop offset=".956" stop-color="#ff02ff"/><stop offset="1" stop-color="#ff00f3"/></linearGradient>
<linearGradient id="r395" gradientUnits="userSpaceOnUse" x1="707.1" x2="807.1"><stop offset="0" stop-color="#0045ff"/><stop offset=".020" stop-color="#0144ff"/><stop offset=".410" stop-color="#642aff"/><stop offset=".975" stop-color="#f0f"/><stop offset="1" stop-color="#ff00f8"/></linearGradient>
<linearGradient id="r396" gradientUnits="userSpaceOnUse" x1="707.3" x2="806.2"><stop offset="0" stop-color="#04f"/><stop offset=".020" stop-color="#0142ff"/><stop offset=".394" stop-color="#5d2aff"/><stop offset="1" stop-color="#ff00fe"/></linearGradient>
<linearGradient id="r397" gradientUnits="userSpaceOnUse" x1="707.5" x2="805.2"><stop offset="0" stop-color="#0042ff"/><stop offset=".020" stop-color="#0141ff"/><stop offset=".418" stop-color="#6227ff"/><stop offset="1" stop-color="#fb00ff"/></linearGradient>
<linearGradient id="r398" gradientUnits="userSpaceOnUse" x1="707.6" x2="804.2"><stop offset="0" stop-color="#0041ff"/><stop offset=".021" stop-color="#0140ff"/><stop offset=".418" stop-color="#5f27ff"/><stop offset="1" stop-color="#f500ff"/></linearGradient>
<linearGradient id="r399" gradientUnits="userSpaceOnUse" x1="707.8" x2="803.2"><stop offset="0" stop-color="#0040ff"/><stop offset=".021" stop-color="#013eff"/><stop offset=".414" stop-color="#5c26ff"/><stop offset="1" stop-color="#f000ff"/></linearGradient>
<linearGradient id="r400" gradientUnits="userSpaceOnUse" x1="708.0" x2="802.2"><stop offset="0" stop-color="#003eff"/><stop offset=".021" stop-color="#013dff"/><stop offset=".407" stop-color="#5926ff"/><stop offset="1" stop-color="#ea00ff"/></linearGradient>
<linearGradient id="r401" gradientUnits="userSpaceOnUse" x1="708.1" x2="801.3"><stop offset="0" stop-color="#003dff"/><stop offset=".021" stop-color="#013cff"/><stop offset=".406" stop-color="#5725ff"/><stop offset="1" stop-color="#e500ff"/></linearGradient>
<linearGradient id="r402" gradientUnits="userSpaceOnUse" x1="708.3" x2="800.3"><stop offset="0" stop-color="#003cff"/><stop offset=".022" stop-color="#013bff"/><stop offset=".402" stop-color="#5424ff"/><stop offset="1" stop-color="#e000ff"/></linearGradient>
<linearGradient id="r403" gradientUnits="userSpaceOnUse" x1="708.4" x2="799.3"><stop offset="0" stop-color="#003aff"/><stop offset=".022" stop-color="#0139ff"/><stop offset=".396" stop-color="#5124ff"/><stop offset="1" stop-color="#db00ff"/></linearGradient>
<linearGradient id="r404" gradientUnits="userSpaceOnUse" x1="708.6" x2="798.3"><stop offset="0" stop-color="#0039ff"/><stop offset=".022" stop-color="#0138ff"/><stop offset=".394" stop-color="#4f23ff"/><stop offset="1" stop-color="#d600ff"/></linearGradient>
<linearGradient id="r405" gradientUnits="userSpaceOnUse" x1="708.8" x2="797.3"><stop offset="0" stop-color="#0038ff"/><stop offset=".022" stop-color="#0137ff"/><stop offset=".388" stop-color="#4b23ff"/><stop offset="1" stop-color="#d100ff"/></linearGradient>
<linearGradient id="r406" gradientUnits="userSpaceOnUse" x1="708.9" x2="796.4"><stop offset="0" stop-color="#0037ff"/><stop offset=".023" stop-color="#0136ff"/><stop offset=".383" stop-color="#4922ff"/><stop offset="1" stop-color="#cd00ff"/></linearGradient>
<linearGradient id="r407" gradientUnits="userSpaceOnUse" x1="709.1" x2="795.4"><stop offset="0" stop-color="#0036ff"/><stop offset=".023" stop-color="#0135ff"/><stop offset=".382" stop-color="#4722ff"/><stop offset="1" stop-color="#c800ff"/></linearGradient>
<linearGradient id="r408" gradientUnits="userSpaceOnUse" x1="709.2" x2="794.4"><stop offset="0" stop-color="#0035ff"/><stop offset=".023" stop-color="#0133ff"/><stop offset=".374" stop-color="#4421ff"/><stop offset="1" stop-color="#c400ff"/></linearGradient>
<linearGradient id="r409" gradientUnits="userSpaceOnUse" x1="709.4" x2="793.4"><stop offset="0" stop-color="#03f"/><stop offset=".024" stop-color="#0132ff"/><stop offset=".367" stop-color="#4121ff"/><stop offset="1" stop-color="#bf00ff"/></linearGradient>
<linearGradient id="r410" gradientUnits="userSpaceOnUse" x1="709.6" x2="792.4"><stop offset="0" stop-color="#0032ff"/><stop offset=".024" stop-color="#0131ff"/><stop offset=".361" stop-color="#3f20ff"/><stop offset="1" stop-color="#b0f"/></linearGradient>
<linearGradient id="r411" gradientUnits="userSpaceOnUse" x1="709.7" x2="791.5"><stop offset="0" stop-color="#0031ff"/><stop offset=".024" stop-color="#0130ff"/><stop offset=".360" stop-color="#3d20ff"/><stop offset="1" stop-color="#b600ff"/></linearGradient>
<linearGradient id="r412" gradientUnits="userSpaceOnUse" x1="709.9" x2="790.5"><stop offset="0" stop-color="#0030ff"/><stop offset=".025" stop-color="#012fff"/><stop offset=".352" stop-color="#3a1fff"/><stop offset="1" stop-color="#b200ff"/></linearGradient>
<linearGradient id="r413" gradientUnits="userSpaceOnUse" x1="710.1" x2="789.5"><stop offset="0" stop-color="#002fff"/><stop offset=".025" stop-color="#012eff"/><stop offset=".346" stop-color="#381fff"/><stop offset="1" stop-color="#ae00ff"/></linearGradient>
<linearGradient id="r414" gradientUnits="userSpaceOnUse" x1="710.2" x2="788.5"><stop offset="0" stop-color="#002eff"/><stop offset=".025" stop-color="#012dff"/><stop offset=".338" stop-color="#351fff"/><stop offset="1" stop-color="#a0f"/></linearGradient>
<linearGradient id="r415" gradientUnits="userSpaceOnUse" x1="710.4" x2="787.5"><stop offset="0" stop-color="#002dff"/><stop offset=".026" stop-color="#012cff"/><stop offset=".335" stop-color="#331eff"/><stop offset="1" stop-color="#a600ff"/></linearGradient>
<linearGradient id="r416" gradientUnits="userSpaceOnUse" x1="710.5" x2="786.6"><stop offset="0" stop-color="#002cff"/><stop offset=".026" stop-color="#012bff"/><stop offset=".327" stop-color="#311eff"/><stop offset="1" stop-color="#a200ff"/></linearGradient>
<linearGradient id="r417" gradientUnits="userSpaceOnUse" x1="710.7" x2="785.6"><stop offset="0" stop-color="#002bff"/><stop offset=".027" stop-color="#012aff"/><stop offset=".320" stop-color="#2f1dff"/><stop offset="1" stop-color="#9e00ff"/></linearGradient>
<linearGradient id="r418" gradientUnits="userSpaceOnUse" x1="710.9" x2="784.6"><stop offset="0" stop-color="#002aff"/><stop offset=".311" stop-color="#2c1dff"/><stop offset="1" stop-color="#9a00ff"/></linearGradient>
<linearGradient id="r419" gradientUnits="userSpaceOnUse" x1="711.0" x2="783.6"><stop offset="0" stop-color="#0029ff"/><stop offset=".301" stop-color="#2a1dff"/><stop offset="1" stop-color="#9700ff"/></linearGradient>
<linearGradient id="r420" gradientUnits="userSpaceOnUse" x1="711.2" x2="782.6"><stop offset="0" stop-color="#0028ff"/><stop offset=".294" stop-color="#271cff"/><stop offset="1" stop-color="#9300ff"/></linearGradient>
<linearGradient id="r421" gradientUnits="userSpaceOnUse" x1="711.4" x2="781.7"><stop offset="0" stop-color="#0027ff"/><stop offset=".284" stop-color="#251cff"/><stop offset="1" stop-color="#8f00ff"/></linearGradient>
<linearGradient id="r422" gradientUnits="userSpaceOnUse" x1="711.5" x2="780.7"><stop offset="0" stop-color="#0026ff"/><stop offset=".273" stop-color="#231cff"/><stop offset="1" stop-color="#8c00ff"/></linearGradient>
<linearGradient id="r423" gradientUnits="userSpaceOnUse" x1="711.7" x2="779.7"><stop offset="0" stop-color="#0025ff"/><stop offset=".263" stop-color="#201cff"/><stop offset="1" stop-color="#80f"/></linearGradient>
<linearGradient id="r424" gradientUnits="userSpaceOnUse" x1="711.8" x2="778.7"><stop offset="0" stop-color="#0024ff"/><stop offset=".254" stop-color="#1e1bff"/><stop offset="1" stop-color="#8500ff"/></linearGradient>
<linearGradient id="r425" gradientUnits="userSpaceOnUse" x1="712.0" x2="777.8"><stop offset="0" stop-color="#0024ff"/><stop offset=".242" stop-color="#1c1bff"/><stop offset="1" stop-color="#8200ff"/></linearGradient>
<linearGradient id="r426" gradientUnits="userSpaceOnUse" x1="712.2" x2="776.8"><stop offset="0" stop-color="#0023ff"/><stop offset=".231" stop-color="#1a1bff"/><stop offset="1" stop-color="#7e00ff"/></linearGradient>
<linearGradient id="r427" gradientUnits="userSpaceOnUse" x1="712.3" x2="775.8"><stop offset="0" stop-color="#02f"/><stop offset=".220" stop-color="#181aff"/><stop offset="1" stop-color="#7b00ff"/></linearGradient>
<linearGradient id="r428" gradientUnits="userSpaceOnUse" x1="712.5" x2="774.8"><stop offset="0" stop-color="#0021ff"/><stop offset=".200" stop-color="#151aff"/><stop offset="1" stop-color="#7800ff"/></linearGradient>
<linearGradient id="r429" gradientUnits="userSpaceOnUse" x1="712.6" x2="773.8"><stop offset="0" stop-color="#0020ff"/><stop offset=".187" stop-color="#131aff"/><stop offset="1" stop-color="#7500ff"/></linearGradient>
<linearGradient id="r430" gradientUnits="userSpaceOnUse" x1="712.8" x2="772.9"><stop offset="0" stop-color="#001fff"/><stop offset=".174" stop-color="#111aff"/><stop offset="1" stop-color="#7200ff"/></linearGradient>
<linearGradient id="r431" gradientUnits="userSpaceOnUse" x1="713.0" x2="771.9"><stop offset="0" stop-color="#001eff"/><stop offset=".161" stop-color="#0f1aff"/><stop offset="1" stop-color="#6e00ff"/></linearGradient>
<linearGradient id="r432" gradientUnits="userSpaceOnUse" x1="713.1" x2="770.9"><stop offset="0" stop-color="#001eff"/><stop offset="1" stop-color="#6b00ff"/></linearGradient>
<linearGradient id="r433" gradientUnits="userSpaceOnUse" x1="713.3" x2="769.9"><stop offset="0" stop-color="#001dff"/><stop offset="1" stop-color="#6800ff"/></linearGradient>
<linearGradient id="r434" gradientUnits="userSpaceOnUse" x1="713.5" x2="768.9"><stop offset="0" stop-color="#001cff"/><stop offset="1" stop-color="#60f"/></linearGradient>
<linearGradient id="r435" gradientUnits="userSpaceOnUse" x1="713.6" x2="768.0"><stop offset="0" stop-color="#001bff"/><stop offset="1" stop-color="#6300ff"/></linearGradient>
<linearGradient id="r436" gradientUnits="userSpaceOnUse" x1="713.8" x2="767.0"><stop offset="0" stop-color="#001bff"/><stop offset="1" stop-color="#6000ff"/></linearGradient>
<linearGradient id="r437" gradientUnits="userSpaceOnUse" x1="713.9" x2="766.0"><stop offset="0" stop-color="#001aff"/><stop offset="1" stop-color="#5d00ff"/></linearGradient>
<linearGradient id="r438" gradientUnits="userSpaceOnUse" x1="714.1" x2="765.0"><stop offset="0" stop-color="#0019ff"/><stop offset="1" stop-color="#5a00ff"/></linearGradient>
<linearGradient id="r439" gradientUnits="userSpaceOnUse" x1="714.3" x2="764.0"><stop offset="0" stop-color="#0018ff"/><stop offset="1" stop-color="#5800ff"/></linearGradient>
<linearGradient id="r440" gradientUnits="userSpaceOnUse" x1="714.4" x2="763.1"><stop offset="0" stop-color="#0018ff"/><stop offset="1" stop-color="#50f"/></linearGradient>
<linearGradient id="r441" gradientUnits="userSpaceOnUse" x1="714.6" x2="762.1"><stop offset="0" stop-color="#0017ff"/><stop offset="1" stop-color="#5200ff"/></linearGradient>
<linearGradient id="r442" gradientUnits="userSpaceOnUse" x1="714.8" x2="761.1"><stop offset="0" stop-color="#0016ff"/><stop offset="1" stop-color="#5000ff"/></linearGradient>
<linearGradient id="r443" gradientUnits="userSpaceOnUse" x1="714.9" x2="760.1"><stop offset="0" stop-color="#0015ff"/><stop offset="1" stop-color="#4d00ff"/></linearGradient>
<linearGradient id="r444" gradientUnits="userSpaceOnUse" x1="715.1" x2="759.1"><stop offset="0" stop-color="#0015ff"/><stop offset="1" stop-color="#4a00ff"/></linearGradient>
<linearGradient id="r445" gradientUnits="userSpaceOnUse" x1="715.2" x2="758.2"><stop offset="0" stop-color="#0014ff"/><stop offset="1" stop-color="#4800ff"/></linearGradient>
<linearGradient id="r446" gradientUnits="userSpaceOnUse" x1="715.4" x2="757.2"><stop offset="0" stop-color="#0013ff"/><stop offset="1" stop-color="#4500ff"/></linearGradient>
<linearGradient id="r447" gradientUnits="userSpaceOnUse" x1="715.6" x2="756.2"><stop offset="0" stop-color="#0013ff"/><stop offset="1" stop-color="#4300ff"/></linearGradient>
<linearGradient id="r448" gradientUnits="userSpaceOnUse" x1="715.7" x2="755.2"><stop offset="0" stop-color="#0012ff"/><stop offset="1" stop-color="#4100ff"/></linearGradient>
<linearGradient id="r449" gradientUnits="userSpaceOnUse" x1="715.9" x2="754.2"><stop offset="0" stop-color="#01f"/><stop offset="1" stop-color="#3e00ff"/></linearGradient>
<linearGradient id="r450" gradientUnits="userSpaceOnUse" x1="716.0" x2="753.3"><stop offset="0" stop-color="#01f"/><stop offset="1" stop-color="#3c00ff"/></linearGradient>
<linearGradient id="r451" gradientUnits="userSpaceOnUse" x1="716.2" x2="752.3"><stop offset="0" stop-color="#0010ff"/><stop offset="1" stop-color="#3a00ff"/></linearGradient>
<linearGradient id="r452" gradientUnits="userSpaceOnUse" x1="716.4" x2="751.3"><stop offset="0" stop-color="#000fff"/><stop offset="1" stop-color="#3700ff"/></linearGradient>
<linearGradient id="r453" gradientUnits="userSpaceOnUse" x1="716.5" x2="750.3"><stop offset="0" stop-color="#000fff"/><stop offset="1" stop-color="#3500ff"/></linearGradient>
<linearGradient id="r454" gradientUnits="userSpaceOnUse" x1="716.7" x2="749.3"><stop offset="0" stop-color="#000eff"/><stop offset="1" stop-color="#30f"/></linearGradient>
<linearGradient id="r455" gradientUnits="userSpaceOnUse" x1="716.9" x2="748.4"><stop offset="0" stop-color="#000eff"/><stop offset="1" stop-color="#3100ff"/></linearGradient>
<linearGradient id="r456" gradientUnits="userSpaceOnUse" x1="717.0" x2="747.4"><stop offset="0" stop-color="#000dff"/><stop offset="1" stop-color="#2f00ff"/></linearGradient>
<linearGradient id="r457" gradientUnits="userSpaceOnUse" x1="717.2" x2="746.4"><stop offset="0" stop-color="#000cff"/><stop offset="1" stop-color="#2c00ff"/></linearGradient>
<linearGradient id="r458" gradientUnits="userSpaceOnUse" x1="717.3" x2="745.4"><stop offset="0" stop-color="#000cff"/><stop offset="1" stop-color="#2a00ff"/></linearGradient>
<linearGradient id="r459" gradientUnits="userSpaceOnUse" x1="717.5" x2="744.5"><stop offset="0" stop-color="#000bff"/><stop offset="1" stop-color="#2800ff"/></linearGradient>
<linearGradient id="r460" gradientUnits="userSpaceOnUse" x1="717.7" x2="743.5"><stop offset="0" stop-color="#000bff"/><stop offset="1" stop-color="#2600ff"/></linearGradient>
<linearGradient id="r461" gradientUnits="userSpaceOnUse" x1="717.8" x2="742.5"><stop offset="0" stop-color="#000aff"/><stop offset="1" stop-color="#2400ff"/></linearGradient>
<linearGradient id="r462" gradientUnits="userSpaceOnUse" x1="718.0" x2="741.5"><stop offset="0" stop-color="#000aff"/><stop offset="1" stop-color="#20f"/></linearGradient>
<linearGradient id="r463" gradientUnits="userSpaceOnUse" x1="718.2" x2="740.5"><stop offset="0" stop-color="#0009ff"/><stop offset="1" stop-color="#2000ff"/></linearGradient>
<linearGradient id="r464" gradientUnits="userSpaceOnUse" x1="718.3" x2="739.6"><stop offset="0" stop-color="#0008ff"/><stop offset="1" stop-color="#1e00ff"/></linearGradient>
<linearGradient id="r465" gradientUnits="userSpaceOnUse" x1="718.5" x2="738.6"><stop offset="0" stop-color="#0008ff"/><stop offset="1" stop-color="#1c00ff"/></linearGradient>
<linearGradient id="r466" gradientUnits="userSpaceOnUse" x1="718.6" x2="737.6"><stop offset="0" stop-color="#0007ff"/><stop offset="1" stop-color="#1a00ff"/></linearGradient>
<linearGradient id="r467" gradientUnits="userSpaceOnUse" x1="718.8" x2="736.6"><stop offset="0" stop-color="#0007ff"/><stop offset="1" stop-color="#1900ff"/></linearGradient>
<linearGradient id="r468" gradientUnits="userSpaceOnUse" x1="719.0" x2="735.6"><stop offset="0" stop-color="#0006ff"/><stop offset="1" stop-color="#1700ff"/></linearGradient>
<linearGradient id="r469" gradientUnits="userSpaceOnUse" x1="719.1" x2="734.7"><stop offset="0" stop-color="#0006ff"/><stop offset="1" stop-color="#1500ff"/></linearGradient>
<linearGradient id="r470" gradientUnits="userSpaceOnUse" x1="719.3" x2="733.7"><stop offset="0" stop-color="#0005ff"/><stop offset="1" stop-color="#1300ff"/></linearGradient>
<linearGradient id="r471" gradientUnits="userSpaceOnUse" x1="719.4" x2="732.7"><stop offset="0" stop-color="#0005ff"/><stop offset="1" stop-color="#10f"/></linearGradient>
<linearGradient id="r472" gradientUnits="userSpaceOnUse" x1="719.6" x2="731.7"><stop offset="0" stop-color="#0004ff"/><stop offset="1" stop-color="#0f00ff"/></linearGradient>
<linearGradient id="r473" gradientUnits="userSpaceOnUse" x1="719.8" x2="730.7"><stop offset="0" stop-color="#0004ff"/><stop offset="1" stop-color="#0e00ff"/></linearGradient>
<linearGradient id="r474" gradientUnits="userSpaceOnUse" x1="719.9" x2="729.8"><stop offset="0" stop-color="#0003ff"/><stop offset="1" stop-color="#0c00ff"/></linearGradient>
<linearGradient id="r475" gradientUnits="userSpaceOnUse" x1="720.1" x2="728.8"><stop offset="0" stop-color="#0003ff"/><stop offset="1" stop-color="#0a00ff"/></linearGradient>
<linearGradient id="r476" gradientUnits="userSpaceOnUse" x1="720.3" x2="727.8"><stop offset="0" stop-color="#0002ff"/><stop offset="1" stop-color="#0900ff"/></linearGradient>
<linearGradient id="r477" gradientUnits="userSpaceOnUse" x1="720.4" x2="726.8"><stop offset="0" stop-color="#0002ff"/><stop offset="1" stop-color="#0700ff"/></linearGradient>
<linearGradient id="r478" gradientUnits="userSpaceOnUse" x1="720.6" x2="725.8"><stop offset="0" stop-color="#0001ff"/><stop offset="1" stop-color="#0500ff"/></linearGradient>
<linearGradient id="r479" gradientUnits="userSpaceOnUse" x1="720.7" x2="724.9"><stop offset="0" stop-color="#0001ff"/><stop offset="1" stop-color="#0400ff"/></linearGradient>
<linearGradient id="ins" gradientUnits="userSpaceOnUse" x1="863.1" y1="279.9" x2="988.2" y2="368.1"><stop offset="0" stop-color="#8cff00"/><stop offset="0.05" stop-color="#a8ff00"/><stop offset="0.32" stop-color="#d8fa0a"/><stop offset="0.494" stop-color="#ffff00"/><stop offset="0.68" stop-color="#ffeb00"/><stop offset="0.84" stop-color="#ffc800"/><stop offset="1" stop-color="#ffaf00"/></linearGradient>
<clipPath id="insclip"><rect x="863.2" y="280.5" width="127.59999999999991" height="85.80000000000001"/></clipPath>
<linearGradient id="thead" x1="0" y1="0" x2="0" y2="1"><stop offset="0" stop-color="#343434"/><stop offset="0.47" stop-color="#303030"/><stop offset="0.53" stop-color="#121212"/><stop offset="1" stop-color="#161616"/></linearGradient>
</defs>
<g id="app-background">
<rect x="0.00" y="0.00" width="1000.00" height="571.00" fill="#323232"/>
<rect x="0.00" y="0.00" width="1000.00" height="14.50" fill="#222222"/>
<rect x="0.00" y="14.00" width="1.20" height="557.00" fill="#2a2a2a"/>
<rect x="0.00" y="569.85" width="1000.00" height="1.20" fill="#a4a4a4"/>
</g>
<g id="top-bar">
<rect x="0.00" y="1.00" width="12.20" height="13.00" fill="url(#btn2)" rx="2"/>
<circle cx="5.4" cy="7.2" r="4.2" fill="#747474"/>
<path d="M4.2 5.2 L7.2 7.2 L4.2 9.2 Z" fill="#f0f0f0"/>
<rect x="12.80" y="1.00" width="40.00" height="13.20" fill="url(#tab)" rx="2" stroke="#505050" stroke-width="0.5"/>
<text x="15.00" y="9.90" font-size="5.09" textLength="20.40" lengthAdjust="spacingAndGlyphs" fill="#c4c4c4">History 1</text>
<line x1="37.60" y1="2.00" x2="37.60" y2="14.00" stroke="#2a2a2a" stroke-width="0.6"/>
<circle cx="44.7" cy="8.6" r="3.6" fill="#363636" stroke="#2e2e2e" stroke-width="0.6"/>
<text x="43.60" y="10.20" font-size="4.36" fill="#777">+</text>
<rect x="727.70" y="1.00" width="112.80" height="13.20" fill="url(#btn)" rx="1.5"/>
<rect x="727.70" y="1.60" width="3.20" height="12.20" fill="#12e012"/>
<text x="732.10" y="6.50" font-size="4.80" textLength="71.50" lengthAdjust="spacingAndGlyphs" fill="#d2d2d2">Colorimetry Research CR-100/200</text>
<text x="732.10" y="12.70" font-size="4.80" textLength="43.90" lengthAdjust="spacingAndGlyphs" fill="#d2d2d2">Epson LS9000 CR250</text>
<circle cx="808.9" cy="8.0" r="3.9" fill="#4a4a4a" fill-opacity="0.8"/>
<path d="M806.9 7.2 L810.9 7.2 L808.9 9.6 Z" fill="#f4f4f4"/>
<line x1="817.60" y1="1.40" x2="817.60" y2="14.00" stroke="#3c3c3c" stroke-width="0.7"/>
<text x="820.80" y="10.90" font-size="8.58" textLength="18.90" lengthAdjust="spacingAndGlyphs" fill="#eeeeee">120hz</text>
<rect x="843.20" y="1.00" width="64.70" height="13.20" fill="url(#btn)" rx="1.5"/>
<rect x="843.20" y="1.60" width="3.20" height="12.20" fill="#12e012"/>
<text x="847.60" y="6.50" font-size="4.80" textLength="47.40" lengthAdjust="spacingAndGlyphs" fill="#d2d2d2">Murideo 8G Generator</text>
<circle cx="901" cy="8.0" r="3.9" fill="#4a4a4a" fill-opacity="0.8"/>
<path d="M899 7.2 L903 7.2 L901 9.6 Z" fill="#f4f4f4"/>
<rect x="911.10" y="1.00" width="61.60" height="13.20" fill="url(#btn)" rx="1.5"/>
<rect x="911.10" y="1.60" width="2.10" height="12.20" fill="#f0f000"/>
<text x="914.40" y="6.50" font-size="4.80" textLength="45.40" lengthAdjust="spacingAndGlyphs" fill="#d2d2d2">Direct Display Control</text>
<circle cx="965.7" cy="8.0" r="3.9" fill="#4a4a4a" fill-opacity="0.8"/>
<path d="M963.7 7.2 L967.7 7.2 L965.7 9.6 Z" fill="#f4f4f4"/>
<rect x="974.10" y="1.00" width="14.00" height="13.20" fill="url(#btn2)" rx="2.5"/>
<circle cx="981.2" cy="7.4" r="4.2" fill="#606060"/>
<circle cx="981.2" cy="7.4" r="2.3" fill="none" stroke="#dcdcdc" stroke-width="1.1" stroke-dasharray="1.4 0.4"/>
<rect x="988.60" y="1.00" width="14.00" height="13.20" fill="url(#btn2)" rx="2.5"/>
<circle cx="995.3" cy="7.3" r="4" fill="#8a8a8a"/>
<path d="M996.6 5 L993.6 7.3 L996.6 9.6 Z" fill="#f0f0f0"/>
</g>
<g id="header">
<text x="4.00" y="79.20" font-size="24.71" textLength="199.80" lengthAdjust="spacingAndGlyphs" fill="#ececec" stroke="#ececec" stroke-width="0.3" stroke-opacity="0.8">Saturation Sweeps</text>
<text x="335.40" y="75.20" font-size="12.50" textLength="35.90" lengthAdjust="spacingAndGlyphs" fill="#e8e8e8">Levels:</text>
<rect x="376.70" y="63.10" width="202.50" height="14.30" fill="url(#dd)"/>
<rect x="376.70" y="63.10" width="202.50" height="14.30" fill="none" stroke="#2a2a2a" stroke-width="0.6"/>
<text x="379.40" y="75.40" font-size="11.05" textLength="52.90" lengthAdjust="spacingAndGlyphs" fill="#f0f0f0">20% Sweeps</text>
<path d="M570.6 69.2 L575.8 69.2 L573.2 72.4 Z" fill="#0a0a0a"/>
<text x="74.30" y="111.80" font-size="13.37" textLength="64.00" lengthAdjust="spacingAndGlyphs" fill="#e8e8e8">dE Formula:</text>
<rect x="143.80" y="99.40" width="80.10" height="14.40" fill="url(#dd)"/>
<rect x="143.80" y="99.40" width="80.10" height="14.40" fill="none" stroke="#2a2a2a" stroke-width="0.6"/>
<text x="146.50" y="112.00" font-size="11.05" textLength="20.70" lengthAdjust="spacingAndGlyphs" fill="#f0f0f0">2000</text>
<path d="M215.2 105.8 L220.4 105.8 L217.8 109 Z" fill="#0a0a0a"/>
</g>
<g id="deltae-chart">
<text x="84.60" y="130.80" font-size="9.88" textLength="48.00" lengthAdjust="spacingAndGlyphs" fill="#dcdcdc">DeltaE 2000</text>
<rect x="25.90" y="134.20" width="186.90" height="231.30" fill="#242424"/>
<line x1="62.68" y1="134.20" x2="62.68" y2="368.50" stroke="#7c7c7c" stroke-width="1.0"/>
<line x1="100.66" y1="134.20" x2="100.66" y2="368.50" stroke="#7c7c7c" stroke-width="1.0"/>
<line x1="119.35" y1="134.20" x2="119.35" y2="368.50" stroke="#7c7c7c" stroke-width="1.0"/>
<line x1="138.04" y1="134.20" x2="138.04" y2="368.50" stroke="#7c7c7c" stroke-width="1.0"/>
<line x1="156.73" y1="134.20" x2="156.73" y2="368.50" stroke="#7c7c7c" stroke-width="1.0"/>
<line x1="175.42" y1="134.20" x2="175.42" y2="368.50" stroke="#7c7c7c" stroke-width="1.0"/>
<line x1="194.11" y1="134.20" x2="194.11" y2="368.50" stroke="#7c7c7c" stroke-width="1.0"/>
<line x1="212.80" y1="134.20" x2="212.80" y2="368.50" stroke="#a05858" stroke-width="0.9"/>
<rect x="26.20" y="138.17" width="13.42" height="3.20" fill="#0a0a0a" rx="0.8"/>
<rect x="26.20" y="137.77" width="12.52" height="2.60" fill="#e01818" rx="0.8"/>
<rect x="26.20" y="137.77" width="12.52" height="2.60" fill="url(#bshade)" rx="0.8"/>
<rect x="26.20" y="142.29" width="12.11" height="3.20" fill="#0a0a0a" rx="0.8"/>
<rect x="26.20" y="141.89" width="11.21" height="2.60" fill="#10d010" rx="0.8"/>
<rect x="26.20" y="141.89" width="11.21" height="2.60" fill="url(#bshade)" rx="0.8"/>
<rect x="26.20" y="146.41" width="21.83" height="3.20" fill="#0a0a0a" rx="0.8"/>
<rect x="26.20" y="146.01" width="20.93" height="2.60" fill="#1818c8" rx="0.8"/>
<rect x="26.20" y="146.01" width="20.93" height="2.60" fill="url(#bshade)" rx="0.8"/>
<rect x="26.20" y="150.53" width="12.86" height="3.20" fill="#0a0a0a" rx="0.8"/>
<rect x="26.20" y="150.13" width="11.96" height="2.60" fill="#10c8c8" rx="0.8"/>
<rect x="26.20" y="150.13" width="11.96" height="2.60" fill="url(#bshade)" rx="0.8"/>
<rect x="26.20" y="154.65" width="13.24" height="3.20" fill="#0a0a0a" rx="0.8"/>
<rect x="26.20" y="154.25" width="12.34" height="2.60" fill="#d818d8" rx="0.8"/>
<rect x="26.20" y="154.25" width="12.34" height="2.60" fill="url(#bshade)" rx="0.8"/>
<rect x="26.20" y="158.77" width="12.49" height="3.20" fill="#0a0a0a" rx="0.8"/>
<rect x="26.20" y="158.37" width="11.59" height="2.60" fill="#d0d010" rx="0.8"/>
<rect x="26.20" y="158.37" width="11.59" height="2.60" fill="url(#bshade)" rx="0.8"/>
<rect x="26.20" y="171.21" width="14.73" height="3.20" fill="#0a0a0a" rx="0.8"/>
<rect x="26.20" y="170.81" width="13.83" height="2.60" fill="#e05050" rx="0.8"/>
<rect x="26.20" y="170.81" width="13.83" height="2.60" fill="url(#bshade)" rx="0.8"/>
<rect x="26.20" y="175.33" width="13.61" height="3.20" fill="#0a0a0a" rx="0.8"/>
<rect x="26.20" y="174.93" width="12.71" height="2.60" fill="#50c850" rx="0.8"/>
<rect x="26.20" y="174.93" width="12.71" height="2.60" fill="url(#bshade)" rx="0.8"/>
<rect x="26.20" y="179.45" width="18.09" height="3.20" fill="#0a0a0a" rx="0.8"/>
<rect x="26.20" y="179.05" width="17.19" height="2.60" fill="#5050d8" rx="0.8"/>
<rect x="26.20" y="179.05" width="17.19" height="2.60" fill="url(#bshade)" rx="0.8"/>
<rect x="26.20" y="183.57" width="19.22" height="3.20" fill="#0a0a0a" rx="0.8"/>
<rect x="26.20" y="183.17" width="18.32" height="2.60" fill="#50c8c8" rx="0.8"/>
<rect x="26.20" y="183.17" width="18.32" height="2.60" fill="url(#bshade)" rx="0.8"/>
<rect x="26.20" y="187.69" width="8.75" height="3.20" fill="#0a0a0a" rx="0.8"/>
<rect x="26.20" y="187.29" width="7.85" height="2.60" fill="#d850d8" rx="0.8"/>
<rect x="26.20" y="187.29" width="7.85" height="2.60" fill="url(#bshade)" rx="0.8"/>
<rect x="26.20" y="191.81" width="13.98" height="3.20" fill="#0a0a0a" rx="0.8"/>
<rect x="26.20" y="191.41" width="13.08" height="2.60" fill="#c8c850" rx="0.8"/>
<rect x="26.20" y="191.41" width="13.08" height="2.60" fill="url(#bshade)" rx="0.8"/>
<rect x="26.20" y="204.26" width="12.49" height="3.20" fill="#0a0a0a" rx="0.8"/>
<rect x="26.20" y="203.86" width="11.59" height="2.60" fill="#e07070" rx="0.8"/>
<rect x="26.20" y="203.86" width="11.59" height="2.60" fill="url(#bshade)" rx="0.8"/>
<rect x="26.20" y="208.38" width="10.62" height="3.20" fill="#0a0a0a" rx="0.8"/>
<rect x="26.20" y="207.98" width="9.72" height="2.60" fill="#70c870" rx="0.8"/>
<rect x="26.20" y="207.98" width="9.72" height="2.60" fill="url(#bshade)" rx="0.8"/>
<rect x="26.20" y="212.50" width="18.47" height="3.20" fill="#0a0a0a" rx="0.8"/>
<rect x="26.20" y="212.10" width="17.57" height="2.60" fill="#7070d8" rx="0.8"/>
<rect x="26.20" y="212.10" width="17.57" height="2.60" fill="url(#bshade)" rx="0.8"/>
<rect x="26.20" y="216.62" width="24.08" height="3.20" fill="#0a0a0a" rx="0.8"/>
<rect x="26.20" y="216.22" width="23.18" height="2.60" fill="#70c8c8" rx="0.8"/>
<rect x="26.20" y="216.22" width="23.18" height="2.60" fill="url(#bshade)" rx="0.8"/>
<rect x="26.20" y="220.74" width="8.75" height="3.20" fill="#0a0a0a" rx="0.8"/>
<rect x="26.20" y="220.34" width="7.85" height="2.60" fill="#d070d0" rx="0.8"/>
<rect x="26.20" y="220.34" width="7.85" height="2.60" fill="url(#bshade)" rx="0.8"/>
<rect x="26.20" y="224.86" width="8.38" height="3.20" fill="#0a0a0a" rx="0.8"/>
<rect x="26.20" y="224.46" width="7.48" height="2.60" fill="#c8c870" rx="0.8"/>
<rect x="26.20" y="224.46" width="7.48" height="2.60" fill="url(#bshade)" rx="0.8"/>
<rect x="26.20" y="237.30" width="23.33" height="3.20" fill="#0a0a0a" rx="0.8"/>
<rect x="26.20" y="236.90" width="22.43" height="2.60" fill="#e08c8c" rx="0.8"/>
<rect x="26.20" y="236.90" width="22.43" height="2.60" fill="url(#bshade)" rx="0.8"/>
<rect x="26.20" y="241.42" width="12.86" height="3.20" fill="#0a0a0a" rx="0.8"/>
<rect x="26.20" y="241.02" width="11.96" height="2.60" fill="#8cc88c" rx="0.8"/>
<rect x="26.20" y="241.02" width="11.96" height="2.60" fill="url(#bshade)" rx="0.8"/>
<rect x="26.20" y="245.54" width="17.35" height="3.20" fill="#0a0a0a" rx="0.8"/>
<rect x="26.20" y="245.14" width="16.45" height="2.60" fill="#8c8cd8" rx="0.8"/>
<rect x="26.20" y="245.14" width="16.45" height="2.60" fill="url(#bshade)" rx="0.8"/>
<rect x="26.20" y="249.66" width="28.56" height="3.20" fill="#0a0a0a" rx="0.8"/>
<rect x="26.20" y="249.26" width="27.66" height="2.60" fill="#8cc8c8" rx="0.8"/>
<rect x="26.20" y="249.26" width="27.66" height="2.60" fill="url(#bshade)" rx="0.8"/>
<rect x="26.20" y="253.78" width="8.38" height="3.20" fill="#0a0a0a" rx="0.8"/>
<rect x="26.20" y="253.38" width="7.48" height="2.60" fill="#d08cd0" rx="0.8"/>
<rect x="26.20" y="253.38" width="7.48" height="2.60" fill="url(#bshade)" rx="0.8"/>
<rect x="26.20" y="257.90" width="13.24" height="3.20" fill="#0a0a0a" rx="0.8"/>
<rect x="26.20" y="257.50" width="12.34" height="2.60" fill="#c8c88c" rx="0.8"/>
<rect x="26.20" y="257.50" width="12.34" height="2.60" fill="url(#bshade)" rx="0.8"/>
<rect x="26.20" y="270.34" width="21.09" height="3.20" fill="#0a0a0a" rx="0.8"/>
<rect x="26.20" y="269.94" width="20.19" height="2.60" fill="#d8a8a8" rx="0.8"/>
<rect x="26.20" y="269.94" width="20.19" height="2.60" fill="url(#bshade)" rx="0.8"/>
<rect x="26.20" y="274.46" width="11.37" height="3.20" fill="#0a0a0a" rx="0.8"/>
<rect x="26.20" y="274.06" width="10.47" height="2.60" fill="#a8c8a8" rx="0.8"/>
<rect x="26.20" y="274.06" width="10.47" height="2.60" fill="url(#bshade)" rx="0.8"/>
<rect x="26.20" y="278.58" width="18.47" height="3.20" fill="#0a0a0a" rx="0.8"/>
<rect x="26.20" y="278.18" width="17.57" height="2.60" fill="#a8a8d8" rx="0.8"/>
<rect x="26.20" y="278.18" width="17.57" height="2.60" fill="url(#bshade)" rx="0.8"/>
<rect x="26.20" y="282.70" width="15.48" height="3.20" fill="#0a0a0a" rx="0.8"/>
<rect x="26.20" y="282.30" width="14.58" height="2.60" fill="#a8c8c8" rx="0.8"/>
<rect x="26.20" y="282.30" width="14.58" height="2.60" fill="url(#bshade)" rx="0.8"/>
<rect x="26.20" y="286.82" width="8.75" height="3.20" fill="#0a0a0a" rx="0.8"/>
<rect x="26.20" y="286.42" width="7.85" height="2.60" fill="#c8a8c8" rx="0.8"/>
<rect x="26.20" y="286.42" width="7.85" height="2.60" fill="url(#bshade)" rx="0.8"/>
<rect x="26.20" y="290.94" width="27.07" height="3.20" fill="#0a0a0a" rx="0.8"/>
<rect x="26.20" y="290.54" width="26.17" height="2.60" fill="#c8c8a8" rx="0.8"/>
<rect x="26.20" y="290.54" width="26.17" height="2.60" fill="url(#bshade)" rx="0.8"/>
<rect x="26.20" y="328.30" width="48.00" height="3.30" fill="#0c0c0c" rx="0.8"/>
<rect x="26.20" y="327.90" width="47.10" height="2.80" fill="url(#wbar)" rx="0.8"/>
<rect x="26.20" y="359.60" width="32.15" height="4.20" fill="url(#kbar)" rx="0.8"/>
<line x1="44.59" y1="134.20" x2="44.59" y2="367.00" stroke="#168e16" stroke-width="1.1"/>
<line x1="81.97" y1="134.20" x2="81.97" y2="367.00" stroke="#d0c820" stroke-width="1.45"/>
<line x1="25.90" y1="133.90" x2="25.90" y2="368.50" stroke="#9c9c9c" stroke-width="1.0"/>
<line x1="22.20" y1="133.90" x2="213.20" y2="133.90" stroke="#9c9c9c" stroke-width="1.0"/>
<line x1="22.20" y1="365.50" x2="213.20" y2="365.50" stroke="#9c9c9c" stroke-width="1.0"/>
<line x1="22.20" y1="167.24" x2="25.90" y2="167.24" stroke="#9c9c9c" stroke-width="0.9"/>
<line x1="22.20" y1="200.29" x2="25.90" y2="200.29" stroke="#9c9c9c" stroke-width="0.9"/>
<line x1="22.20" y1="233.33" x2="25.90" y2="233.33" stroke="#9c9c9c" stroke-width="0.9"/>
<line x1="22.20" y1="266.37" x2="25.90" y2="266.37" stroke="#9c9c9c" stroke-width="0.9"/>
<line x1="22.20" y1="299.41" x2="25.90" y2="299.41" stroke="#9c9c9c" stroke-width="0.9"/>
<line x1="22.20" y1="332.46" x2="25.90" y2="332.46" stroke="#9c9c9c" stroke-width="0.9"/>
<text x="4.00" y="154.32" font-size="10.03" textLength="21.20" lengthAdjust="spacingAndGlyphs" fill="#d8d8d8">100%</text>
<text x="8.90" y="187.36" font-size="10.03" textLength="16.30" lengthAdjust="spacingAndGlyphs" fill="#d8d8d8">80%</text>
<text x="8.90" y="220.41" font-size="10.03" textLength="16.30" lengthAdjust="spacingAndGlyphs" fill="#d8d8d8">60%</text>
<text x="8.90" y="253.45" font-size="10.03" textLength="16.30" lengthAdjust="spacingAndGlyphs" fill="#d8d8d8">40%</text>
<text x="8.90" y="286.89" font-size="10.03" textLength="16.30" lengthAdjust="spacingAndGlyphs" fill="#d8d8d8">20%</text>
<text x="11.00" y="319.54" font-size="10.03" textLength="15.00" lengthAdjust="spacingAndGlyphs" fill="#d8d8d8">100</text>
<text x="20.70" y="352.58" font-size="10.03" textLength="5.30" lengthAdjust="spacingAndGlyphs" fill="#d8d8d8">0</text>
<text x="23.60" y="378.80" font-size="10.03" textLength="4.60" lengthAdjust="spacingAndGlyphs" fill="#d8d8d8">0</text>
<text x="42.29" y="378.80" font-size="10.03" textLength="4.60" lengthAdjust="spacingAndGlyphs" fill="#d8d8d8">1</text>
<text x="60.98" y="378.80" font-size="10.03" textLength="4.60" lengthAdjust="spacingAndGlyphs" fill="#d8d8d8">2</text>
<text x="79.67" y="378.80" font-size="10.03" textLength="4.60" lengthAdjust="spacingAndGlyphs" fill="#d8d8d8">3</text>
<text x="98.36" y="378.80" font-size="10.03" textLength="4.60" lengthAdjust="spacingAndGlyphs" fill="#d8d8d8">4</text>
<text x="117.05" y="378.80" font-size="10.03" textLength="4.60" lengthAdjust="spacingAndGlyphs" fill="#d8d8d8">5</text>
<text x="135.74" y="378.80" font-size="10.03" textLength="4.60" lengthAdjust="spacingAndGlyphs" fill="#d8d8d8">6</text>
<text x="154.43" y="378.80" font-size="10.03" textLength="4.60" lengthAdjust="spacingAndGlyphs" fill="#d8d8d8">7</text>
<text x="173.12" y="378.80" font-size="10.03" textLength="4.60" lengthAdjust="spacingAndGlyphs" fill="#d8d8d8">8</text>
<text x="191.81" y="378.80" font-size="10.03" textLength="4.60" lengthAdjust="spacingAndGlyphs" fill="#d8d8d8">9</text>
<text x="208.20" y="378.80" font-size="10.03" textLength="9.20" lengthAdjust="spacingAndGlyphs" fill="#d8d8d8">10</text>
</g>
<g id="summary">
<text x="30.40" y="411.90" font-size="18.02" textLength="139.60" lengthAdjust="spacingAndGlyphs" fill="#ececec" stroke="#ececec" stroke-width="0.3" stroke-opacity="0.8">Avg dE2000: 0.91</text>
<text x="28.00" y="436.20" font-size="18.31" textLength="145.50" lengthAdjust="spacingAndGlyphs" fill="#ececec" stroke="#ececec" stroke-width="0.3" stroke-opacity="0.8">Max dE2000: 2.56</text>
<text x="9.30" y="465.10" font-size="18.31" textLength="130.90" lengthAdjust="spacingAndGlyphs" fill="#ececec" stroke="#ececec" stroke-width="0.3" stroke-opacity="0.8">Current Reading</text>
<text x="9.30" y="486.50" font-size="15.12" textLength="61.00" lengthAdjust="spacingAndGlyphs" fill="#ececec" stroke="#ececec" stroke-width="0.22" stroke-opacity="0.8">x: 0.4182</text>
<text x="102.60" y="486.50" font-size="15.12" textLength="61.90" lengthAdjust="spacingAndGlyphs" fill="#ececec" stroke="#ececec" stroke-width="0.22" stroke-opacity="0.8">y: 0.5014</text>
<text x="9.30" y="510.80" font-size="15.41" textLength="57.50" lengthAdjust="spacingAndGlyphs" fill="#ececec" stroke="#ececec" stroke-width="0.22" stroke-opacity="0.8">fL: 16.78</text>
<text x="9.30" y="531.60" font-size="15.41" textLength="78.00" lengthAdjust="spacingAndGlyphs" fill="#ececec" stroke="#ececec" stroke-width="0.22" stroke-opacity="0.8">cd/m²: 57.5</text>
</g>
<g id="rgb-balance">
<text x="255.00" y="412.50" font-size="9.88" textLength="49.80" lengthAdjust="spacingAndGlyphs" fill="#dcdcdc">RGB Balance</text>
<rect x="214.20" y="415.50" width="150.30" height="108.80" fill="#242424"/>
<line x1="211.20" y1="513.90" x2="364.50" y2="513.90" stroke="#767676" stroke-width="1.2"/>
<line x1="211.20" y1="492.30" x2="364.50" y2="492.30" stroke="#767676" stroke-width="1.2"/>
<line x1="211.20" y1="470.70" x2="364.50" y2="470.70" stroke="#767676" stroke-width="1.2"/>
<line x1="211.20" y1="449.10" x2="364.50" y2="449.10" stroke="#767676" stroke-width="1.2"/>
<line x1="211.20" y1="427.50" x2="364.50" y2="427.50" stroke="#767676" stroke-width="1.2"/>
<rect x="228.40" y="473.44" width="40.30" height="50.86" fill="#101010"/>
<rect x="229.20" y="474.24" width="38.70" height="49.86" fill="url(#rbar)"/>
<rect x="268.40" y="476.68" width="40.30" height="47.62" fill="#101010"/>
<rect x="269.20" y="477.48" width="38.70" height="46.62" fill="url(#gbar)"/>
<rect x="308.40" y="415.90" width="40.00" height="108.40" fill="#101010"/>
<rect x="309.20" y="416.70" width="38.40" height="107.40" fill="url(#bbar)"/>
<line x1="214.20" y1="415.50" x2="214.20" y2="527.30" stroke="#9c9c9c" stroke-width="0.9"/>
<line x1="364.50" y1="415.50" x2="364.50" y2="527.30" stroke="#9c9c9c" stroke-width="0.9"/>
<line x1="214.20" y1="415.50" x2="364.50" y2="415.50" stroke="#9c9c9c" stroke-width="0.9"/>
<line x1="214.20" y1="524.30" x2="364.50" y2="524.30" stroke="#9c9c9c" stroke-width="0.9"/>
<text x="200.50" y="517.40" font-size="10.03" textLength="9.90" lengthAdjust="spacingAndGlyphs" fill="#d8d8d8">96</text>
<text x="200.50" y="495.80" font-size="10.03" textLength="9.90" lengthAdjust="spacingAndGlyphs" fill="#d8d8d8">98</text>
<text x="195.55" y="474.20" font-size="10.03" textLength="14.85" lengthAdjust="spacingAndGlyphs" fill="#d8d8d8">100</text>
<text x="195.55" y="452.60" font-size="10.03" textLength="14.85" lengthAdjust="spacingAndGlyphs" fill="#d8d8d8">102</text>
<text x="195.55" y="431.00" font-size="10.03" textLength="14.85" lengthAdjust="spacingAndGlyphs" fill="#d8d8d8">104</text>
<text x="278.60" y="534.50" font-size="10.03" textLength="20.80" lengthAdjust="spacingAndGlyphs" fill="#d8d8d8">100%</text>
</g>
<g id="delta-l">
<text x="266.40" y="98.70" font-size="9.88" textLength="27.50" lengthAdjust="spacingAndGlyphs" fill="#dcdcdc">Delta L</text>
<rect x="244.30" y="101.90" width="87.00" height="168.50" fill="#242424"/>
<line x1="241.50" y1="101.70" x2="331.30" y2="101.70" stroke="#9c9c9c" stroke-width="1.0"/>
<line x1="241.50" y1="130.00" x2="331.30" y2="130.00" stroke="#767676" stroke-width="1.25"/>
<line x1="241.50" y1="158.40" x2="331.30" y2="158.40" stroke="#767676" stroke-width="1.25"/>
<line x1="241.50" y1="186.90" x2="331.30" y2="186.90" stroke="#767676" stroke-width="1.25"/>
<line x1="241.50" y1="214.60" x2="331.30" y2="214.60" stroke="#767676" stroke-width="1.25"/>
<line x1="241.50" y1="243.00" x2="331.30" y2="243.00" stroke="#767676" stroke-width="1.25"/>
<line x1="241.50" y1="270.20" x2="331.30" y2="270.20" stroke="#9c9c9c" stroke-width="1.0"/>
<rect x="252.90" y="185.80" width="70.00" height="4.10" fill="#101000" rx="0.6"/>
<rect x="253.50" y="186.30" width="68.80" height="2.60" fill="url(#ybar)"/>
<line x1="244.30" y1="101.90" x2="244.30" y2="274.40" stroke="#9c9c9c" stroke-width="0.95"/>
<line x1="331.30" y1="101.90" x2="331.30" y2="274.40" stroke="#9c9c9c" stroke-width="0.95"/>
<text x="231.60" y="105.70" font-size="10.03" textLength="9.40" lengthAdjust="spacingAndGlyphs" fill="#d8d8d8">15</text>
<text x="231.60" y="134.00" font-size="10.03" textLength="9.40" lengthAdjust="spacingAndGlyphs" fill="#d8d8d8">10</text>
<text x="236.15" y="162.40" font-size="10.03" textLength="4.85" lengthAdjust="spacingAndGlyphs" fill="#d8d8d8">5</text>
<text x="236.15" y="190.90" font-size="10.03" textLength="4.85" lengthAdjust="spacingAndGlyphs" fill="#d8d8d8">0</text>
<text x="233.25" y="218.60" font-size="10.03" textLength="7.75" lengthAdjust="spacingAndGlyphs" fill="#d8d8d8">-5</text>
<text x="228.70" y="247.00" font-size="10.03" textLength="12.30" lengthAdjust="spacingAndGlyphs" fill="#d8d8d8">-10</text>
<text x="228.70" y="275.80" font-size="10.03" textLength="12.30" lengthAdjust="spacingAndGlyphs" fill="#d8d8d8">-15</text>
<text x="277.60" y="281.30" font-size="10.03" textLength="20.80" lengthAdjust="spacingAndGlyphs" fill="#d8d8d8">100%</text>
</g>
<g id="delta-c">
<text x="384.30" y="98.70" font-size="9.88" textLength="28.80" lengthAdjust="spacingAndGlyphs" fill="#dcdcdc">Delta C</text>
<rect x="363.40" y="101.90" width="86.80" height="168.50" fill="#242424"/>
<line x1="360.60" y1="101.70" x2="450.20" y2="101.70" stroke="#9c9c9c" stroke-width="1.0"/>
<line x1="360.60" y1="130.00" x2="450.20" y2="130.00" stroke="#767676" stroke-width="1.25"/>
<line x1="360.60" y1="158.40" x2="450.20" y2="158.40" stroke="#767676" stroke-width="1.25"/>
<line x1="360.60" y1="186.90" x2="450.20" y2="186.90" stroke="#767676" stroke-width="1.25"/>
<line x1="360.60" y1="214.60" x2="450.20" y2="214.60" stroke="#767676" stroke-width="1.25"/>
<line x1="360.60" y1="243.00" x2="450.20" y2="243.00" stroke="#767676" stroke-width="1.25"/>
<line x1="360.60" y1="270.20" x2="450.20" y2="270.20" stroke="#9c9c9c" stroke-width="1.0"/>
<rect x="372.00" y="185.80" width="69.80" height="12.10" fill="#101000" rx="0.6"/>
<rect x="372.60" y="186.30" width="68.60" height="10.60" fill="url(#ybar)"/>
<line x1="363.40" y1="101.90" x2="363.40" y2="274.40" stroke="#9c9c9c" stroke-width="0.95"/>
<line x1="450.20" y1="101.90" x2="450.20" y2="274.40" stroke="#9c9c9c" stroke-width="0.95"/>
<text x="350.70" y="105.70" font-size="10.03" textLength="9.40" lengthAdjust="spacingAndGlyphs" fill="#d8d8d8">15</text>
<text x="350.70" y="134.00" font-size="10.03" textLength="9.40" lengthAdjust="spacingAndGlyphs" fill="#d8d8d8">10</text>
<text x="355.25" y="162.40" font-size="10.03" textLength="4.85" lengthAdjust="spacingAndGlyphs" fill="#d8d8d8">5</text>
<text x="355.25" y="190.90" font-size="10.03" textLength="4.85" lengthAdjust="spacingAndGlyphs" fill="#d8d8d8">0</text>
<text x="352.35" y="218.60" font-size="10.03" textLength="7.75" lengthAdjust="spacingAndGlyphs" fill="#d8d8d8">-5</text>
<text x="347.80" y="247.00" font-size="10.03" textLength="12.30" lengthAdjust="spacingAndGlyphs" fill="#d8d8d8">-10</text>
<text x="347.80" y="275.80" font-size="10.03" textLength="12.30" lengthAdjust="spacingAndGlyphs" fill="#d8d8d8">-15</text>
<text x="396.60" y="281.30" font-size="10.03" textLength="20.80" lengthAdjust="spacingAndGlyphs" fill="#d8d8d8">100%</text>
</g>
<g id="delta-h">
<text x="501.80" y="98.70" font-size="9.88" textLength="29.60" lengthAdjust="spacingAndGlyphs" fill="#dcdcdc">Delta H</text>
<rect x="481.20" y="101.90" width="87.00" height="168.50" fill="#242424"/>
<line x1="478.40" y1="101.70" x2="568.20" y2="101.70" stroke="#9c9c9c" stroke-width="1.0"/>
<line x1="478.40" y1="130.00" x2="568.20" y2="130.00" stroke="#767676" stroke-width="1.25"/>
<line x1="478.40" y1="158.40" x2="568.20" y2="158.40" stroke="#767676" stroke-width="1.25"/>
<line x1="478.40" y1="186.90" x2="568.20" y2="186.90" stroke="#767676" stroke-width="1.25"/>
<line x1="478.40" y1="214.60" x2="568.20" y2="214.60" stroke="#767676" stroke-width="1.25"/>
<line x1="478.40" y1="243.00" x2="568.20" y2="243.00" stroke="#767676" stroke-width="1.25"/>
<line x1="478.40" y1="270.20" x2="568.20" y2="270.20" stroke="#9c9c9c" stroke-width="1.0"/>
<rect x="490.00" y="186.20" width="69.60" height="1.90" fill="#141408" rx="0.4"/>
<rect x="490.40" y="186.50" width="68.80" height="1.10" fill="#74741c"/>
<line x1="481.20" y1="101.90" x2="481.20" y2="274.40" stroke="#9c9c9c" stroke-width="0.95"/>
<line x1="568.20" y1="101.90" x2="568.20" y2="274.40" stroke="#9c9c9c" stroke-width="0.95"/>
<text x="468.50" y="105.70" font-size="10.03" textLength="9.40" lengthAdjust="spacingAndGlyphs" fill="#d8d8d8">15</text>
<text x="468.50" y="134.00" font-size="10.03" textLength="9.40" lengthAdjust="spacingAndGlyphs" fill="#d8d8d8">10</text>
<text x="473.05" y="162.40" font-size="10.03" textLength="4.85" lengthAdjust="spacingAndGlyphs" fill="#d8d8d8">5</text>
<text x="473.05" y="190.90" font-size="10.03" textLength="4.85" lengthAdjust="spacingAndGlyphs" fill="#d8d8d8">0</text>
<text x="470.15" y="218.60" font-size="10.03" textLength="7.75" lengthAdjust="spacingAndGlyphs" fill="#d8d8d8">-5</text>
<text x="465.60" y="247.00" font-size="10.03" textLength="12.30" lengthAdjust="spacingAndGlyphs" fill="#d8d8d8">-10</text>
<text x="465.60" y="275.80" font-size="10.03" textLength="12.30" lengthAdjust="spacingAndGlyphs" fill="#d8d8d8">-15</text>
<text x="514.50" y="281.30" font-size="10.03" textLength="20.80" lengthAdjust="spacingAndGlyphs" fill="#d8d8d8">100%</text>
</g>
<g id="swatches">
<rect x="224.60" y="286.60" width="355.60" height="97.90" fill="#181818"/>
<rect x="225.20" y="287.20" width="354.40" height="96.70" fill="#000000"/>
<rect x="237.00" y="291.00" width="60.00" height="79.40" fill="url(#sw0)" stroke="#e4e4d8" stroke-opacity="0.9" stroke-width="0.9"/>
<text x="260.00" y="379.80" font-size="8.58" textLength="14.00" lengthAdjust="spacingAndGlyphs" fill="#f0f0f0">20%</text>
<rect x="306.60" y="291.00" width="59.30" height="79.40" fill="url(#sw1)" stroke="#e4e4d8" stroke-opacity="0.9" stroke-width="0.9"/>
<text x="329.25" y="379.80" font-size="8.58" textLength="14.00" lengthAdjust="spacingAndGlyphs" fill="#f0f0f0">40%</text>
<rect x="375.80" y="291.00" width="59.90" height="79.40" fill="url(#sw2)" stroke="#e4e4d8" stroke-opacity="0.9" stroke-width="0.9"/>
<text x="398.75" y="379.80" font-size="8.58" textLength="14.00" lengthAdjust="spacingAndGlyphs" fill="#f0f0f0">60%</text>
<rect x="445.30" y="291.00" width="59.60" height="79.40" fill="url(#sw3)" stroke="#e4e4d8" stroke-opacity="0.9" stroke-width="0.9"/>
<text x="468.10" y="379.80" font-size="8.58" textLength="14.00" lengthAdjust="spacingAndGlyphs" fill="#f0f0f0">80%</text>
<rect x="514.60" y="291.00" width="59.50" height="79.40" fill="url(#sw4)" stroke="#e4e4d8" stroke-opacity="0.9" stroke-width="0.9"/>
<text x="535.05" y="379.80" font-size="8.58" textLength="18.60" lengthAdjust="spacingAndGlyphs" fill="#f0f0f0">100%</text>
<text x="0.00" y="0.00" font-size="8.43" textLength="21.00" lengthAdjust="spacingAndGlyphs" fill="#f0f0f0" transform="translate(233.4 319.0) rotate(-90)">Actual</text>
<text x="0.00" y="0.00" font-size="8.43" textLength="21.20" lengthAdjust="spacingAndGlyphs" fill="#f0f0f0" transform="translate(233.4 363.4) rotate(-90)">Target</text>
</g>
<g id="cie-panel">
<rect x="584.20" y="57.90" width="420.00" height="335.20" fill="#1c1c1c"/>
<rect x="588.10" y="61.70" width="407.80" height="327.30" fill="#333333"/>
<text x="766.40" y="72.90" font-size="9.88" textLength="52.40" lengthAdjust="spacingAndGlyphs" fill="#dcdcdc">CIE 1976 u'v'</text>
<rect x="611.00" y="76.40" width="383.00" height="295.10" fill="#242424"/>
<g id="cie-diagram" clip-path="url(#plotclip)">
<g clip-path="url(#locus)"><rect x="632.4" y="82.0" width="25.2" height="1.4" fill="url(#r0)"/><rect x="624.9" y="83.0" width="47.9" height="1.4" fill="url(#r1)"/><rect x="621.6" y="84.0" width="62.3" height="1.4" fill="url(#r2)"/><rect x="619.4" y="85.0" width="74.4" height="1.4" fill="url(#r3)"/><rect x="617.7" y="86.0" width="85.5" height="1.4" fill="url(#r4)"/><rect x="616.5" y="87.0" width="95.9" height="1.4" fill="url(#r5)"/><rect x="615.4" y="88.0" width="106.0" height="1.4" fill="url(#r6)"/><rect x="614.5" y="89.0" width="115.7" height="1.4" fill="url(#r7)"/><rect x="613.8" y="90.0" width="125.3" height="1.4" fill="url(#r8)"/><rect x="613.2" y="91.0" width="134.6" height="1.4" fill="url(#r9)"/><rect x="612.6" y="92.0" width="143.9" height="1.4" fill="url(#r10)"/><rect x="612.1" y="93.0" width="153.1" height="1.4" fill="url(#r11)"/><rect x="611.7" y="94.0" width="162.1" height="1.4" fill="url(#r12)"/><rect x="611.4" y="95.0" width="171.2" height="1.4" fill="url(#r13)"/><rect x="611.1" y="96.0" width="180.1" height="1.4" fill="url(#r14)"/><rect x="611.0" y="97.0" width="188.9" height="1.4" fill="url(#r15)"/><rect x="611.0" y="98.0" width="197.7" height="1.4" fill="url(#r16)"/><rect x="611.0" y="99.0" width="206.4" height="1.4" fill="url(#r17)"/><rect x="611.0" y="100.0" width="215.1" height="1.4" fill="url(#r18)"/><rect x="611.0" y="101.0" width="223.7" height="1.4" fill="url(#r19)"/><rect x="611.0" y="102.0" width="232.4" height="1.4" fill="url(#r20)"/><rect x="611.0" y="103.0" width="241.0" height="1.4" fill="url(#r21)"/><rect x="611.0" y="104.0" width="249.7" height="1.4" fill="url(#r22)"/><rect x="611.0" y="105.0" width="258.4" height="1.4" fill="url(#r23)"/><rect x="611.0" y="106.0" width="267.1" height="1.4" fill="url(#r24)"/><rect x="611.0" y="107.0" width="275.8" height="1.4" fill="url(#r25)"/><rect x="611.0" y="108.0" width="284.5" height="1.4" fill="url(#r26)"/><rect x="611.0" y="109.0" width="293.3" height="1.4" fill="url(#r27)"/><rect x="611.0" y="110.0" width="302.0" height="1.4" fill="url(#r28)"/><rect x="611.0" y="111.0" width="310.7" height="1.4" fill="url(#r29)"/><rect x="611.0" y="112.0" width="319.4" height="1.4" fill="url(#r30)"/><rect x="611.0" y="113.0" width="328.0" height="1.4" fill="url(#r31)"/><rect x="611.0" y="114.0" width="336.7" height="1.4" fill="url(#r32)"/><rect x="611.0" y="115.0" width="345.5" height="1.4" fill="url(#r33)"/><rect x="611.0" y="116.0" width="354.2" height="1.4" fill="url(#r34)"/><rect x="611.1" y="117.0" width="362.7" height="1.4" fill="url(#r35)"/><rect x="611.3" y="118.0" width="371.2" height="1.4" fill="url(#r36)"/><rect x="611.4" y="119.0" width="379.8" height="1.4" fill="url(#r37)"/><rect x="611.6" y="120.0" width="382.4" height="1.4" fill="url(#r38)"/><rect x="611.8" y="121.0" width="382.2" height="1.4" fill="url(#r39)"/><rect x="612.0" y="122.0" width="382.0" height="1.4" fill="url(#r40)"/><rect x="612.2" y="123.0" width="381.8" height="1.4" fill="url(#r41)"/><rect x="612.4" y="124.0" width="381.6" height="1.4" fill="url(#r42)"/><rect x="612.7" y="125.0" width="381.3" height="1.4" fill="url(#r43)"/><rect x="612.9" y="126.0" width="381.1" height="1.4" fill="url(#r44)"/><rect x="613.1" y="127.0" width="380.9" height="1.4" fill="url(#r45)"/><rect x="613.4" y="128.0" width="380.6" height="1.4" fill="url(#r46)"/><rect x="613.6" y="129.0" width="380.4" height="1.4" fill="url(#r47)"/><rect x="613.9" y="130.0" width="380.1" height="1.4" fill="url(#r48)"/><rect x="614.1" y="131.0" width="379.9" height="1.4" fill="url(#r49)"/><rect x="614.4" y="132.0" width="379.6" height="1.4" fill="url(#r50)"/><rect x="614.7" y="133.0" width="379.3" height="1.4" fill="url(#r51)"/><rect x="615.0" y="134.0" width="379.0" height="1.4" fill="url(#r52)"/><rect x="615.2" y="135.0" width="378.8" height="1.4" fill="url(#r53)"/><rect x="615.5" y="136.0" width="378.5" height="1.4" fill="url(#r54)"/><rect x="615.8" y="137.0" width="378.2" height="1.4" fill="url(#r55)"/><rect x="616.1" y="138.0" width="377.5" height="1.4" fill="url(#r56)"/><rect x="616.4" y="139.0" width="376.2" height="1.4" fill="url(#r57)"/><rect x="616.7" y="140.0" width="374.9" height="1.4" fill="url(#r58)"/><rect x="617.1" y="141.0" width="373.6" height="1.4" fill="url(#r59)"/><rect x="617.4" y="142.0" width="372.3" height="1.4" fill="url(#r60)"/><rect x="617.7" y="143.0" width="371.1" height="1.4" fill="url(#r61)"/><rect x="618.0" y="144.0" width="369.8" height="1.4" fill="url(#r62)"/><rect x="618.4" y="145.0" width="368.5" height="1.4" fill="url(#r63)"/><rect x="618.7" y="146.0" width="367.2" height="1.4" fill="url(#r64)"/><rect x="619.0" y="147.0" width="365.8" height="1.4" fill="url(#r65)"/><rect x="619.4" y="148.0" width="364.5" height="1.4" fill="url(#r66)"/><rect x="619.7" y="149.0" width="363.2" height="1.4" fill="url(#r67)"/><rect x="620.1" y="150.0" width="361.9" height="1.4" fill="url(#r68)"/><rect x="620.4" y="151.0" width="360.6" height="1.4" fill="url(#r69)"/><rect x="620.8" y="152.0" width="359.2" height="1.4" fill="url(#r70)"/><rect x="621.1" y="153.0" width="357.9" height="1.4" fill="url(#r71)"/><rect x="621.5" y="154.0" width="356.6" height="1.4" fill="url(#r72)"/><rect x="621.9" y="155.0" width="355.2" height="1.4" fill="url(#r73)"/><rect x="622.2" y="156.0" width="353.9" height="1.4" fill="url(#r74)"/><rect x="622.6" y="157.0" width="352.6" height="1.4" fill="url(#r75)"/><rect x="623.0" y="158.0" width="351.2" height="1.4" fill="url(#r76)"/><rect x="623.4" y="159.0" width="349.8" height="1.4" fill="url(#r77)"/><rect x="623.8" y="160.0" width="348.5" height="1.4" fill="url(#r78)"/><rect x="624.1" y="161.0" width="347.1" height="1.4" fill="url(#r79)"/><rect x="624.5" y="162.0" width="345.8" height="1.4" fill="url(#r80)"/><rect x="624.9" y="163.0" width="344.4" height="1.4" fill="url(#r81)"/><rect x="625.3" y="164.0" width="343.1" height="1.4" fill="url(#r82)"/><rect x="625.7" y="165.0" width="341.7" height="1.4" fill="url(#r83)"/><rect x="626.1" y="166.0" width="340.3" height="1.4" fill="url(#r84)"/><rect x="626.5" y="167.0" width="339.0" height="1.4" fill="url(#r85)"/><rect x="626.9" y="168.0" width="337.6" height="1.4" fill="url(#r86)"/><rect x="627.3" y="169.0" width="336.2" height="1.4" fill="url(#r87)"/><rect x="627.7" y="170.0" width="334.8" height="1.4" fill="url(#r88)"/><rect x="628.1" y="171.0" width="333.4" height="1.4" fill="url(#r89)"/><rect x="628.5" y="172.0" width="332.0" height="1.4" fill="url(#r90)"/><rect x="629.0" y="173.0" width="330.7" height="1.4" fill="url(#r91)"/><rect x="629.4" y="174.0" width="329.3" height="1.4" fill="url(#r92)"/><rect x="629.8" y="175.0" width="327.9" height="1.4" fill="url(#r93)"/><rect x="630.2" y="176.0" width="326.5" height="1.4" fill="url(#r94)"/><rect x="630.6" y="177.0" width="325.1" height="1.4" fill="url(#r95)"/><rect x="631.1" y="178.0" width="323.7" height="1.4" fill="url(#r96)"/><rect x="631.5" y="179.0" width="322.3" height="1.4" fill="url(#r97)"/><rect x="631.9" y="180.0" width="320.9" height="1.4" fill="url(#r98)"/><rect x="632.4" y="181.0" width="319.5" height="1.4" fill="url(#r99)"/><rect x="632.8" y="182.0" width="318.1" height="1.4" fill="url(#r100)"/><rect x="633.3" y="183.0" width="316.7" height="1.4" fill="url(#r101)"/><rect x="633.7" y="184.0" width="315.2" height="1.4" fill="url(#r102)"/><rect x="634.1" y="185.0" width="313.8" height="1.4" fill="url(#r103)"/><rect x="634.6" y="186.0" width="312.4" height="1.4" fill="url(#r104)"/><rect x="635.0" y="187.0" width="311.0" height="1.4" fill="url(#r105)"/><rect x="635.5" y="188.0" width="309.6" height="1.4" fill="url(#r106)"/><rect x="636.0" y="189.0" width="308.1" height="1.4" fill="url(#r107)"/><rect x="636.4" y="190.0" width="306.7" height="1.4" fill="url(#r108)"/><rect x="636.9" y="191.0" width="305.2" height="1.4" fill="url(#r109)"/><rect x="637.4" y="192.0" width="303.8" height="1.4" fill="url(#r110)"/><rect x="637.8" y="193.0" width="302.4" height="1.4" fill="url(#r111)"/><rect x="638.3" y="194.0" width="300.9" height="1.4" fill="url(#r112)"/><rect x="638.8" y="195.0" width="299.5" height="1.4" fill="url(#r113)"/><rect x="639.3" y="196.0" width="298.0" height="1.4" fill="url(#r114)"/><rect x="639.7" y="197.0" width="296.6" height="1.4" fill="url(#r115)"/><rect x="640.2" y="198.0" width="295.1" height="1.4" fill="url(#r116)"/><rect x="640.7" y="199.0" width="293.6" height="1.4" fill="url(#r117)"/><rect x="641.2" y="200.0" width="292.2" height="1.4" fill="url(#r118)"/><rect x="641.7" y="201.0" width="290.7" height="1.4" fill="url(#r119)"/><rect x="642.2" y="202.0" width="289.2" height="1.4" fill="url(#r120)"/><rect x="642.7" y="203.0" width="287.8" height="1.4" fill="url(#r121)"/><rect x="643.2" y="204.0" width="286.3" height="1.4" fill="url(#r122)"/><rect x="643.8" y="205.0" width="284.8" height="1.4" fill="url(#r123)"/><rect x="644.3" y="206.0" width="283.3" height="1.4" fill="url(#r124)"/><rect x="644.8" y="207.0" width="281.8" height="1.4" fill="url(#r125)"/><rect x="645.3" y="208.0" width="280.3" height="1.4" fill="url(#r126)"/><rect x="645.8" y="209.0" width="278.8" height="1.4" fill="url(#r127)"/><rect x="646.4" y="210.0" width="277.3" height="1.4" fill="url(#r128)"/><rect x="646.9" y="211.0" width="275.8" height="1.4" fill="url(#r129)"/><rect x="647.4" y="212.0" width="274.3" height="1.4" fill="url(#r130)"/><rect x="648.0" y="213.0" width="272.8" height="1.4" fill="url(#r131)"/><rect x="648.5" y="214.0" width="271.3" height="1.4" fill="url(#r132)"/><rect x="649.0" y="215.0" width="269.8" height="1.4" fill="url(#r133)"/><rect x="649.6" y="216.0" width="268.3" height="1.4" fill="url(#r134)"/><rect x="650.1" y="217.0" width="266.8" height="1.4" fill="url(#r135)"/><rect x="650.7" y="218.0" width="265.2" height="1.4" fill="url(#r136)"/><rect x="651.2" y="219.0" width="263.7" height="1.4" fill="url(#r137)"/><rect x="651.8" y="220.0" width="262.2" height="1.4" fill="url(#r138)"/><rect x="652.4" y="221.0" width="260.6" height="1.4" fill="url(#r139)"/><rect x="652.9" y="222.0" width="259.1" height="1.4" fill="url(#r140)"/><rect x="653.5" y="223.0" width="257.6" height="1.4" fill="url(#r141)"/><rect x="654.0" y="224.0" width="256.1" height="1.4" fill="url(#r142)"/><rect x="654.6" y="225.0" width="254.5" height="1.4" fill="url(#r143)"/><rect x="655.2" y="226.0" width="253.0" height="1.4" fill="url(#r144)"/><rect x="655.8" y="227.0" width="251.4" height="1.4" fill="url(#r145)"/><rect x="656.3" y="228.0" width="249.9" height="1.4" fill="url(#r146)"/><rect x="656.9" y="229.0" width="248.3" height="1.4" fill="url(#r147)"/><rect x="657.5" y="230.0" width="246.8" height="1.4" fill="url(#r148)"/><rect x="658.1" y="231.0" width="245.2" height="1.4" fill="url(#r149)"/><rect x="658.6" y="232.0" width="243.7" height="1.4" fill="url(#r150)"/><rect x="659.2" y="233.0" width="242.1" height="1.4" fill="url(#r151)"/><rect x="659.8" y="234.0" width="240.6" height="1.4" fill="url(#r152)"/><rect x="660.4" y="235.0" width="239.0" height="1.4" fill="url(#r153)"/><rect x="661.0" y="236.0" width="237.5" height="1.4" fill="url(#r154)"/><rect x="661.6" y="237.0" width="235.9" height="1.4" fill="url(#r155)"/><rect x="662.2" y="238.0" width="234.3" height="1.4" fill="url(#r156)"/><rect x="662.8" y="239.0" width="232.8" height="1.4" fill="url(#r157)"/><rect x="663.3" y="240.0" width="231.2" height="1.4" fill="url(#r158)"/><rect x="663.9" y="241.0" width="229.6" height="1.4" fill="url(#r159)"/><rect x="664.5" y="242.0" width="228.1" height="1.4" fill="url(#r160)"/><rect x="665.1" y="243.0" width="226.5" height="1.4" fill="url(#r161)"/><rect x="665.7" y="244.0" width="224.9" height="1.4" fill="url(#r162)"/><rect x="666.3" y="245.0" width="223.4" height="1.4" fill="url(#r163)"/><rect x="666.9" y="246.0" width="221.8" height="1.4" fill="url(#r164)"/><rect x="667.6" y="247.0" width="220.2" height="1.4" fill="url(#r165)"/><rect x="668.2" y="248.0" width="218.6" height="1.4" fill="url(#r166)"/><rect x="668.8" y="249.0" width="217.0" height="1.4" fill="url(#r167)"/><rect x="669.4" y="250.0" width="215.5" height="1.4" fill="url(#r168)"/><rect x="670.0" y="251.0" width="213.9" height="1.4" fill="url(#r169)"/><rect x="670.6" y="252.0" width="212.3" height="1.4" fill="url(#r170)"/><rect x="671.2" y="253.0" width="210.7" height="1.4" fill="url(#r171)"/><rect x="671.8" y="254.0" width="209.1" height="1.4" fill="url(#r172)"/><rect x="672.5" y="255.0" width="207.5" height="1.4" fill="url(#r173)"/><rect x="673.1" y="256.0" width="205.9" height="1.4" fill="url(#r174)"/><rect x="673.7" y="257.0" width="204.3" height="1.4" fill="url(#r175)"/><rect x="674.3" y="258.0" width="202.7" height="1.4" fill="url(#r176)"/><rect x="675.0" y="259.0" width="201.1" height="1.4" fill="url(#r177)"/><rect x="675.6" y="260.0" width="199.5" height="1.4" fill="url(#r178)"/><rect x="676.3" y="261.0" width="197.9" height="1.4" fill="url(#r179)"/><rect x="676.9" y="262.0" width="196.3" height="1.4" fill="url(#r180)"/><rect x="677.5" y="263.0" width="194.7" height="1.4" fill="url(#r181)"/><rect x="678.2" y="264.0" width="193.1" height="1.4" fill="url(#r182)"/><rect x="678.8" y="265.0" width="191.4" height="1.4" fill="url(#r183)"/><rect x="679.5" y="266.0" width="189.8" height="1.4" fill="url(#r184)"/><rect x="680.1" y="267.0" width="188.2" height="1.4" fill="url(#r185)"/><rect x="680.8" y="268.0" width="186.6" height="1.4" fill="url(#r186)"/><rect x="681.4" y="269.0" width="184.9" height="1.4" fill="url(#r187)"/><rect x="682.1" y="270.0" width="183.3" height="1.4" fill="url(#r188)"/><rect x="682.8" y="271.0" width="181.7" height="1.4" fill="url(#r189)"/><rect x="683.5" y="272.0" width="180.0" height="1.4" fill="url(#r190)"/><rect x="684.1" y="273.0" width="178.4" height="1.4" fill="url(#r191)"/><rect x="684.8" y="274.0" width="176.7" height="1.4" fill="url(#r192)"/><rect x="685.5" y="275.0" width="175.1" height="1.4" fill="url(#r193)"/><rect x="686.2" y="276.0" width="173.4" height="1.4" fill="url(#r194)"/><rect x="686.9" y="277.0" width="171.8" height="1.4" fill="url(#r195)"/><rect x="687.6" y="278.0" width="170.1" height="1.4" fill="url(#r196)"/><rect x="688.3" y="279.0" width="168.4" height="1.4" fill="url(#r197)"/><rect x="688.9" y="280.0" width="166.8" height="1.4" fill="url(#r198)"/><rect x="689.6" y="281.0" width="165.1" height="1.4" fill="url(#r199)"/><rect x="690.3" y="282.0" width="163.4" height="1.4" fill="url(#r200)"/><rect x="691.1" y="283.0" width="161.7" height="1.4" fill="url(#r201)"/><rect x="691.8" y="284.0" width="160.0" height="1.4" fill="url(#r202)"/><rect x="692.5" y="285.0" width="158.3" height="1.4" fill="url(#r203)"/><rect x="693.2" y="286.0" width="156.7" height="1.4" fill="url(#r204)"/><rect x="693.9" y="287.0" width="155.0" height="1.4" fill="url(#r205)"/><rect x="694.7" y="288.0" width="153.3" height="1.4" fill="url(#r206)"/><rect x="695.4" y="289.0" width="151.5" height="1.4" fill="url(#r207)"/><rect x="696.1" y="290.0" width="149.8" height="1.4" fill="url(#r208)"/><rect x="696.9" y="291.0" width="148.1" height="1.4" fill="url(#r209)"/><rect x="697.6" y="292.0" width="146.4" height="1.4" fill="url(#r210)"/><rect x="698.4" y="293.0" width="144.7" height="1.4" fill="url(#r211)"/><rect x="699.1" y="294.0" width="143.0" height="1.4" fill="url(#r212)"/><rect x="699.9" y="295.0" width="141.2" height="1.4" fill="url(#r213)"/><rect x="700.7" y="296.0" width="139.5" height="1.4" fill="url(#r214)"/><rect x="701.4" y="297.0" width="137.8" height="1.4" fill="url(#r215)"/><rect x="702.2" y="298.0" width="136.0" height="1.4" fill="url(#r216)"/><rect x="703.0" y="299.0" width="134.2" height="1.4" fill="url(#r217)"/><rect x="703.8" y="300.0" width="132.5" height="1.4" fill="url(#r218)"/><rect x="704.6" y="301.0" width="130.7" height="1.4" fill="url(#r219)"/><rect x="705.4" y="302.0" width="129.0" height="1.4" fill="url(#r220)"/><rect x="706.2" y="303.0" width="127.2" height="1.4" fill="url(#r221)"/><rect x="707.0" y="304.0" width="125.4" height="1.4" fill="url(#r222)"/><rect x="707.8" y="305.0" width="123.6" height="1.4" fill="url(#r223)"/><rect x="708.6" y="306.0" width="121.8" height="1.4" fill="url(#r224)"/><rect x="709.4" y="307.0" width="120.0" height="1.4" fill="url(#r225)"/><rect x="710.3" y="308.0" width="118.2" height="1.4" fill="url(#r226)"/><rect x="711.1" y="309.0" width="116.4" height="1.4" fill="url(#r227)"/><rect x="712.0" y="310.0" width="114.6" height="1.4" fill="url(#r228)"/><rect x="712.8" y="311.0" width="112.8" height="1.4" fill="url(#r229)"/><rect x="713.7" y="312.0" width="110.9" height="1.4" fill="url(#r230)"/><rect x="714.5" y="313.0" width="109.1" height="1.4" fill="url(#r231)"/><rect x="715.4" y="314.0" width="107.2" height="1.4" fill="url(#r232)"/><rect x="716.3" y="315.0" width="105.4" height="1.4" fill="url(#r233)"/><rect x="717.2" y="316.0" width="103.5" height="1.4" fill="url(#r234)"/><rect x="718.1" y="317.0" width="101.6" height="1.4" fill="url(#r235)"/><rect x="719.0" y="318.0" width="99.7" height="1.4" fill="url(#r236)"/><rect x="720.0" y="319.0" width="97.8" height="1.4" fill="url(#r237)"/><rect x="720.9" y="320.0" width="95.9" height="1.4" fill="url(#r238)"/><rect x="721.9" y="321.0" width="94.0" height="1.4" fill="url(#r239)"/><rect x="722.9" y="322.0" width="92.0" height="1.4" fill="url(#r240)"/><rect x="723.9" y="323.0" width="90.1" height="1.4" fill="url(#r241)"/><rect x="724.9" y="324.0" width="88.1" height="1.4" fill="url(#r242)"/><rect x="725.9" y="325.0" width="86.1" height="1.4" fill="url(#r243)"/><rect x="726.9" y="326.0" width="84.1" height="1.4" fill="url(#r244)"/><rect x="728.0" y="327.0" width="82.1" height="1.4" fill="url(#r245)"/><rect x="729.0" y="328.0" width="80.1" height="1.4" fill="url(#r246)"/><rect x="730.1" y="329.0" width="78.0" height="1.4" fill="url(#r247)"/><rect x="731.2" y="330.0" width="76.0" height="1.4" fill="url(#r248)"/><rect x="732.3" y="331.0" width="73.9" height="1.4" fill="url(#r249)"/><rect x="733.4" y="332.0" width="71.8" height="1.4" fill="url(#r250)"/><rect x="734.5" y="333.0" width="69.7" height="1.4" fill="url(#r251)"/><rect x="735.6" y="334.0" width="67.6" height="1.4" fill="url(#r252)"/><rect x="736.8" y="335.0" width="65.5" height="1.4" fill="url(#r253)"/><rect x="737.9" y="336.0" width="63.4" height="1.4" fill="url(#r254)"/><rect x="739.1" y="337.0" width="61.3" height="1.4" fill="url(#r255)"/><rect x="740.2" y="338.0" width="59.1" height="1.4" fill="url(#r256)"/><rect x="741.4" y="339.0" width="57.0" height="1.4" fill="url(#r257)"/><rect x="742.6" y="340.0" width="54.8" height="1.4" fill="url(#r258)"/><rect x="743.8" y="341.0" width="52.6" height="1.4" fill="url(#r259)"/><rect x="745.0" y="342.0" width="50.4" height="1.4" fill="url(#r260)"/><rect x="746.3" y="343.0" width="48.3" height="1.4" fill="url(#r261)"/><rect x="747.5" y="344.0" width="46.1" height="1.4" fill="url(#r262)"/><rect x="748.7" y="345.0" width="43.9" height="1.4" fill="url(#r263)"/><rect x="749.9" y="346.0" width="41.7" height="1.4" fill="url(#r264)"/><rect x="751.1" y="347.0" width="39.5" height="1.4" fill="url(#r265)"/><rect x="752.3" y="348.0" width="37.4" height="1.4" fill="url(#r266)"/><rect x="753.5" y="349.0" width="35.2" height="1.4" fill="url(#r267)"/><rect x="754.7" y="350.0" width="33.0" height="1.4" fill="url(#r268)"/><rect x="755.9" y="351.0" width="30.8" height="1.4" fill="url(#r269)"/><rect x="757.1" y="352.0" width="28.6" height="1.4" fill="url(#r270)"/><rect x="758.3" y="353.0" width="26.5" height="1.4" fill="url(#r271)"/><rect x="759.5" y="354.0" width="24.3" height="1.4" fill="url(#r272)"/><rect x="760.6" y="355.0" width="22.2" height="1.4" fill="url(#r273)"/><rect x="761.8" y="356.0" width="20.1" height="1.4" fill="url(#r274)"/><rect x="763.0" y="357.0" width="17.9" height="1.4" fill="url(#r275)"/><rect x="764.2" y="358.0" width="15.7" height="1.4" fill="url(#r276)"/><rect x="765.5" y="359.0" width="13.5" height="1.4" fill="url(#r277)"/><rect x="766.8" y="360.0" width="11.2" height="1.4" fill="url(#r278)"/><rect x="768.1" y="361.0" width="8.9" height="1.4" fill="url(#r279)"/><rect x="769.6" y="362.0" width="6.5" height="1.4" fill="url(#r280)"/></g>
<g clip-path="url(#gamut)"><rect x="688.8" y="94.0" width="7.2" height="1.4" fill="url(#r281)"/><rect x="688.9" y="95.0" width="17.8" height="1.4" fill="url(#r282)"/><rect x="689.0" y="96.0" width="28.3" height="1.4" fill="url(#r283)"/><rect x="689.2" y="97.0" width="38.8" height="1.4" fill="url(#r284)"/><rect x="689.3" y="98.0" width="49.4" height="1.4" fill="url(#r285)"/><rect x="689.5" y="99.0" width="59.9" height="1.4" fill="url(#r286)"/><rect x="689.7" y="100.0" width="70.4" height="1.4" fill="url(#r287)"/><rect x="689.8" y="101.0" width="80.9" height="1.4" fill="url(#r288)"/><rect x="690.0" y="102.0" width="91.4" height="1.4" fill="url(#r289)"/><rect x="690.1" y="103.0" width="101.9" height="1.4" fill="url(#r290)"/><rect x="690.3" y="104.0" width="112.5" height="1.4" fill="url(#r291)"/><rect x="690.5" y="105.0" width="123.0" height="1.4" fill="url(#r292)"/><rect x="690.6" y="106.0" width="133.5" height="1.4" fill="url(#r293)"/><rect x="690.8" y="107.0" width="144.0" height="1.4" fill="url(#r294)"/><rect x="691.0" y="108.0" width="154.5" height="1.4" fill="url(#r295)"/><rect x="691.1" y="109.0" width="165.0" height="1.4" fill="url(#r296)"/><rect x="691.3" y="110.0" width="175.5" height="1.4" fill="url(#r297)"/><rect x="691.4" y="111.0" width="186.1" height="1.4" fill="url(#r298)"/><rect x="691.6" y="112.0" width="196.6" height="1.4" fill="url(#r299)"/><rect x="691.8" y="113.0" width="207.1" height="1.4" fill="url(#r300)"/><rect x="691.9" y="114.0" width="207.2" height="1.4" fill="url(#r301)"/><rect x="692.1" y="115.0" width="206.1" height="1.4" fill="url(#r302)"/><rect x="692.3" y="116.0" width="205.0" height="1.4" fill="url(#r303)"/><rect x="692.4" y="117.0" width="203.8" height="1.4" fill="url(#r304)"/><rect x="692.6" y="118.0" width="202.7" height="1.4" fill="url(#r305)"/><rect x="692.7" y="119.0" width="201.6" height="1.4" fill="url(#r306)"/><rect x="692.9" y="120.0" width="200.4" height="1.4" fill="url(#r307)"/><rect x="693.1" y="121.0" width="199.3" height="1.4" fill="url(#r308)"/><rect x="693.2" y="122.0" width="198.1" height="1.4" fill="url(#r309)"/><rect x="693.4" y="123.0" width="197.0" height="1.4" fill="url(#r310)"/><rect x="693.5" y="124.0" width="195.9" height="1.4" fill="url(#r311)"/><rect x="693.7" y="125.0" width="194.7" height="1.4" fill="url(#r312)"/><rect x="693.9" y="126.0" width="193.6" height="1.4" fill="url(#r313)"/><rect x="694.0" y="127.0" width="192.4" height="1.4" fill="url(#r314)"/><rect x="694.2" y="128.0" width="191.3" height="1.4" fill="url(#r315)"/><rect x="694.4" y="129.0" width="190.1" height="1.4" fill="url(#r316)"/><rect x="694.5" y="130.0" width="189.0" height="1.4" fill="url(#r317)"/><rect x="694.7" y="131.0" width="187.9" height="1.4" fill="url(#r318)"/><rect x="694.8" y="132.0" width="186.7" height="1.4" fill="url(#r319)"/><rect x="695.0" y="133.0" width="185.6" height="1.4" fill="url(#r320)"/><rect x="695.2" y="134.0" width="184.4" height="1.4" fill="url(#r321)"/><rect x="695.3" y="135.0" width="183.3" height="1.4" fill="url(#r322)"/><rect x="695.5" y="136.0" width="182.2" height="1.4" fill="url(#r323)"/><rect x="695.7" y="137.0" width="181.0" height="1.4" fill="url(#r324)"/><rect x="695.8" y="138.0" width="179.9" height="1.4" fill="url(#r325)"/><rect x="696.0" y="139.0" width="178.7" height="1.4" fill="url(#r326)"/><rect x="696.1" y="140.0" width="177.6" height="1.4" fill="url(#r327)"/><rect x="696.3" y="141.0" width="176.5" height="1.4" fill="url(#r328)"/><rect x="696.5" y="142.0" width="175.3" height="1.4" fill="url(#r329)"/><rect x="696.6" y="143.0" width="174.2" height="1.4" fill="url(#r330)"/><rect x="696.8" y="144.0" width="173.0" height="1.4" fill="url(#r331)"/><rect x="696.9" y="145.0" width="171.9" height="1.4" fill="url(#r332)"/><rect x="697.1" y="146.0" width="170.7" height="1.4" fill="url(#r333)"/><rect x="697.3" y="147.0" width="169.6" height="1.4" fill="url(#r334)"/><rect x="697.4" y="148.0" width="168.5" height="1.4" fill="url(#r335)"/><rect x="697.6" y="149.0" width="167.3" height="1.4" fill="url(#r336)"/><rect x="697.8" y="150.0" width="166.2" height="1.4" fill="url(#r337)"/><rect x="697.9" y="151.0" width="165.0" height="1.4" fill="url(#r338)"/><rect x="698.1" y="152.0" width="163.9" height="1.4" fill="url(#r339)"/><rect x="698.2" y="153.0" width="162.8" height="1.4" fill="url(#r340)"/><rect x="698.4" y="154.0" width="161.6" height="1.4" fill="url(#r341)"/><rect x="698.6" y="155.0" width="160.5" height="1.4" fill="url(#r342)"/><rect x="698.7" y="156.0" width="159.3" height="1.4" fill="url(#r343)"/><rect x="698.9" y="157.0" width="158.2" height="1.4" fill="url(#r344)"/><rect x="699.0" y="158.0" width="157.0" height="1.4" fill="url(#r345)"/><rect x="699.2" y="159.0" width="155.9" height="1.4" fill="url(#r346)"/><rect x="699.4" y="160.0" width="154.8" height="1.4" fill="url(#r347)"/><rect x="699.5" y="161.0" width="153.6" height="1.4" fill="url(#r348)"/><rect x="699.7" y="162.0" width="152.5" height="1.4" fill="url(#r349)"/><rect x="699.9" y="163.0" width="151.3" height="1.4" fill="url(#r350)"/><rect x="700.0" y="164.0" width="150.2" height="1.4" fill="url(#r351)"/><rect x="700.2" y="165.0" width="149.1" height="1.4" fill="url(#r352)"/><rect x="700.3" y="166.0" width="147.9" height="1.4" fill="url(#r353)"/><rect x="700.5" y="167.0" width="146.8" height="1.4" fill="url(#r354)"/><rect x="700.7" y="168.0" width="145.6" height="1.4" fill="url(#r355)"/><rect x="700.8" y="169.0" width="144.5" height="1.4" fill="url(#r356)"/><rect x="701.0" y="170.0" width="143.4" height="1.4" fill="url(#r357)"/><rect x="701.2" y="171.0" width="142.2" height="1.4" fill="url(#r358)"/><rect x="701.3" y="172.0" width="141.1" height="1.4" fill="url(#r359)"/><rect x="701.5" y="173.0" width="139.9" height="1.4" fill="url(#r360)"/><rect x="701.6" y="174.0" width="138.8" height="1.4" fill="url(#r361)"/><rect x="701.8" y="175.0" width="137.6" height="1.4" fill="url(#r362)"/><rect x="702.0" y="176.0" width="136.5" height="1.4" fill="url(#r363)"/><rect x="702.1" y="177.0" width="135.4" height="1.4" fill="url(#r364)"/><rect x="702.3" y="178.0" width="134.2" height="1.4" fill="url(#r365)"/><rect x="702.4" y="179.0" width="133.1" height="1.4" fill="url(#r366)"/><rect x="702.6" y="180.0" width="131.9" height="1.4" fill="url(#r367)"/><rect x="702.8" y="181.0" width="130.8" height="1.4" fill="url(#r368)"/><rect x="702.9" y="182.0" width="129.7" height="1.4" fill="url(#r369)"/><rect x="703.1" y="183.0" width="128.5" height="1.4" fill="url(#r370)"/><rect x="703.3" y="184.0" width="127.4" height="1.4" fill="url(#r371)"/><rect x="703.4" y="185.0" width="126.2" height="1.4" fill="url(#r372)"/><rect x="703.6" y="186.0" width="125.1" height="1.4" fill="url(#r373)"/><rect x="703.7" y="187.0" width="124.0" height="1.4" fill="url(#r374)"/><rect x="703.9" y="188.0" width="122.8" height="1.4" fill="url(#r375)"/><rect x="704.1" y="189.0" width="121.7" height="1.4" fill="url(#r376)"/><rect x="704.2" y="190.0" width="120.5" height="1.4" fill="url(#r377)"/><rect x="704.4" y="191.0" width="119.4" height="1.4" fill="url(#r378)"/><rect x="704.6" y="192.0" width="118.2" height="1.4" fill="url(#r379)"/><rect x="704.7" y="193.0" width="117.1" height="1.4" fill="url(#r380)"/><rect x="704.9" y="194.0" width="116.0" height="1.4" fill="url(#r381)"/><rect x="705.0" y="195.0" width="114.8" height="1.4" fill="url(#r382)"/><rect x="705.2" y="196.0" width="113.7" height="1.4" fill="url(#r383)"/><rect x="705.4" y="197.0" width="112.5" height="1.4" fill="url(#r384)"/><rect x="705.5" y="198.0" width="111.4" height="1.4" fill="url(#r385)"/><rect x="705.7" y="199.0" width="110.3" height="1.4" fill="url(#r386)"/><rect x="705.8" y="200.0" width="109.1" height="1.4" fill="url(#r387)"/><rect x="706.0" y="201.0" width="108.0" height="1.4" fill="url(#r388)"/><rect x="706.2" y="202.0" width="106.8" height="1.4" fill="url(#r389)"/><rect x="706.3" y="203.0" width="105.7" height="1.4" fill="url(#r390)"/><rect x="706.5" y="204.0" width="104.6" height="1.4" fill="url(#r391)"/><rect x="706.7" y="205.0" width="103.4" height="1.4" fill="url(#r392)"/><rect x="706.8" y="206.0" width="102.3" height="1.4" fill="url(#r393)"/><rect x="707.0" y="207.0" width="101.1" height="1.4" fill="url(#r394)"/><rect x="707.1" y="208.0" width="100.0" height="1.4" fill="url(#r395)"/><rect x="707.3" y="209.0" width="98.8" height="1.4" fill="url(#r396)"/><rect x="707.5" y="210.0" width="97.7" height="1.4" fill="url(#r397)"/><rect x="707.6" y="211.0" width="96.6" height="1.4" fill="url(#r398)"/><rect x="707.8" y="212.0" width="95.4" height="1.4" fill="url(#r399)"/><rect x="708.0" y="213.0" width="94.3" height="1.4" fill="url(#r400)"/><rect x="708.1" y="214.0" width="93.1" height="1.4" fill="url(#r401)"/><rect x="708.3" y="215.0" width="92.0" height="1.4" fill="url(#r402)"/><rect x="708.4" y="216.0" width="90.9" height="1.4" fill="url(#r403)"/><rect x="708.6" y="217.0" width="89.7" height="1.4" fill="url(#r404)"/><rect x="708.8" y="218.0" width="88.6" height="1.4" fill="url(#r405)"/><rect x="708.9" y="219.0" width="87.4" height="1.4" fill="url(#r406)"/><rect x="709.1" y="220.0" width="86.3" height="1.4" fill="url(#r407)"/><rect x="709.2" y="221.0" width="85.2" height="1.4" fill="url(#r408)"/><rect x="709.4" y="222.0" width="84.0" height="1.4" fill="url(#r409)"/><rect x="709.6" y="223.0" width="82.9" height="1.4" fill="url(#r410)"/><rect x="709.7" y="224.0" width="81.7" height="1.4" fill="url(#r411)"/><rect x="709.9" y="225.0" width="80.6" height="1.4" fill="url(#r412)"/><rect x="710.1" y="226.0" width="79.4" height="1.4" fill="url(#r413)"/><rect x="710.2" y="227.0" width="78.3" height="1.4" fill="url(#r414)"/><rect x="710.4" y="228.0" width="77.2" height="1.4" fill="url(#r415)"/><rect x="710.5" y="229.0" width="76.0" height="1.4" fill="url(#r416)"/><rect x="710.7" y="230.0" width="74.9" height="1.4" fill="url(#r417)"/><rect x="710.9" y="231.0" width="73.7" height="1.4" fill="url(#r418)"/><rect x="711.0" y="232.0" width="72.6" height="1.4" fill="url(#r419)"/><rect x="711.2" y="233.0" width="71.5" height="1.4" fill="url(#r420)"/><rect x="711.4" y="234.0" width="70.3" height="1.4" fill="url(#r421)"/><rect x="711.5" y="235.0" width="69.2" height="1.4" fill="url(#r422)"/><rect x="711.7" y="236.0" width="68.0" height="1.4" fill="url(#r423)"/><rect x="711.8" y="237.0" width="66.9" height="1.4" fill="url(#r424)"/><rect x="712.0" y="238.0" width="65.8" height="1.4" fill="url(#r425)"/><rect x="712.2" y="239.0" width="64.6" height="1.4" fill="url(#r426)"/><rect x="712.3" y="240.0" width="63.5" height="1.4" fill="url(#r427)"/><rect x="712.5" y="241.0" width="62.3" height="1.4" fill="url(#r428)"/><rect x="712.6" y="242.0" width="61.2" height="1.4" fill="url(#r429)"/><rect x="712.8" y="243.0" width="60.0" height="1.4" fill="url(#r430)"/><rect x="713.0" y="244.0" width="58.9" height="1.4" fill="url(#r431)"/><rect x="713.1" y="245.0" width="57.8" height="1.4" fill="url(#r432)"/><rect x="713.3" y="246.0" width="56.6" height="1.4" fill="url(#r433)"/><rect x="713.5" y="247.0" width="55.5" height="1.4" fill="url(#r434)"/><rect x="713.6" y="248.0" width="54.3" height="1.4" fill="url(#r435)"/><rect x="713.8" y="249.0" width="53.2" height="1.4" fill="url(#r436)"/><rect x="713.9" y="250.0" width="52.1" height="1.4" fill="url(#r437)"/><rect x="714.1" y="251.0" width="50.9" height="1.4" fill="url(#r438)"/><rect x="714.3" y="252.0" width="49.8" height="1.4" fill="url(#r439)"/><rect x="714.4" y="253.0" width="48.6" height="1.4" fill="url(#r440)"/><rect x="714.6" y="254.0" width="47.5" height="1.4" fill="url(#r441)"/><rect x="714.8" y="255.0" width="46.3" height="1.4" fill="url(#r442)"/><rect x="714.9" y="256.0" width="45.2" height="1.4" fill="url(#r443)"/><rect x="715.1" y="257.0" width="44.1" height="1.4" fill="url(#r444)"/><rect x="715.2" y="258.0" width="42.9" height="1.4" fill="url(#r445)"/><rect x="715.4" y="259.0" width="41.8" height="1.4" fill="url(#r446)"/><rect x="715.6" y="260.0" width="40.6" height="1.4" fill="url(#r447)"/><rect x="715.7" y="261.0" width="39.5" height="1.4" fill="url(#r448)"/><rect x="715.9" y="262.0" width="38.4" height="1.4" fill="url(#r449)"/><rect x="716.0" y="263.0" width="37.2" height="1.4" fill="url(#r450)"/><rect x="716.2" y="264.0" width="36.1" height="1.4" fill="url(#r451)"/><rect x="716.4" y="265.0" width="34.9" height="1.4" fill="url(#r452)"/><rect x="716.5" y="266.0" width="33.8" height="1.4" fill="url(#r453)"/><rect x="716.7" y="267.0" width="32.7" height="1.4" fill="url(#r454)"/><rect x="716.9" y="268.0" width="31.5" height="1.4" fill="url(#r455)"/><rect x="717.0" y="269.0" width="30.4" height="1.4" fill="url(#r456)"/><rect x="717.2" y="270.0" width="29.2" height="1.4" fill="url(#r457)"/><rect x="717.3" y="271.0" width="28.1" height="1.4" fill="url(#r458)"/><rect x="717.5" y="272.0" width="26.9" height="1.4" fill="url(#r459)"/><rect x="717.7" y="273.0" width="25.8" height="1.4" fill="url(#r460)"/><rect x="717.8" y="274.0" width="24.7" height="1.4" fill="url(#r461)"/><rect x="718.0" y="275.0" width="23.5" height="1.4" fill="url(#r462)"/><rect x="718.2" y="276.0" width="22.4" height="1.4" fill="url(#r463)"/><rect x="718.3" y="277.0" width="21.2" height="1.4" fill="url(#r464)"/><rect x="718.5" y="278.0" width="20.1" height="1.4" fill="url(#r465)"/><rect x="718.6" y="279.0" width="19.0" height="1.4" fill="url(#r466)"/><rect x="718.8" y="280.0" width="17.8" height="1.4" fill="url(#r467)"/><rect x="719.0" y="281.0" width="16.7" height="1.4" fill="url(#r468)"/><rect x="719.1" y="282.0" width="15.5" height="1.4" fill="url(#r469)"/><rect x="719.3" y="283.0" width="14.4" height="1.4" fill="url(#r470)"/><rect x="719.4" y="284.0" width="13.3" height="1.4" fill="url(#r471)"/><rect x="719.6" y="285.0" width="12.1" height="1.4" fill="url(#r472)"/><rect x="719.8" y="286.0" width="11.0" height="1.4" fill="url(#r473)"/><rect x="719.9" y="287.0" width="9.8" height="1.4" fill="url(#r474)"/><rect x="720.1" y="288.0" width="8.7" height="1.4" fill="url(#r475)"/><rect x="720.3" y="289.0" width="7.5" height="1.4" fill="url(#r476)"/><rect x="720.4" y="290.0" width="6.4" height="1.4" fill="url(#r477)"/><rect x="720.6" y="291.0" width="5.3" height="1.4" fill="url(#r478)"/><rect x="720.7" y="292.0" width="4.1" height="1.4" fill="url(#r479)"/></g>
</g>
<line x1="611.00" y1="76.40" x2="611.00" y2="371.90" stroke="#9c9c9c" stroke-width="0.9"/>
<line x1="611.00" y1="76.40" x2="994.00" y2="76.40" stroke="#9c9c9c" stroke-width="0.9"/>
<line x1="994.00" y1="76.40" x2="994.00" y2="371.90" stroke="#9c9c9c" stroke-width="0.9"/>
<line x1="607.60" y1="371.50" x2="994.00" y2="371.50" stroke="#9c9c9c" stroke-width="0.9"/>
<line x1="610.90" y1="371.50" x2="610.90" y2="375.10" stroke="#b0b0b0" stroke-width="1.0"/>
<text x="608.43" y="384.50" font-size="10.03" textLength="4.95" lengthAdjust="spacingAndGlyphs" fill="#d8d8d8">0</text>
<text x="602.15" y="375.60" font-size="10.03" textLength="5.05" lengthAdjust="spacingAndGlyphs" fill="#d8d8d8">0</text>
<line x1="642.74" y1="371.50" x2="642.74" y2="375.10" stroke="#b0b0b0" stroke-width="1.0"/>
<text x="634.06" y="384.50" font-size="10.03" textLength="17.35" lengthAdjust="spacingAndGlyphs" fill="#d8d8d8">0.05</text>
<line x1="607.60" y1="346.94" x2="611.00" y2="346.94" stroke="#b0b0b0" stroke-width="1.0"/>
<text x="589.50" y="351.04" font-size="10.03" textLength="17.70" lengthAdjust="spacingAndGlyphs" fill="#d8d8d8">0.05</text>
<line x1="674.57" y1="371.50" x2="674.57" y2="375.10" stroke="#b0b0b0" stroke-width="1.0"/>
<text x="668.37" y="384.50" font-size="10.03" textLength="12.40" lengthAdjust="spacingAndGlyphs" fill="#d8d8d8">0.1</text>
<line x1="607.60" y1="322.38" x2="611.00" y2="322.38" stroke="#b0b0b0" stroke-width="1.0"/>
<text x="594.55" y="326.48" font-size="10.03" textLength="12.65" lengthAdjust="spacingAndGlyphs" fill="#d8d8d8">0.1</text>
<line x1="706.41" y1="371.50" x2="706.41" y2="375.10" stroke="#b0b0b0" stroke-width="1.0"/>
<text x="697.73" y="384.50" font-size="10.03" textLength="17.35" lengthAdjust="spacingAndGlyphs" fill="#d8d8d8">0.15</text>
<line x1="607.60" y1="297.82" x2="611.00" y2="297.82" stroke="#b0b0b0" stroke-width="1.0"/>
<text x="589.50" y="301.92" font-size="10.03" textLength="17.70" lengthAdjust="spacingAndGlyphs" fill="#d8d8d8">0.15</text>
<line x1="738.24" y1="371.50" x2="738.24" y2="375.10" stroke="#b0b0b0" stroke-width="1.0"/>
<text x="732.04" y="384.50" font-size="10.03" textLength="12.40" lengthAdjust="spacingAndGlyphs" fill="#d8d8d8">0.2</text>
<line x1="607.60" y1="273.26" x2="611.00" y2="273.26" stroke="#b0b0b0" stroke-width="1.0"/>
<text x="594.55" y="277.36" font-size="10.03" textLength="12.65" lengthAdjust="spacingAndGlyphs" fill="#d8d8d8">0.2</text>
<line x1="770.08" y1="371.50" x2="770.08" y2="375.10" stroke="#b0b0b0" stroke-width="1.0"/>
<text x="761.40" y="384.50" font-size="10.03" textLength="17.35" lengthAdjust="spacingAndGlyphs" fill="#d8d8d8">0.25</text>
<line x1="607.60" y1="248.70" x2="611.00" y2="248.70" stroke="#b0b0b0" stroke-width="1.0"/>
<text x="589.50" y="252.80" font-size="10.03" textLength="17.70" lengthAdjust="spacingAndGlyphs" fill="#d8d8d8">0.25</text>
<line x1="801.91" y1="371.50" x2="801.91" y2="375.10" stroke="#b0b0b0" stroke-width="1.0"/>
<text x="795.71" y="384.50" font-size="10.03" textLength="12.40" lengthAdjust="spacingAndGlyphs" fill="#d8d8d8">0.3</text>
<line x1="607.60" y1="224.14" x2="611.00" y2="224.14" stroke="#b0b0b0" stroke-width="1.0"/>
<text x="594.55" y="228.24" font-size="10.03" textLength="12.65" lengthAdjust="spacingAndGlyphs" fill="#d8d8d8">0.3</text>
<line x1="833.75" y1="371.50" x2="833.75" y2="375.10" stroke="#b0b0b0" stroke-width="1.0"/>
<text x="825.07" y="384.50" font-size="10.03" textLength="17.35" lengthAdjust="spacingAndGlyphs" fill="#d8d8d8">0.35</text>
<line x1="607.60" y1="199.58" x2="611.00" y2="199.58" stroke="#b0b0b0" stroke-width="1.0"/>
<text x="589.50" y="203.68" font-size="10.03" textLength="17.70" lengthAdjust="spacingAndGlyphs" fill="#d8d8d8">0.35</text>
<line x1="865.58" y1="371.50" x2="865.58" y2="375.10" stroke="#b0b0b0" stroke-width="1.0"/>
<text x="859.38" y="384.50" font-size="10.03" textLength="12.40" lengthAdjust="spacingAndGlyphs" fill="#d8d8d8">0.4</text>
<line x1="607.60" y1="175.02" x2="611.00" y2="175.02" stroke="#b0b0b0" stroke-width="1.0"/>
<text x="594.55" y="179.12" font-size="10.03" textLength="12.65" lengthAdjust="spacingAndGlyphs" fill="#d8d8d8">0.4</text>
<line x1="897.42" y1="371.50" x2="897.42" y2="375.10" stroke="#b0b0b0" stroke-width="1.0"/>
<text x="888.74" y="384.50" font-size="10.03" textLength="17.35" lengthAdjust="spacingAndGlyphs" fill="#d8d8d8">0.45</text>
<line x1="607.60" y1="150.46" x2="611.00" y2="150.46" stroke="#b0b0b0" stroke-width="1.0"/>
<text x="589.50" y="154.56" font-size="10.03" textLength="17.70" lengthAdjust="spacingAndGlyphs" fill="#d8d8d8">0.45</text>
<line x1="929.25" y1="371.50" x2="929.25" y2="375.10" stroke="#b0b0b0" stroke-width="1.0"/>
<text x="923.05" y="384.50" font-size="10.03" textLength="12.40" lengthAdjust="spacingAndGlyphs" fill="#d8d8d8">0.5</text>
<line x1="607.60" y1="125.90" x2="611.00" y2="125.90" stroke="#b0b0b0" stroke-width="1.0"/>
<text x="594.55" y="130.00" font-size="10.03" textLength="12.65" lengthAdjust="spacingAndGlyphs" fill="#d8d8d8">0.5</text>
<line x1="961.09" y1="371.50" x2="961.09" y2="375.10" stroke="#b0b0b0" stroke-width="1.0"/>
<text x="952.41" y="384.50" font-size="10.03" textLength="17.35" lengthAdjust="spacingAndGlyphs" fill="#d8d8d8">0.55</text>
<line x1="607.60" y1="101.34" x2="611.00" y2="101.34" stroke="#b0b0b0" stroke-width="1.0"/>
<text x="589.50" y="105.44" font-size="10.03" textLength="17.70" lengthAdjust="spacingAndGlyphs" fill="#d8d8d8">0.55</text>
<g id="cie-inset">
<rect x="863.20" y="280.50" width="127.60" height="85.80" fill="url(#ins)"/>
<path d="M863.2 280.5 L990.8 280.5 L990.8 357.6 L863.2 289.3 Z" fill="#000" fill-opacity="0.41"/>
<rect x="863.20" y="280.50" width="127.60" height="85.80" fill="none" stroke="#7a7a7a" stroke-width="1"/>
<rect x="922.60" y="319.00" width="7.60" height="7.60" fill="none" stroke="#f4f4f4" stroke-width="0.8"/>
<circle cx="923.1" cy="329.6" r="2.3" fill="#a0a000" stroke="#101010" stroke-opacity="0.85" stroke-width="0.9"/>
</g>
<g id="cie-markers">
<rect x="686.10" y="90.10" width="7.40" height="7.40" fill="none" stroke="#ffffff" stroke-width="0.95" stroke-opacity="0.95"/>
<rect x="692.00" y="96.00" width="7.40" height="7.40" fill="none" stroke="#ffffff" stroke-width="0.95" stroke-opacity="0.95"/>
<rect x="699.10" y="103.40" width="7.40" height="7.40" fill="none" stroke="#ffffff" stroke-width="0.95" stroke-opacity="0.95"/>
<rect x="708.50" y="112.50" width="7.40" height="7.40" fill="none" stroke="#ffffff" stroke-width="0.95" stroke-opacity="0.95"/>
<rect x="719.00" y="122.60" width="7.40" height="7.40" fill="none" stroke="#ffffff" stroke-width="0.95" stroke-opacity="0.95"/>
<rect x="736.80" y="94.60" width="7.40" height="7.40" fill="none" stroke="#ffffff" stroke-width="0.95" stroke-opacity="0.95"/>
<rect x="736.50" y="101.30" width="7.40" height="7.40" fill="none" stroke="#ffffff" stroke-width="0.95" stroke-opacity="0.95"/>
<rect x="735.80" y="108.30" width="7.40" height="7.40" fill="none" stroke="#ffffff" stroke-width="0.95" stroke-opacity="0.95"/>
<rect x="735.10" y="116.00" width="7.40" height="7.40" fill="none" stroke="#ffffff" stroke-width="0.95" stroke-opacity="0.95"/>
<rect x="734.90" y="125.80" width="7.40" height="7.40" fill="none" stroke="#ffffff" stroke-width="0.95" stroke-opacity="0.95"/>
<rect x="694.80" y="143.10" width="7.40" height="7.40" fill="none" stroke="#ffffff" stroke-width="0.95" stroke-opacity="0.95"/>
<rect x="702.20" y="141.90" width="7.40" height="7.40" fill="none" stroke="#ffffff" stroke-width="0.95" stroke-opacity="0.95"/>
<rect x="709.90" y="141.20" width="7.40" height="7.40" fill="none" stroke="#ffffff" stroke-width="0.95" stroke-opacity="0.95"/>
<rect x="717.20" y="139.80" width="7.40" height="7.40" fill="none" stroke="#ffffff" stroke-width="0.95" stroke-opacity="0.95"/>
<rect x="725.30" y="138.20" width="7.40" height="7.40" fill="none" stroke="#ffffff" stroke-width="0.95" stroke-opacity="0.95"/>
<rect x="765.50" y="130.80" width="7.40" height="7.40" fill="none" stroke="#ffffff" stroke-width="0.95" stroke-opacity="0.95"/>
<rect x="801.60" y="125.60" width="7.40" height="7.40" fill="none" stroke="#ffffff" stroke-width="0.95" stroke-opacity="0.95"/>
<rect x="833.10" y="119.60" width="7.40" height="7.40" fill="none" stroke="#ffffff" stroke-width="0.95" stroke-opacity="0.95"/>
<rect x="866.70" y="114.80" width="7.40" height="7.40" fill="none" stroke="#ffffff" stroke-width="0.95" stroke-opacity="0.95"/>
<rect x="894.40" y="109.90" width="7.40" height="7.40" fill="none" stroke="#ffffff" stroke-width="0.95" stroke-opacity="0.95"/>
<rect x="743.80" y="147.30" width="7.40" height="7.40" fill="none" stroke="#ffffff" stroke-width="0.95" stroke-opacity="0.95"/>
<rect x="756.80" y="160.40" width="7.40" height="7.40" fill="none" stroke="#ffffff" stroke-width="0.95" stroke-opacity="0.95"/>
<rect x="769.40" y="172.70" width="7.40" height="7.40" fill="none" stroke="#ffffff" stroke-width="0.95" stroke-opacity="0.95"/>
<rect x="784.80" y="187.90" width="7.40" height="7.40" fill="none" stroke="#ffffff" stroke-width="0.95" stroke-opacity="0.95"/>
<rect x="801.40" y="204.50" width="7.40" height="7.40" fill="none" stroke="#ffffff" stroke-width="0.95" stroke-opacity="0.95"/>
<rect x="731.60" y="157.10" width="7.40" height="7.40" fill="none" stroke="#ffffff" stroke-width="0.95" stroke-opacity="0.95"/>
<rect x="728.80" y="180.70" width="7.40" height="7.40" fill="none" stroke="#ffffff" stroke-width="0.95" stroke-opacity="0.95"/>
<rect x="726.10" y="211.00" width="7.40" height="7.40" fill="none" stroke="#ffffff" stroke-width="0.95" stroke-opacity="0.95"/>
<rect x="722.80" y="248.60" width="7.40" height="7.40" fill="none" stroke="#ffffff" stroke-width="0.95" stroke-opacity="0.95"/>
<rect x="718.80" y="289.40" width="7.40" height="7.40" fill="none" stroke="#ffffff" stroke-width="0.95" stroke-opacity="0.95"/>
<rect x="732.70" y="136.70" width="7.20" height="7.20" fill="none" stroke="#101010" stroke-width="1.2"/>
<circle cx="689.8" cy="94.5" r="2.55" fill="#00ba00" stroke="#000" stroke-opacity="0.75" stroke-width="0.75"/>
<circle cx="696.4" cy="100.4" r="2.55" fill="#3eba3e" stroke="#000" stroke-opacity="0.75" stroke-width="0.75"/>
<circle cx="703.0" cy="107.8" r="2.55" fill="#5cba5c" stroke="#000" stroke-opacity="0.75" stroke-width="0.75"/>
<circle cx="712.9" cy="116.8" r="2.55" fill="#76ba76" stroke="#000" stroke-opacity="0.75" stroke-width="0.75"/>
<circle cx="723.4" cy="126.7" r="2.55" fill="#8eba8e" stroke="#000" stroke-opacity="0.75" stroke-width="0.75"/>
<circle cx="741.1" cy="99.4" r="2.55" fill="#baba00" stroke="#000" stroke-opacity="0.75" stroke-width="0.75"/>
<circle cx="740.5" cy="105.4" r="2.55" fill="#baba3e" stroke="#000" stroke-opacity="0.75" stroke-width="0.75"/>
<circle cx="739.8" cy="112.0" r="2.55" fill="#baba5c" stroke="#000" stroke-opacity="0.75" stroke-width="0.75"/>
<circle cx="738.8" cy="120.0" r="2.55" fill="#baba76" stroke="#000" stroke-opacity="0.75" stroke-width="0.75"/>
<circle cx="738.8" cy="130.0" r="2.55" fill="#baba8e" stroke="#000" stroke-opacity="0.75" stroke-width="0.75"/>
<circle cx="698.6" cy="147.0" r="2.55" fill="#00baba" stroke="#000" stroke-opacity="0.75" stroke-width="0.75"/>
<circle cx="706.1" cy="145.9" r="2.55" fill="#3ebaba" stroke="#000" stroke-opacity="0.75" stroke-width="0.75"/>
<circle cx="713.8" cy="145.2" r="2.55" fill="#5cbaba" stroke="#000" stroke-opacity="0.75" stroke-width="0.75"/>
<circle cx="720.9" cy="143.8" r="2.55" fill="#76baba" stroke="#000" stroke-opacity="0.75" stroke-width="0.75"/>
<circle cx="729.0" cy="141.9" r="2.55" fill="#8ebaba" stroke="#000" stroke-opacity="0.75" stroke-width="0.75"/>
<circle cx="899.2" cy="113.8" r="2.55" fill="#ba0000" stroke="#000" stroke-opacity="0.75" stroke-width="0.75"/>
<circle cx="871.9" cy="119.1" r="2.55" fill="#ba3e3e" stroke="#000" stroke-opacity="0.75" stroke-width="0.75"/>
<circle cx="838.3" cy="124.1" r="2.55" fill="#ba5c5c" stroke="#000" stroke-opacity="0.75" stroke-width="0.75"/>
<circle cx="806.6" cy="130.7" r="2.55" fill="#ba7676" stroke="#000" stroke-opacity="0.75" stroke-width="0.75"/>
<circle cx="769.9" cy="135.6" r="2.55" fill="#ba8e8e" stroke="#000" stroke-opacity="0.75" stroke-width="0.75"/>
<circle cx="807.4" cy="210.1" r="2.55" fill="#ba00ba" stroke="#000" stroke-opacity="0.75" stroke-width="0.75"/>
<circle cx="790.8" cy="192.7" r="2.55" fill="#ba3eba" stroke="#000" stroke-opacity="0.75" stroke-width="0.75"/>
<circle cx="774.8" cy="177.1" r="2.55" fill="#ba5cba" stroke="#000" stroke-opacity="0.75" stroke-width="0.75"/>
<circle cx="760.8" cy="164.1" r="2.55" fill="#ba76ba" stroke="#000" stroke-opacity="0.75" stroke-width="0.75"/>
<circle cx="747.9" cy="151.1" r="2.55" fill="#ba8eba" stroke="#000" stroke-opacity="0.75" stroke-width="0.75"/>
<circle cx="725.6" cy="294.1" r="2.55" fill="#0000ba" stroke="#000" stroke-opacity="0.75" stroke-width="0.75"/>
<circle cx="729.0" cy="252.5" r="2.55" fill="#3e3eba" stroke="#000" stroke-opacity="0.75" stroke-width="0.75"/>
<circle cx="731.5" cy="215.7" r="2.55" fill="#5c5cba" stroke="#000" stroke-opacity="0.75" stroke-width="0.75"/>
<circle cx="734.1" cy="185.1" r="2.55" fill="#7676ba" stroke="#000" stroke-opacity="0.75" stroke-width="0.75"/>
<circle cx="736.3" cy="160.9" r="2.55" fill="#8e8eba" stroke="#000" stroke-opacity="0.75" stroke-width="0.75"/>
<circle cx="730.8" cy="184.4" r="2.5" fill="#000000" stroke="#000" stroke-width="0.5"/>
<circle cx="736.3" cy="139.8" r="2.2" fill="#ffffff" stroke="#b4b4b4" stroke-width="0.5"/>
</g>
</g>
<g id="data-table">
<rect x="375.30" y="396.10" width="400.50" height="143.40" fill="#1a1a1a"/>
<rect x="376.90" y="397.70" width="397.30" height="16.20" fill="url(#thead)"/>
<rect x="376.90" y="413.90" width="397.30" height="15.65" fill="#404040"/>
<text x="388.10" y="426.20" font-size="10.32" textLength="51.40" lengthAdjust="spacingAndGlyphs" font-weight="bold" fill="#f4f4f4">x: CIE31</text>
<text x="497.40" y="426.20" font-size="10.47" textLength="40.80" lengthAdjust="spacingAndGlyphs" fill="#ededed">0.3370</text>
<text x="553.50" y="426.20" font-size="10.47" textLength="40.80" lengthAdjust="spacingAndGlyphs" fill="#ededed">0.3594</text>
<text x="609.70" y="426.20" font-size="10.47" textLength="40.80" lengthAdjust="spacingAndGlyphs" fill="#ededed">0.3803</text>
<text x="665.80" y="426.20" font-size="10.47" textLength="40.80" lengthAdjust="spacingAndGlyphs" fill="#ededed">0.4000</text>
<text x="721.70" y="426.20" font-size="10.47" textLength="40.80" lengthAdjust="spacingAndGlyphs" fill="#ededed">0.4182</text>
<rect x="376.90" y="429.45" width="397.30" height="15.65" fill="#818181"/>
<text x="388.10" y="441.75" font-size="10.32" textLength="51.40" lengthAdjust="spacingAndGlyphs" font-weight="bold" fill="#f4f4f4">y: CIE31</text>
<text x="497.40" y="441.75" font-size="10.47" textLength="40.80" lengthAdjust="spacingAndGlyphs" fill="#ededed">0.3650</text>
<text x="553.50" y="441.75" font-size="10.47" textLength="40.80" lengthAdjust="spacingAndGlyphs" fill="#ededed">0.4036</text>
<text x="609.70" y="441.75" font-size="10.47" textLength="40.80" lengthAdjust="spacingAndGlyphs" fill="#ededed">0.4401</text>
<text x="665.80" y="441.75" font-size="10.47" textLength="40.80" lengthAdjust="spacingAndGlyphs" fill="#ededed">0.4697</text>
<text x="721.70" y="441.75" font-size="10.47" textLength="40.80" lengthAdjust="spacingAndGlyphs" fill="#ededed">0.5014</text>
<rect x="376.90" y="445.00" width="397.30" height="15.65" fill="#404040"/>
<text x="388.10" y="457.30" font-size="10.32" textLength="7.90" lengthAdjust="spacingAndGlyphs" font-weight="bold" fill="#f4f4f4">Y</text>
<text x="497.40" y="457.30" font-size="10.47" textLength="47.60" lengthAdjust="spacingAndGlyphs" fill="#ededed">60.7066</text>
<text x="553.50" y="457.30" font-size="10.47" textLength="47.60" lengthAdjust="spacingAndGlyphs" fill="#ededed">59.5487</text>
<text x="609.70" y="457.30" font-size="10.47" textLength="47.60" lengthAdjust="spacingAndGlyphs" fill="#ededed">58.9873</text>
<text x="665.80" y="457.30" font-size="10.47" textLength="47.60" lengthAdjust="spacingAndGlyphs" fill="#ededed">58.3189</text>
<text x="721.70" y="457.30" font-size="10.47" textLength="47.60" lengthAdjust="spacingAndGlyphs" fill="#ededed">57.5047</text>
<rect x="376.90" y="460.55" width="397.30" height="15.65" fill="#818181"/>
<text x="388.10" y="472.85" font-size="10.32" textLength="93.60" lengthAdjust="spacingAndGlyphs" font-weight="bold" fill="#f4f4f4">Target x:CIE31</text>
<text x="497.40" y="472.85" font-size="10.47" textLength="40.80" lengthAdjust="spacingAndGlyphs" fill="#ededed">0.3360</text>
<text x="553.50" y="472.85" font-size="10.47" textLength="40.80" lengthAdjust="spacingAndGlyphs" fill="#ededed">0.3595</text>
<text x="609.70" y="472.85" font-size="10.47" textLength="40.80" lengthAdjust="spacingAndGlyphs" fill="#ededed">0.3814</text>
<text x="665.80" y="472.85" font-size="10.47" textLength="40.80" lengthAdjust="spacingAndGlyphs" fill="#ededed">0.4008</text>
<text x="721.70" y="472.85" font-size="10.47" textLength="40.80" lengthAdjust="spacingAndGlyphs" fill="#ededed">0.4193</text>
<rect x="376.90" y="476.10" width="397.30" height="15.65" fill="#404040"/>
<text x="388.10" y="488.40" font-size="10.32" textLength="93.60" lengthAdjust="spacingAndGlyphs" font-weight="bold" fill="#f4f4f4">Target y:CIE31</text>
<text x="497.40" y="488.40" font-size="10.47" textLength="40.80" lengthAdjust="spacingAndGlyphs" fill="#ededed">0.3675</text>
<text x="553.50" y="488.40" font-size="10.47" textLength="40.80" lengthAdjust="spacingAndGlyphs" fill="#ededed">0.4064</text>
<text x="609.70" y="488.40" font-size="10.47" textLength="40.80" lengthAdjust="spacingAndGlyphs" fill="#ededed">0.4426</text>
<text x="665.80" y="488.40" font-size="10.47" textLength="40.80" lengthAdjust="spacingAndGlyphs" fill="#ededed">0.4747</text>
<text x="721.70" y="488.40" font-size="10.47" textLength="40.80" lengthAdjust="spacingAndGlyphs" fill="#ededed">0.5053</text>
<rect x="376.90" y="491.65" width="397.30" height="15.65" fill="#818181"/>
<text x="388.10" y="503.95" font-size="10.32" textLength="54.30" lengthAdjust="spacingAndGlyphs" font-weight="bold" fill="#f4f4f4">Target Y</text>
<text x="497.40" y="503.95" font-size="10.47" textLength="47.60" lengthAdjust="spacingAndGlyphs" fill="#ededed">61.5800</text>
<text x="553.50" y="503.95" font-size="10.47" textLength="47.60" lengthAdjust="spacingAndGlyphs" fill="#ededed">60.4516</text>
<text x="609.70" y="503.95" font-size="10.47" textLength="47.60" lengthAdjust="spacingAndGlyphs" fill="#ededed">59.6074</text>
<text x="665.80" y="503.95" font-size="10.47" textLength="47.60" lengthAdjust="spacingAndGlyphs" fill="#ededed">58.9843</text>
<text x="721.70" y="503.95" font-size="10.47" textLength="47.60" lengthAdjust="spacingAndGlyphs" fill="#ededed">58.4732</text>
<rect x="376.90" y="507.20" width="397.30" height="15.65" fill="#404040"/>
<text x="388.10" y="519.50" font-size="10.32" textLength="53.40" lengthAdjust="spacingAndGlyphs" font-weight="bold" fill="#f4f4f4">ΔE 2000</text>
<text x="497.40" y="519.50" font-size="10.47" textLength="40.80" lengthAdjust="spacingAndGlyphs" fill="#ededed">1.4000</text>
<text x="553.50" y="519.50" font-size="10.47" textLength="40.80" lengthAdjust="spacingAndGlyphs" fill="#ededed">0.7435</text>
<text x="609.70" y="519.50" font-size="10.47" textLength="40.80" lengthAdjust="spacingAndGlyphs" fill="#ededed">0.4605</text>
<text x="665.80" y="519.50" font-size="10.47" textLength="40.80" lengthAdjust="spacingAndGlyphs" fill="#ededed">0.7437</text>
<text x="721.70" y="519.50" font-size="10.47" textLength="40.80" lengthAdjust="spacingAndGlyphs" fill="#ededed">0.6757</text>
<rect x="376.90" y="522.75" width="397.30" height="15.65" fill="#818181"/>
<text x="388.10" y="535.05" font-size="10.32" textLength="42.80" lengthAdjust="spacingAndGlyphs" font-weight="bold" fill="#f4f4f4">ΔE ITP</text>
<text x="497.40" y="535.05" font-size="10.47" textLength="40.80" lengthAdjust="spacingAndGlyphs" fill="#ededed">1.6754</text>
<text x="553.50" y="535.05" font-size="10.47" textLength="40.80" lengthAdjust="spacingAndGlyphs" fill="#ededed">1.5557</text>
<text x="609.70" y="535.05" font-size="10.47" textLength="40.80" lengthAdjust="spacingAndGlyphs" fill="#ededed">1.4010</text>
<text x="665.80" y="535.05" font-size="10.47" textLength="40.80" lengthAdjust="spacingAndGlyphs" fill="#ededed">2.5241</text>
<text x="721.70" y="535.05" font-size="10.47" textLength="40.80" lengthAdjust="spacingAndGlyphs" fill="#ededed">2.6938</text>
<text x="510.10" y="409.90" font-size="10.03" textLength="23.40" lengthAdjust="spacingAndGlyphs" fill="#f0f0f0">20%</text>
<text x="566.20" y="409.90" font-size="10.03" textLength="23.40" lengthAdjust="spacingAndGlyphs" fill="#f0f0f0">40%</text>
<text x="622.00" y="409.90" font-size="10.03" textLength="23.40" lengthAdjust="spacingAndGlyphs" fill="#f0f0f0">60%</text>
<text x="678.20" y="409.90" font-size="10.03" textLength="23.40" lengthAdjust="spacingAndGlyphs" fill="#f0f0f0">80%</text>
<text x="730.70" y="409.90" font-size="10.03" textLength="31.60" lengthAdjust="spacingAndGlyphs" fill="#f0f0f0">100%</text>
</g>
</svg>
</body>
</html>
